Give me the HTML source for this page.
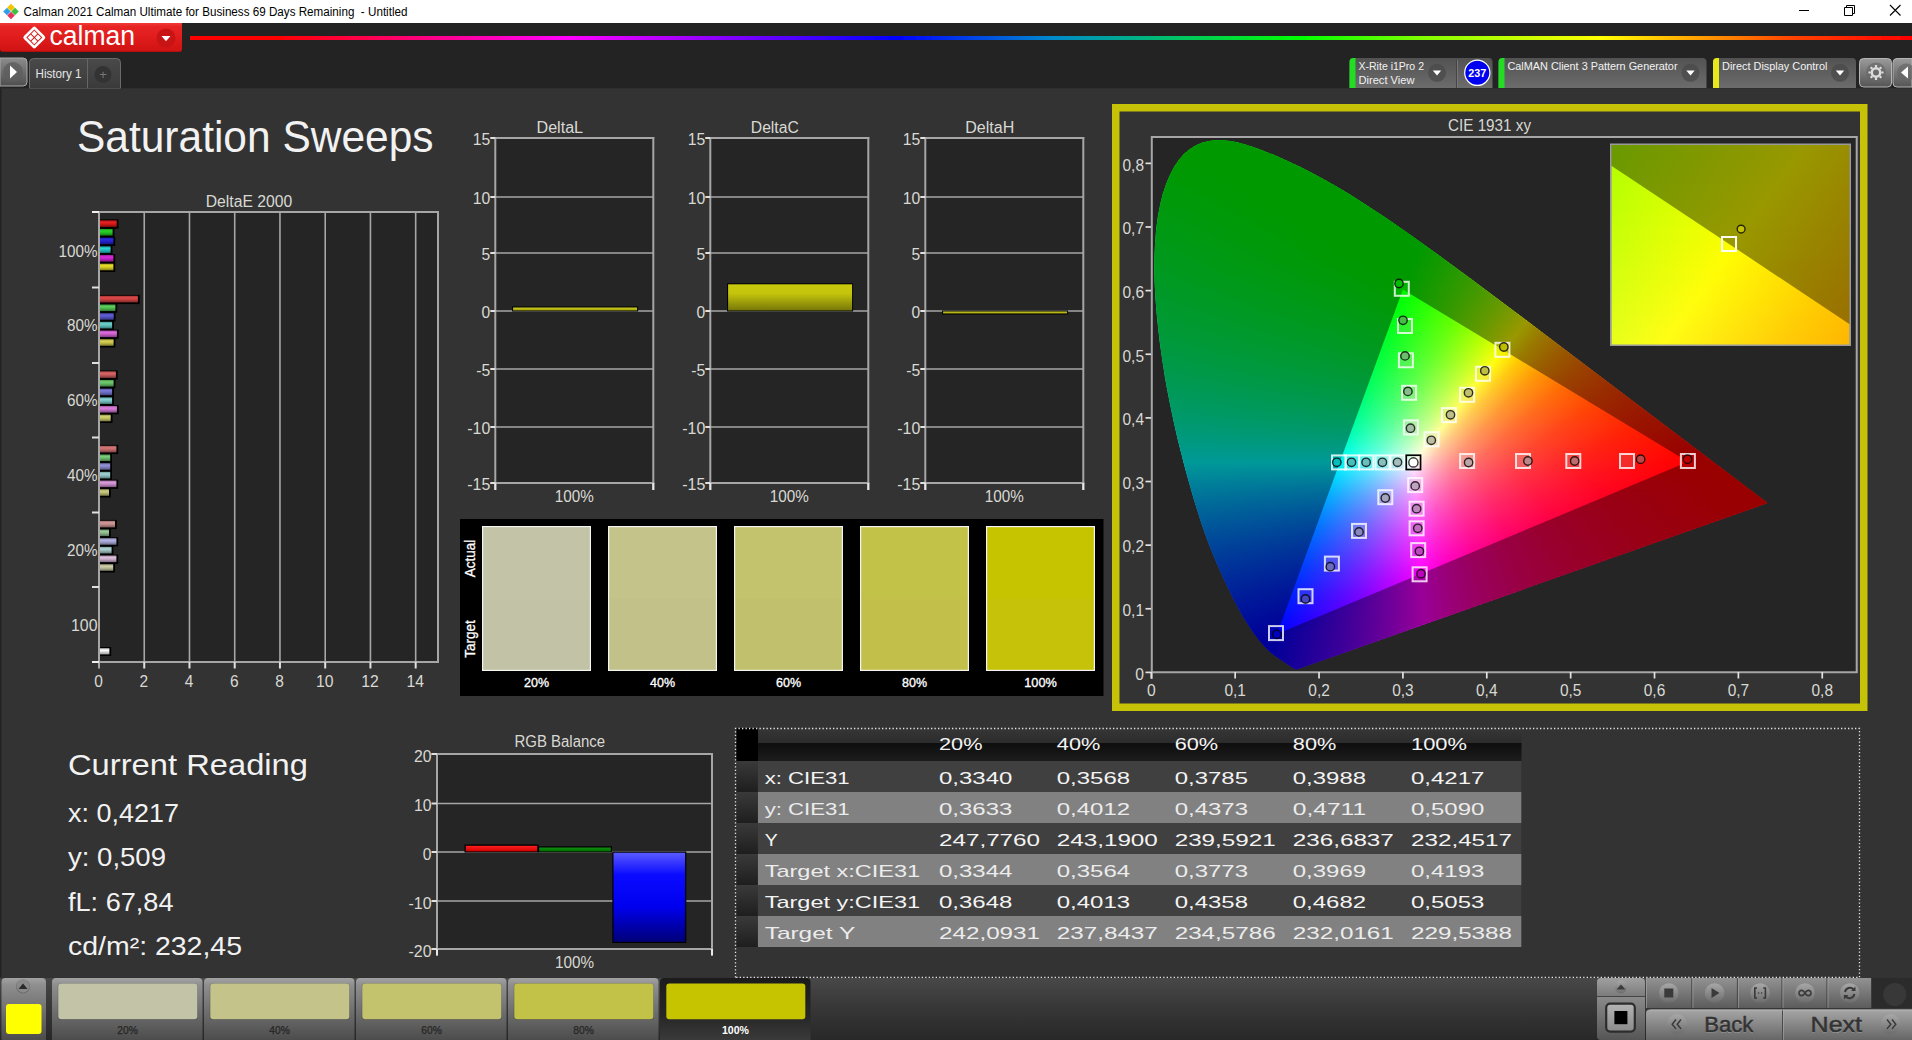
<!DOCTYPE html>
<html><head><meta charset="utf-8"><title>Calman 2021 - Saturation Sweeps</title>
<style>html,body{margin:0;padding:0;background:#333;overflow:hidden}svg{display:block;font-family:"Liberation Sans",sans-serif}</style>
</head><body>
<svg width="1912" height="1040" viewBox="0 0 1912 1040">
<defs>
<linearGradient id="rb" x1="0" y1="0" x2="1" y2="0"><stop offset="0" stop-color="#f00"/><stop offset="0.05" stop-color="#f00"/><stop offset="0.22" stop-color="#f0f"/><stop offset="0.41" stop-color="#00f"/><stop offset="0.5" stop-color="#08c"/><stop offset="0.645" stop-color="#0f0"/><stop offset="0.72" stop-color="#8f0"/><stop offset="0.82" stop-color="#ff0"/><stop offset="0.93" stop-color="#f40"/><stop offset="1" stop-color="#f00"/></linearGradient>
<filter id="bl" x="-1%" y="-100%" width="102%" height="300%"><feGaussianBlur stdDeviation="0 0.7"/></filter>
<linearGradient id="cal" x1="0" y1="0" x2="0" y2="1"><stop offset="0" stop-color="#f03a3a"/><stop offset="0.12" stop-color="#e82525"/><stop offset="0.5" stop-color="#e01c1c"/><stop offset="1" stop-color="#cf1212"/></linearGradient>
<linearGradient id="pb" x1="0" y1="0" x2="0" y2="1"><stop offset="0" stop-color="#8c8c8c"/><stop offset="1" stop-color="#4e4e4e"/></linearGradient>
<linearGradient id="tab" x1="0" y1="0" x2="0" y2="1"><stop offset="0" stop-color="#4a4a4a"/><stop offset="1" stop-color="#3a3a3a"/></linearGradient>
<linearGradient id="pn" x1="0" y1="0" x2="0" y2="1"><stop offset="0" stop-color="#525252"/><stop offset="1" stop-color="#6c6c6c"/></linearGradient>
<linearGradient id="gb" x1="0" y1="0" x2="0" y2="1"><stop offset="0" stop-color="#9a9a9a"/><stop offset="1" stop-color="#555"/></linearGradient>
<linearGradient id="b0" x1="0" y1="0" x2="0" y2="1"><stop offset="0" stop-color="#a71313"/><stop offset="0.3" stop-color="#e92222"/><stop offset="0.6" stop-color="#cc1717"/><stop offset="1" stop-color="#850f0f"/></linearGradient>
<linearGradient id="b1" x1="0" y1="0" x2="0" y2="1"><stop offset="0" stop-color="#1b981b"/><stop offset="0.3" stop-color="#2cd42c"/><stop offset="0.6" stop-color="#21b921"/><stop offset="1" stop-color="#157815"/></linearGradient>
<linearGradient id="b2" x1="0" y1="0" x2="0" y2="1"><stop offset="0" stop-color="#1b1b9f"/><stop offset="0.3" stop-color="#2c2cdf"/><stop offset="0.6" stop-color="#2121c2"/><stop offset="1" stop-color="#15157f"/></linearGradient>
<linearGradient id="b3" x1="0" y1="0" x2="0" y2="1"><stop offset="0" stop-color="#1b9898"/><stop offset="0.3" stop-color="#2cd4d4"/><stop offset="0.6" stop-color="#21b9b9"/><stop offset="1" stop-color="#157878"/></linearGradient>
<linearGradient id="b4" x1="0" y1="0" x2="0" y2="1"><stop offset="0" stop-color="#9c1b9c"/><stop offset="0.3" stop-color="#da2cda"/><stop offset="0.6" stop-color="#be21be"/><stop offset="1" stop-color="#7c157c"/></linearGradient>
<linearGradient id="b5" x1="0" y1="0" x2="0" y2="1"><stop offset="0" stop-color="#a79f1b"/><stop offset="0.3" stop-color="#e9df2c"/><stop offset="0.6" stop-color="#ccc221"/><stop offset="1" stop-color="#857f15"/></linearGradient>
<linearGradient id="b6" x1="0" y1="0" x2="0" y2="1"><stop offset="0" stop-color="#9f3232"/><stop offset="0.3" stop-color="#df4c4c"/><stop offset="0.6" stop-color="#c23d3d"/><stop offset="1" stop-color="#7f2828"/></linearGradient>
<linearGradient id="b7" x1="0" y1="0" x2="0" y2="1"><stop offset="0" stop-color="#3e943e"/><stop offset="0.3" stop-color="#5ccf5c"/><stop offset="0.6" stop-color="#4cb44c"/><stop offset="1" stop-color="#317531"/></linearGradient>
<linearGradient id="b8" x1="0" y1="0" x2="0" y2="1"><stop offset="0" stop-color="#42429c"/><stop offset="0.3" stop-color="#6161da"/><stop offset="0.6" stop-color="#5050be"/><stop offset="1" stop-color="#34347c"/></linearGradient>
<linearGradient id="b9" x1="0" y1="0" x2="0" y2="1"><stop offset="0" stop-color="#4a9894"/><stop offset="0.3" stop-color="#6bd4cf"/><stop offset="0.6" stop-color="#5ab9b4"/><stop offset="1" stop-color="#3a7875"/></linearGradient>
<linearGradient id="b10" x1="0" y1="0" x2="0" y2="1"><stop offset="0" stop-color="#9f4a9f"/><stop offset="0.3" stop-color="#df6bdf"/><stop offset="0.6" stop-color="#c25ac2"/><stop offset="1" stop-color="#7f3a7f"/></linearGradient>
<linearGradient id="b11" x1="0" y1="0" x2="0" y2="1"><stop offset="0" stop-color="#9c983a"/><stop offset="0.3" stop-color="#dad456"/><stop offset="0.6" stop-color="#beb947"/><stop offset="1" stop-color="#7c782e"/></linearGradient>
<linearGradient id="b12" x1="0" y1="0" x2="0" y2="1"><stop offset="0" stop-color="#9c4646"/><stop offset="0.3" stop-color="#da6666"/><stop offset="0.6" stop-color="#be5555"/><stop offset="1" stop-color="#7c3737"/></linearGradient>
<linearGradient id="b13" x1="0" y1="0" x2="0" y2="1"><stop offset="0" stop-color="#4e944e"/><stop offset="0.3" stop-color="#71cf71"/><stop offset="0.6" stop-color="#5fb45f"/><stop offset="1" stop-color="#3e753e"/></linearGradient>
<linearGradient id="b14" x1="0" y1="0" x2="0" y2="1"><stop offset="0" stop-color="#55559c"/><stop offset="0.3" stop-color="#7b7bda"/><stop offset="0.6" stop-color="#6868be"/><stop offset="1" stop-color="#44447c"/></linearGradient>
<linearGradient id="b15" x1="0" y1="0" x2="0" y2="1"><stop offset="0" stop-color="#5d9898"/><stop offset="0.3" stop-color="#86d4d4"/><stop offset="0.6" stop-color="#72b9b9"/><stop offset="1" stop-color="#4a7878"/></linearGradient>
<linearGradient id="b16" x1="0" y1="0" x2="0" y2="1"><stop offset="0" stop-color="#9f599f"/><stop offset="0.3" stop-color="#df80df"/><stop offset="0.6" stop-color="#c26dc2"/><stop offset="1" stop-color="#7f477f"/></linearGradient>
<linearGradient id="b17" x1="0" y1="0" x2="0" y2="1"><stop offset="0" stop-color="#98984e"/><stop offset="0.3" stop-color="#d4d471"/><stop offset="0.6" stop-color="#b9b95f"/><stop offset="1" stop-color="#78783e"/></linearGradient>
<linearGradient id="b18" x1="0" y1="0" x2="0" y2="1"><stop offset="0" stop-color="#9a5454"/><stop offset="0.3" stop-color="#d77979"/><stop offset="0.6" stop-color="#bc6666"/><stop offset="1" stop-color="#7a4242"/></linearGradient>
<linearGradient id="b19" x1="0" y1="0" x2="0" y2="1"><stop offset="0" stop-color="#559255"/><stop offset="0.3" stop-color="#7bcd7b"/><stop offset="0.6" stop-color="#68b268"/><stop offset="1" stop-color="#447444"/></linearGradient>
<linearGradient id="b20" x1="0" y1="0" x2="0" y2="1"><stop offset="0" stop-color="#69699d"/><stop offset="0.3" stop-color="#9595dc"/><stop offset="0.6" stop-color="#8080bf"/><stop offset="1" stop-color="#53537d"/></linearGradient>
<linearGradient id="b21" x1="0" y1="0" x2="0" y2="1"><stop offset="0" stop-color="#719898"/><stop offset="0.3" stop-color="#a0d4d4"/><stop offset="0.6" stop-color="#89b9b9"/><stop offset="1" stop-color="#597878"/></linearGradient>
<linearGradient id="b22" x1="0" y1="0" x2="0" y2="1"><stop offset="0" stop-color="#9c6d9c"/><stop offset="0.3" stop-color="#da9bda"/><stop offset="0.6" stop-color="#be85be"/><stop offset="1" stop-color="#7c567c"/></linearGradient>
<linearGradient id="b23" x1="0" y1="0" x2="0" y2="1"><stop offset="0" stop-color="#94945c"/><stop offset="0.3" stop-color="#cfcf83"/><stop offset="0.6" stop-color="#b4b470"/><stop offset="1" stop-color="#757549"/></linearGradient>
<linearGradient id="b24" x1="0" y1="0" x2="0" y2="1"><stop offset="0" stop-color="#986d6d"/><stop offset="0.3" stop-color="#d49b9b"/><stop offset="0.6" stop-color="#b98585"/><stop offset="1" stop-color="#785656"/></linearGradient>
<linearGradient id="b25" x1="0" y1="0" x2="0" y2="1"><stop offset="0" stop-color="#6d906d"/><stop offset="0.3" stop-color="#9bca9b"/><stop offset="0.6" stop-color="#85af85"/><stop offset="1" stop-color="#567256"/></linearGradient>
<linearGradient id="b26" x1="0" y1="0" x2="0" y2="1"><stop offset="0" stop-color="#8080a5"/><stop offset="0.3" stop-color="#b5b5e6"/><stop offset="0.6" stop-color="#9c9cc9"/><stop offset="1" stop-color="#666683"/></linearGradient>
<linearGradient id="b27" x1="0" y1="0" x2="0" y2="1"><stop offset="0" stop-color="#7c9898"/><stop offset="0.3" stop-color="#b0d4d4"/><stop offset="0.6" stop-color="#98b9b9"/><stop offset="1" stop-color="#637878"/></linearGradient>
<linearGradient id="b28" x1="0" y1="0" x2="0" y2="1"><stop offset="0" stop-color="#9f889f"/><stop offset="0.3" stop-color="#dfbfdf"/><stop offset="0.6" stop-color="#c2a6c2"/><stop offset="1" stop-color="#7f6c7f"/></linearGradient>
<linearGradient id="b29" x1="0" y1="0" x2="0" y2="1"><stop offset="0" stop-color="#959578"/><stop offset="0.3" stop-color="#d1d1aa"/><stop offset="0.6" stop-color="#b6b693"/><stop offset="1" stop-color="#777760"/></linearGradient>
<linearGradient id="bw" x1="0" y1="0" x2="0" y2="1"><stop offset="0" stop-color="#bbb"/><stop offset="0.35" stop-color="#fff"/><stop offset="1" stop-color="#999"/></linearGradient>
<linearGradient id="ybar" x1="0" y1="0" x2="0" y2="1"><stop offset="0" stop-color="#c9c90c"/><stop offset="0.35" stop-color="#c4c40c"/><stop offset="1" stop-color="#77770a"/></linearGradient>
<linearGradient id="ybar2" x1="0" y1="0" x2="0" y2="1"><stop offset="0" stop-color="#d0d020"/><stop offset="1" stop-color="#a0a010"/></linearGradient>
<linearGradient id="rbar" x1="0" y1="0" x2="0" y2="1"><stop offset="0" stop-color="#ff2020"/><stop offset="1" stop-color="#d00000"/></linearGradient>
<linearGradient id="gbar" x1="0" y1="0" x2="0" y2="1"><stop offset="0" stop-color="#109010"/><stop offset="1" stop-color="#006a00"/></linearGradient>
<linearGradient id="bbar" x1="0" y1="0" x2="0" y2="1"><stop offset="0" stop-color="#5a5aff"/><stop offset="0.25" stop-color="#0a0aff"/><stop offset="0.6" stop-color="#0000f0"/><stop offset="1" stop-color="#000078"/></linearGradient>
<linearGradient id="th" x1="0" y1="0" x2="0" y2="1"><stop offset="0" stop-color="#363636"/><stop offset="0.46" stop-color="#2c2c2c"/><stop offset="0.47" stop-color="#0e0e0e"/><stop offset="1" stop-color="#1c1c1c"/></linearGradient>
<linearGradient id="gut" x1="0" y1="0" x2="0" y2="1"><stop offset="0" stop-color="#3a3a3a"/><stop offset="1" stop-color="#1e1e1e"/></linearGradient>
<clipPath id="loc"><path d="M1297.3 669.2L1295.4 669.3L1293.5 668.3L1280.0 659.3L1274.5 655.4L1270.7 652.4L1266.5 648.5L1263.3 645.1L1259.6 640.8L1255.4 635.5L1250.9 629.1L1243.2 617.0L1234.4 600.9L1224.3 580.3L1216.8 563.6L1208.9 544.3L1205.0 533.6L1201.0 522.2L1193.3 497.5L1185.5 470.1L1177.9 440.3L1174.4 424.8L1171.0 409.0L1167.8 393.0L1164.9 376.9L1162.4 360.8L1160.1 344.7L1158.2 328.7L1156.6 313.0L1155.4 297.6L1154.6 282.8L1154.3 268.3L1154.5 254.4L1155.2 241.0L1156.3 228.1L1158.0 215.8L1160.2 204.3L1162.9 193.6L1166.2 183.7L1170.0 174.8L1174.2 166.8L1178.8 159.9L1183.9 154.1L1189.3 149.4L1195.1 145.7L1201.1 143.0L1207.3 141.2L1213.6 140.2L1220.1 140.0L1226.7 140.5L1233.4 141.6L1240.2 143.1L1247.0 145.0L1253.9 147.2L1260.8 149.7L1274.4 155.1L1287.6 161.0L1300.5 167.1L1313.1 173.5L1325.5 180.2L1337.8 187.3L1350.0 194.6L1362.1 202.2L1386.2 218.1L1410.3 234.7L1440.2 256.2L1470.2 278.2L1535.5 327.2L1767.5 503.1z"/></clipPath>
<linearGradient id="g0" gradientUnits="userSpaceOnUse" x1="1202" x2="1238"><stop offset="0" stop-color="#0f0"/><stop offset="1" stop-color="#0f0"/></linearGradient>
<linearGradient id="g1" gradientUnits="userSpaceOnUse" x1="1196" x2="1246"><stop offset="0" stop-color="#0f0"/><stop offset="1" stop-color="#0f0"/></linearGradient>
<linearGradient id="g2" gradientUnits="userSpaceOnUse" x1="1192" x2="1253"><stop offset="0" stop-color="#0f0"/><stop offset="1" stop-color="#0f0"/></linearGradient>
<linearGradient id="g3" gradientUnits="userSpaceOnUse" x1="1189" x2="1259"><stop offset="0" stop-color="#0f0"/><stop offset="1" stop-color="#0f0"/></linearGradient>
<linearGradient id="g4" gradientUnits="userSpaceOnUse" x1="1186" x2="1264"><stop offset="0" stop-color="#0f0"/><stop offset="1" stop-color="#0f0"/></linearGradient>
<linearGradient id="g5" gradientUnits="userSpaceOnUse" x1="1184" x2="1269"><stop offset="0" stop-color="#0f0"/><stop offset="1" stop-color="#0f0"/></linearGradient>
<linearGradient id="g6" gradientUnits="userSpaceOnUse" x1="1181" x2="1274"><stop offset="0" stop-color="#0f0"/><stop offset="1" stop-color="#0f0"/></linearGradient>
<linearGradient id="g7" gradientUnits="userSpaceOnUse" x1="1180" x2="1279"><stop offset="0" stop-color="#0f0"/><stop offset="1" stop-color="#0f0"/></linearGradient>
<linearGradient id="g8" gradientUnits="userSpaceOnUse" x1="1178" x2="1284"><stop offset="0" stop-color="#00ff01"/><stop offset="1" stop-color="#0f0"/></linearGradient>
<linearGradient id="g9" gradientUnits="userSpaceOnUse" x1="1176" x2="1288"><stop offset="0" stop-color="#00ff02"/><stop offset="1" stop-color="#0f0"/></linearGradient>
<linearGradient id="g10" gradientUnits="userSpaceOnUse" x1="1175" x2="1292"><stop offset="0" stop-color="#00ff03"/><stop offset="0.641" stop-color="#0f0"/><stop offset="1" stop-color="#0f0"/></linearGradient>
<linearGradient id="g11" gradientUnits="userSpaceOnUse" x1="1174" x2="1297"><stop offset="0" stop-color="#00ff04"/><stop offset="0.4146" stop-color="#0f0"/><stop offset="1" stop-color="#0f0"/></linearGradient>
<linearGradient id="g12" gradientUnits="userSpaceOnUse" x1="1172" x2="1301"><stop offset="0" stop-color="#00ff05"/><stop offset="0.3721" stop-color="#0f0"/><stop offset="1" stop-color="#0f0"/></linearGradient>
<linearGradient id="g13" gradientUnits="userSpaceOnUse" x1="1171" x2="1305"><stop offset="0" stop-color="#00ff06"/><stop offset="0.3731" stop-color="#0f0"/><stop offset="1" stop-color="#0f0"/></linearGradient>
<linearGradient id="g14" gradientUnits="userSpaceOnUse" x1="1170" x2="1309"><stop offset="0" stop-color="#00ff07"/><stop offset="0.3741" stop-color="#0f0"/><stop offset="1" stop-color="#0f0"/></linearGradient>
<linearGradient id="g15" gradientUnits="userSpaceOnUse" x1="1169" x2="1313"><stop offset="0" stop-color="#00ff08"/><stop offset="0.3819" stop-color="#0f0"/><stop offset="1" stop-color="#0f0"/></linearGradient>
<linearGradient id="g16" gradientUnits="userSpaceOnUse" x1="1168" x2="1317"><stop offset="0" stop-color="#00ff09"/><stop offset="0.396" stop-color="#0f0"/><stop offset="1" stop-color="#0f0"/></linearGradient>
<linearGradient id="g17" gradientUnits="userSpaceOnUse" x1="1167" x2="1320"><stop offset="0" stop-color="#00ff0a"/><stop offset="0.4052" stop-color="#0f0"/><stop offset="1" stop-color="#0f0"/></linearGradient>
<linearGradient id="g18" gradientUnits="userSpaceOnUse" x1="1166" x2="1324"><stop offset="0" stop-color="#00ff0b"/><stop offset="0.4177" stop-color="#0f0"/><stop offset="1" stop-color="#0f0"/></linearGradient>
<linearGradient id="g19" gradientUnits="userSpaceOnUse" x1="1165" x2="1328"><stop offset="0" stop-color="#00ff0c"/><stop offset="0.4294" stop-color="#0f0"/><stop offset="1" stop-color="#0f0"/></linearGradient>
<linearGradient id="g20" gradientUnits="userSpaceOnUse" x1="1164" x2="1331"><stop offset="0" stop-color="#00ff0d"/><stop offset="0.4431" stop-color="#0f0"/><stop offset="1" stop-color="#0f0"/></linearGradient>
<linearGradient id="g21" gradientUnits="userSpaceOnUse" x1="1164" x2="1335"><stop offset="0" stop-color="#00ff0d"/><stop offset="0.4503" stop-color="#0f0"/><stop offset="1" stop-color="#0f0"/></linearGradient>
<linearGradient id="g22" gradientUnits="userSpaceOnUse" x1="1163" x2="1338"><stop offset="0" stop-color="#00ff0e"/><stop offset="0.4629" stop-color="#0f0"/><stop offset="1" stop-color="#0f0"/></linearGradient>
<linearGradient id="g23" gradientUnits="userSpaceOnUse" x1="1162" x2="1341"><stop offset="0" stop-color="#00ff0f"/><stop offset="0.4749" stop-color="#0f0"/><stop offset="1" stop-color="#0f0"/></linearGradient>
<linearGradient id="g24" gradientUnits="userSpaceOnUse" x1="1162" x2="1345"><stop offset="0" stop-color="#00ff10"/><stop offset="0.4809" stop-color="#0f0"/><stop offset="1" stop-color="#0f0"/></linearGradient>
<linearGradient id="g25" gradientUnits="userSpaceOnUse" x1="1161" x2="1348"><stop offset="0" stop-color="#0f1"/><stop offset="0.492" stop-color="#0f0"/><stop offset="1" stop-color="#0f0"/></linearGradient>
<linearGradient id="g26" gradientUnits="userSpaceOnUse" x1="1160" x2="1351"><stop offset="0" stop-color="#00ff12"/><stop offset="0.5026" stop-color="#0f0"/><stop offset="1" stop-color="#0f0"/></linearGradient>
<linearGradient id="g27" gradientUnits="userSpaceOnUse" x1="1160" x2="1355"><stop offset="0" stop-color="#00ff13"/><stop offset="0.5128" stop-color="#0f0"/><stop offset="1" stop-color="#0f0"/></linearGradient>
<linearGradient id="g28" gradientUnits="userSpaceOnUse" x1="1159" x2="1358"><stop offset="0" stop-color="#00ff14"/><stop offset="0.5226" stop-color="#0f0"/><stop offset="1" stop-color="#0f0"/></linearGradient>
<linearGradient id="g29" gradientUnits="userSpaceOnUse" x1="1159" x2="1361"><stop offset="0" stop-color="#00ff15"/><stop offset="0.5297" stop-color="#0f0"/><stop offset="1" stop-color="#0f0"/></linearGradient>
<linearGradient id="g30" gradientUnits="userSpaceOnUse" x1="1158" x2="1364"><stop offset="0" stop-color="#00ff16"/><stop offset="0.5388" stop-color="#0f0"/><stop offset="1" stop-color="#0f0"/></linearGradient>
<linearGradient id="g31" gradientUnits="userSpaceOnUse" x1="1158" x2="1367"><stop offset="0" stop-color="#00ff16"/><stop offset="0.5455" stop-color="#0f0"/><stop offset="1" stop-color="#0f0"/></linearGradient>
<linearGradient id="g32" gradientUnits="userSpaceOnUse" x1="1157" x2="1370"><stop offset="0" stop-color="#00ff17"/><stop offset="0.554" stop-color="#0f0"/><stop offset="1" stop-color="#0f0"/></linearGradient>
<linearGradient id="g33" gradientUnits="userSpaceOnUse" x1="1157" x2="1374"><stop offset="0" stop-color="#00ff18"/><stop offset="0.5622" stop-color="#0f0"/><stop offset="1" stop-color="#0f0"/></linearGradient>
<linearGradient id="g34" gradientUnits="userSpaceOnUse" x1="1157" x2="1377"><stop offset="0" stop-color="#00ff19"/><stop offset="0.5682" stop-color="#0f0"/><stop offset="1" stop-color="#0f0"/></linearGradient>
<linearGradient id="g35" gradientUnits="userSpaceOnUse" x1="1156" x2="1380"><stop offset="0" stop-color="#00ff1a"/><stop offset="0.5759" stop-color="#0f0"/><stop offset="1" stop-color="#0f0"/></linearGradient>
<linearGradient id="g36" gradientUnits="userSpaceOnUse" x1="1156" x2="1383"><stop offset="0" stop-color="#00ff1b"/><stop offset="0.5815" stop-color="#0f0"/><stop offset="1" stop-color="#0f0"/></linearGradient>
<linearGradient id="g37" gradientUnits="userSpaceOnUse" x1="1155" x2="1386"><stop offset="0" stop-color="#00ff1c"/><stop offset="0.5931" stop-color="#0f0"/><stop offset="1" stop-color="#0f0"/></linearGradient>
<linearGradient id="g38" gradientUnits="userSpaceOnUse" x1="1155" x2="1389"><stop offset="0" stop-color="#00ff1d"/><stop offset="0.5983" stop-color="#0f0"/><stop offset="1" stop-color="#0f0"/></linearGradient>
<linearGradient id="g39" gradientUnits="userSpaceOnUse" x1="1155" x2="1392"><stop offset="0" stop-color="#00ff1e"/><stop offset="0.6034" stop-color="#0f0"/><stop offset="1" stop-color="#0f0"/></linearGradient>
<linearGradient id="g40" gradientUnits="userSpaceOnUse" x1="1155" x2="1394"><stop offset="0" stop-color="#00ff1f"/><stop offset="0.6109" stop-color="#0f0"/><stop offset="1" stop-color="#0f0"/></linearGradient>
<linearGradient id="g41" gradientUnits="userSpaceOnUse" x1="1154" x2="1397"><stop offset="0" stop-color="#00ff20"/><stop offset="0.6173" stop-color="#0f0"/><stop offset="1" stop-color="#0f0"/></linearGradient>
<linearGradient id="g42" gradientUnits="userSpaceOnUse" x1="1154" x2="1400"><stop offset="0" stop-color="#00ff21"/><stop offset="0.626" stop-color="#0f0"/><stop offset="1" stop-color="#0f0"/></linearGradient>
<linearGradient id="g43" gradientUnits="userSpaceOnUse" x1="1154" x2="1403"><stop offset="0" stop-color="#0f2"/><stop offset="0.6305" stop-color="#0f0"/><stop offset="1" stop-color="#0f0"/></linearGradient>
<linearGradient id="g44" gradientUnits="userSpaceOnUse" x1="1154" x2="1406"><stop offset="0" stop-color="#00ff23"/><stop offset="0.6349" stop-color="#0f0"/><stop offset="1" stop-color="#0f0"/></linearGradient>
<linearGradient id="g45" gradientUnits="userSpaceOnUse" x1="1153" x2="1409"><stop offset="0" stop-color="#00ff24"/><stop offset="0.6406" stop-color="#0f0"/><stop offset="1" stop-color="#0f0"/></linearGradient>
<linearGradient id="g46" gradientUnits="userSpaceOnUse" x1="1153" x2="1412"><stop offset="0" stop-color="#00ff25"/><stop offset="0.6486" stop-color="#0f0"/><stop offset="1" stop-color="#0f0"/></linearGradient>
<linearGradient id="g47" gradientUnits="userSpaceOnUse" x1="1153" x2="1415"><stop offset="0" stop-color="#00ff26"/><stop offset="0.6527" stop-color="#0f0"/><stop offset="1" stop-color="#0f0"/></linearGradient>
<linearGradient id="g48" gradientUnits="userSpaceOnUse" x1="1153" x2="1417"><stop offset="0" stop-color="#00ff26"/><stop offset="0.6591" stop-color="#0f0"/><stop offset="1" stop-color="#0f0"/></linearGradient>
<linearGradient id="g49" gradientUnits="userSpaceOnUse" x1="1153" x2="1420"><stop offset="0" stop-color="#00ff27"/><stop offset="0.6629" stop-color="#0f0"/><stop offset="1" stop-color="#0f0"/></linearGradient>
<linearGradient id="g50" gradientUnits="userSpaceOnUse" x1="1153" x2="1423"><stop offset="0" stop-color="#00ff28"/><stop offset="0.6704" stop-color="#0f0"/><stop offset="0.9963" stop-color="#02ff00"/><stop offset="1" stop-color="#03ff00"/></linearGradient>
<linearGradient id="g51" gradientUnits="userSpaceOnUse" x1="1153" x2="1426"><stop offset="0" stop-color="#00ff29"/><stop offset="0.674" stop-color="#0f0"/><stop offset="0.9853" stop-color="#03ff00"/><stop offset="1" stop-color="#07ff00"/></linearGradient>
<linearGradient id="g52" gradientUnits="userSpaceOnUse" x1="1152" x2="1429"><stop offset="0" stop-color="#00ff2b"/><stop offset="0.6787" stop-color="#0f0"/><stop offset="0.9711" stop-color="#02ff00"/><stop offset="1" stop-color="#0cff00"/></linearGradient>
<linearGradient id="g53" gradientUnits="userSpaceOnUse" x1="1152" x2="1431"><stop offset="0" stop-color="#00ff2c"/><stop offset="0.6846" stop-color="#0f0"/><stop offset="0.9606" stop-color="#02ff00"/><stop offset="1" stop-color="#0fff00"/></linearGradient>
<linearGradient id="g54" gradientUnits="userSpaceOnUse" x1="1152" x2="1434"><stop offset="0" stop-color="#00ff2d"/><stop offset="0.6879" stop-color="#0f0"/><stop offset="0.9468" stop-color="#02ff00"/><stop offset="1" stop-color="#14ff00"/></linearGradient>
<linearGradient id="g55" gradientUnits="userSpaceOnUse" x1="1152" x2="1437"><stop offset="0" stop-color="#00ff2e"/><stop offset="0.6947" stop-color="#0f0"/><stop offset="0.9368" stop-color="#03ff00"/><stop offset="1" stop-color="#19ff00"/></linearGradient>
<linearGradient id="g56" gradientUnits="userSpaceOnUse" x1="1152" x2="1440"><stop offset="0" stop-color="#00ff2f"/><stop offset="0.6979" stop-color="#0f0"/><stop offset="0.9236" stop-color="#02ff00"/><stop offset="1" stop-color="#1eff00"/></linearGradient>
<linearGradient id="g57" gradientUnits="userSpaceOnUse" x1="1152" x2="1442"><stop offset="0" stop-color="#00ff30"/><stop offset="0.7034" stop-color="#0f0"/><stop offset="0.9138" stop-color="#02ff00"/><stop offset="1" stop-color="#2f0"/></linearGradient>
<linearGradient id="g58" gradientUnits="userSpaceOnUse" x1="1152" x2="1445"><stop offset="0" stop-color="#00ff31"/><stop offset="0.6621" stop-color="#00ff01"/><stop offset="0.901" stop-color="#02ff00"/><stop offset="1" stop-color="#27ff00"/></linearGradient>
<linearGradient id="g59" gradientUnits="userSpaceOnUse" x1="1152" x2="1448"><stop offset="0" stop-color="#00ff32"/><stop offset="0.652" stop-color="#00ff02"/><stop offset="0.8919" stop-color="#02ff00"/><stop offset="1" stop-color="#2cff00"/></linearGradient>
<linearGradient id="g60" gradientUnits="userSpaceOnUse" x1="1152" x2="1451"><stop offset="0" stop-color="#0f3"/><stop offset="0.6455" stop-color="#00ff03"/><stop offset="0.7893" stop-color="#0f0"/><stop offset="0.8796" stop-color="#02ff00"/><stop offset="1" stop-color="#32ff00"/></linearGradient>
<linearGradient id="g61" gradientUnits="userSpaceOnUse" x1="1152" x2="1453"><stop offset="0" stop-color="#00ff34"/><stop offset="0.6379" stop-color="#00ff05"/><stop offset="0.7475" stop-color="#0f0"/><stop offset="0.8704" stop-color="#02ff00"/><stop offset="1" stop-color="#36ff00"/></linearGradient>
<linearGradient id="g62" gradientUnits="userSpaceOnUse" x1="1152" x2="1456"><stop offset="0" stop-color="#00ff35"/><stop offset="0.6316" stop-color="#00ff06"/><stop offset="0.7401" stop-color="#0f0"/><stop offset="0.8586" stop-color="#01ff00"/><stop offset="1" stop-color="#3bff00"/></linearGradient>
<linearGradient id="g63" gradientUnits="userSpaceOnUse" x1="1152" x2="1459"><stop offset="0" stop-color="#00ff36"/><stop offset="0.6221" stop-color="#00ff07"/><stop offset="0.7362" stop-color="#0f0"/><stop offset="0.8502" stop-color="#02ff00"/><stop offset="1" stop-color="#41ff00"/></linearGradient>
<linearGradient id="g64" gradientUnits="userSpaceOnUse" x1="1152" x2="1462"><stop offset="0" stop-color="#00ff37"/><stop offset="0.6161" stop-color="#00ff08"/><stop offset="0.7355" stop-color="#0f0"/><stop offset="0.8387" stop-color="#02ff00"/><stop offset="1" stop-color="#47ff00"/></linearGradient>
<linearGradient id="g65" gradientUnits="userSpaceOnUse" x1="1152" x2="1464"><stop offset="0" stop-color="#00ff38"/><stop offset="0.609" stop-color="#00ff0a"/><stop offset="0.7404" stop-color="#0f0"/><stop offset="0.8301" stop-color="#02ff00"/><stop offset="1" stop-color="#4cff00"/></linearGradient>
<linearGradient id="g66" gradientUnits="userSpaceOnUse" x1="1152" x2="1467"><stop offset="0" stop-color="#00ff39"/><stop offset="0.6032" stop-color="#00ff0b"/><stop offset="0.7429" stop-color="#0f0"/><stop offset="0.8222" stop-color="#03ff00"/><stop offset="1" stop-color="#52ff00"/></linearGradient>
<linearGradient id="g67" gradientUnits="userSpaceOnUse" x1="1152" x2="1470"><stop offset="0" stop-color="#00ff3a"/><stop offset="0.5943" stop-color="#00ff0c"/><stop offset="0.7421" stop-color="#0f0"/><stop offset="0.8113" stop-color="#02ff00"/><stop offset="1" stop-color="#58ff00"/></linearGradient>
<linearGradient id="g68" gradientUnits="userSpaceOnUse" x1="1152" x2="1472"><stop offset="0" stop-color="#00ff3c"/><stop offset="0.5906" stop-color="#00ff0d"/><stop offset="0.75" stop-color="#0f0"/><stop offset="0.8031" stop-color="#02ff00"/><stop offset="1" stop-color="#5dff00"/></linearGradient>
<linearGradient id="g69" gradientUnits="userSpaceOnUse" x1="1152" x2="1475"><stop offset="0" stop-color="#00ff3d"/><stop offset="0.582" stop-color="#00ff0f"/><stop offset="0.7523" stop-color="#0f0"/><stop offset="0.7957" stop-color="#03ff00"/><stop offset="1" stop-color="#63ff00"/></linearGradient>
<linearGradient id="g70" gradientUnits="userSpaceOnUse" x1="1152" x2="1478"><stop offset="0" stop-color="#00ff3e"/><stop offset="0.5767" stop-color="#00ff10"/><stop offset="0.7546" stop-color="#0f0"/><stop offset="0.7853" stop-color="#03ff00"/><stop offset="0.9908" stop-color="#65ff00"/><stop offset="1" stop-color="#6aff00"/></linearGradient>
<linearGradient id="g71" gradientUnits="userSpaceOnUse" x1="1152" x2="1480"><stop offset="0" stop-color="#00ff3f"/><stop offset="0.5732" stop-color="#0f1"/><stop offset="0.7591" stop-color="#0f0"/><stop offset="0.7805" stop-color="#04ff00"/><stop offset="0.9848" stop-color="#67ff00"/><stop offset="1" stop-color="#6fff00"/></linearGradient>
<linearGradient id="g72" gradientUnits="userSpaceOnUse" x1="1152" x2="1483"><stop offset="0" stop-color="#00ff40"/><stop offset="0.565" stop-color="#00ff13"/><stop offset="0.7613" stop-color="#0f0"/><stop offset="0.9486" stop-color="#5aff00"/><stop offset="1" stop-color="#76ff00"/></linearGradient>
<linearGradient id="g73" gradientUnits="userSpaceOnUse" x1="1152" x2="1486"><stop offset="0" stop-color="#00ff41"/><stop offset="0.5599" stop-color="#00ff14"/><stop offset="0.7575" stop-color="#02ff00"/><stop offset="0.9551" stop-color="#64ff00"/><stop offset="1" stop-color="#7dff00"/></linearGradient>
<linearGradient id="g74" gradientUnits="userSpaceOnUse" x1="1152" x2="1489"><stop offset="0" stop-color="#00ff43"/><stop offset="0.5519" stop-color="#00ff15"/><stop offset="0.7478" stop-color="#01ff00"/><stop offset="0.9436" stop-color="#64ff00"/><stop offset="1" stop-color="#85ff00"/></linearGradient>
<linearGradient id="g75" gradientUnits="userSpaceOnUse" x1="1153" x2="1491"><stop offset="0" stop-color="#0f4"/><stop offset="0.5503" stop-color="#00ff16"/><stop offset="0.7426" stop-color="#02ff01"/><stop offset="0.9349" stop-color="#64ff00"/><stop offset="1" stop-color="#8aff00"/></linearGradient>
<linearGradient id="g76" gradientUnits="userSpaceOnUse" x1="1153" x2="1494"><stop offset="0" stop-color="#00ff45"/><stop offset="0.5425" stop-color="#00ff18"/><stop offset="0.7331" stop-color="#02ff02"/><stop offset="0.9238" stop-color="#65ff00"/><stop offset="1" stop-color="#92ff00"/></linearGradient>
<linearGradient id="g77" gradientUnits="userSpaceOnUse" x1="1153" x2="1497"><stop offset="0" stop-color="#00ff46"/><stop offset="0.5378" stop-color="#00ff19"/><stop offset="0.7238" stop-color="#02ff04"/><stop offset="0.814" stop-color="#2eff00"/><stop offset="0.9884" stop-color="#93ff00"/><stop offset="1" stop-color="#9aff00"/></linearGradient>
<linearGradient id="g78" gradientUnits="userSpaceOnUse" x1="1153" x2="1499"><stop offset="0" stop-color="#00ff47"/><stop offset="0.5318" stop-color="#00ff1b"/><stop offset="0.7197" stop-color="#03ff05"/><stop offset="0.7977" stop-color="#2aff00"/><stop offset="0.974" stop-color="#8fff00"/><stop offset="1" stop-color="#a0ff00"/></linearGradient>
<linearGradient id="g79" gradientUnits="userSpaceOnUse" x1="1153" x2="1502"><stop offset="0" stop-color="#00ff49"/><stop offset="0.5272" stop-color="#00ff1c"/><stop offset="0.7106" stop-color="#02ff07"/><stop offset="0.7908" stop-color="#2bff00"/><stop offset="0.9628" stop-color="#90ff00"/><stop offset="1" stop-color="#a9ff00"/></linearGradient>
<linearGradient id="g80" gradientUnits="userSpaceOnUse" x1="1153" x2="1505"><stop offset="0" stop-color="#00ff4a"/><stop offset="0.5227" stop-color="#00ff1d"/><stop offset="0.7017" stop-color="#02ff08"/><stop offset="0.7898" stop-color="#30ff00"/><stop offset="0.9574" stop-color="#94ff00"/><stop offset="1" stop-color="#b1ff00"/></linearGradient>
<linearGradient id="g81" gradientUnits="userSpaceOnUse" x1="1153" x2="1507"><stop offset="0" stop-color="#00ff4b"/><stop offset="0.5169" stop-color="#00ff1f"/><stop offset="0.6949" stop-color="#01ff0a"/><stop offset="0.7938" stop-color="#36ff00"/><stop offset="0.9576" stop-color="#9aff00"/><stop offset="1" stop-color="#b8ff00"/></linearGradient>
<linearGradient id="g82" gradientUnits="userSpaceOnUse" x1="1153" x2="1510"><stop offset="0" stop-color="#00ff4d"/><stop offset="0.5126" stop-color="#00ff20"/><stop offset="0.6891" stop-color="#03ff0b"/><stop offset="0.7955" stop-color="#3cff00"/><stop offset="0.958" stop-color="#a3ff00"/><stop offset="1" stop-color="#c1ff00"/></linearGradient>
<linearGradient id="g83" gradientUnits="userSpaceOnUse" x1="1154" x2="1513"><stop offset="0" stop-color="#00ff4e"/><stop offset="0.507" stop-color="#0f2"/><stop offset="0.6797" stop-color="#02ff0d"/><stop offset="0.7967" stop-color="#42ff00"/><stop offset="0.9554" stop-color="#a9ff00"/><stop offset="1" stop-color="#caff00"/></linearGradient>
<linearGradient id="g84" gradientUnits="userSpaceOnUse" x1="1154" x2="1515"><stop offset="0" stop-color="#00ff4f"/><stop offset="0.5042" stop-color="#00ff23"/><stop offset="0.6731" stop-color="#02ff0f"/><stop offset="0.8006" stop-color="#49ff00"/><stop offset="0.9557" stop-color="#b0ff00"/><stop offset="1" stop-color="#d1ff00"/></linearGradient>
<linearGradient id="g85" gradientUnits="userSpaceOnUse" x1="1154" x2="1518"><stop offset="0" stop-color="#00ff50"/><stop offset="0.4973" stop-color="#00ff25"/><stop offset="0.6648" stop-color="#01ff11"/><stop offset="0.8022" stop-color="#50ff00"/><stop offset="0.9533" stop-color="#b7ff00"/><stop offset="1" stop-color="#dbff00"/></linearGradient>
<linearGradient id="g86" gradientUnits="userSpaceOnUse" x1="1154" x2="1520"><stop offset="0" stop-color="#00ff52"/><stop offset="0.4945" stop-color="#00ff26"/><stop offset="0.6612" stop-color="#02ff12"/><stop offset="0.806" stop-color="#57ff00"/><stop offset="0.9536" stop-color="#beff00"/><stop offset="1" stop-color="#e3ff00"/></linearGradient>
<linearGradient id="g87" gradientUnits="userSpaceOnUse" x1="1154" x2="1523"><stop offset="0" stop-color="#00ff53"/><stop offset="0.4905" stop-color="#00ff28"/><stop offset="0.6531" stop-color="#02ff14"/><stop offset="0.8076" stop-color="#5eff00"/><stop offset="0.9512" stop-color="#c5ff00"/><stop offset="1" stop-color="#edff00"/></linearGradient>
<linearGradient id="g88" gradientUnits="userSpaceOnUse" x1="1154" x2="1526"><stop offset="0" stop-color="#0f5"/><stop offset="0.4839" stop-color="#00ff29"/><stop offset="0.6452" stop-color="#02ff16"/><stop offset="0.8091" stop-color="#65ff00"/><stop offset="0.9489" stop-color="#cdff00"/><stop offset="1" stop-color="#f8ff00"/></linearGradient>
<linearGradient id="g89" gradientUnits="userSpaceOnUse" x1="1155" x2="1528"><stop offset="0" stop-color="#00ff56"/><stop offset="0.4826" stop-color="#00ff2b"/><stop offset="0.6381" stop-color="#01ff17"/><stop offset="0.7989" stop-color="#64ff00"/><stop offset="0.9383" stop-color="#cbff00"/><stop offset="1" stop-color="#fffe00"/></linearGradient>
<linearGradient id="g90" gradientUnits="userSpaceOnUse" x1="1155" x2="1531"><stop offset="0" stop-color="#00ff57"/><stop offset="0.4761" stop-color="#00ff2c"/><stop offset="0.633" stop-color="#02ff19"/><stop offset="0.7926" stop-color="#66ff01"/><stop offset="0.9282" stop-color="#cf0"/><stop offset="0.9894" stop-color="#fffd00"/><stop offset="1" stop-color="#fff300"/></linearGradient>
<linearGradient id="g91" gradientUnits="userSpaceOnUse" x1="1155" x2="1534"><stop offset="0" stop-color="#00ff59"/><stop offset="0.4723" stop-color="#00ff2e"/><stop offset="0.6253" stop-color="#02ff1b"/><stop offset="0.781" stop-color="#64ff03"/><stop offset="0.8654" stop-color="#a3ff00"/><stop offset="0.9763" stop-color="#fffd00"/><stop offset="1" stop-color="#ffe900"/></linearGradient>
<linearGradient id="g92" gradientUnits="userSpaceOnUse" x1="1155" x2="1536"><stop offset="0" stop-color="#00ff5a"/><stop offset="0.4698" stop-color="#00ff2f"/><stop offset="0.6194" stop-color="#02ff1d"/><stop offset="0.7743" stop-color="#64ff05"/><stop offset="0.832" stop-color="#8fff00"/><stop offset="0.958" stop-color="#f8ff00"/><stop offset="0.9685" stop-color="#fffc00"/><stop offset="1" stop-color="#ffe200"/></linearGradient>
<linearGradient id="g93" gradientUnits="userSpaceOnUse" x1="1155" x2="1539"><stop offset="0" stop-color="#00ff5c"/><stop offset="0.4635" stop-color="#00ff31"/><stop offset="0.612" stop-color="#01ff1f"/><stop offset="0.7656" stop-color="#65ff07"/><stop offset="0.8281" stop-color="#93ff00"/><stop offset="0.9505" stop-color="#fcff00"/><stop offset="0.987" stop-color="#ffe200"/><stop offset="1" stop-color="#ffd800"/></linearGradient>
<linearGradient id="g94" gradientUnits="userSpaceOnUse" x1="1156" x2="1542"><stop offset="0" stop-color="#00ff5d"/><stop offset="0.4611" stop-color="#0f3"/><stop offset="0.6062" stop-color="#02ff20"/><stop offset="0.7565" stop-color="#65ff09"/><stop offset="0.829" stop-color="#9cff00"/><stop offset="0.943" stop-color="#fffe00"/><stop offset="1" stop-color="#ffd000"/></linearGradient>
<linearGradient id="g95" gradientUnits="userSpaceOnUse" x1="1156" x2="1544"><stop offset="0" stop-color="#00ff5f"/><stop offset="0.4562" stop-color="#00ff35"/><stop offset="0.6005" stop-color="#02ff22"/><stop offset="0.75" stop-color="#65ff0b"/><stop offset="0.8325" stop-color="#a5ff00"/><stop offset="0.9356" stop-color="#fffd00"/><stop offset="1" stop-color="#ffc900"/></linearGradient>
<linearGradient id="g96" gradientUnits="userSpaceOnUse" x1="1156" x2="1547"><stop offset="0" stop-color="#00ff60"/><stop offset="0.4527" stop-color="#00ff36"/><stop offset="0.5934" stop-color="#02ff24"/><stop offset="0.7391" stop-color="#63ff0e"/><stop offset="0.8312" stop-color="#acff00"/><stop offset="0.9233" stop-color="#fffe00"/><stop offset="0.9898" stop-color="#ffc800"/><stop offset="1" stop-color="#ffc100"/></linearGradient>
<linearGradient id="g97" gradientUnits="userSpaceOnUse" x1="1156" x2="1550"><stop offset="0" stop-color="#00ff62"/><stop offset="0.4492" stop-color="#00ff38"/><stop offset="0.5863" stop-color="#01ff26"/><stop offset="0.731" stop-color="#64ff10"/><stop offset="0.8325" stop-color="#b6ff00"/><stop offset="0.9112" stop-color="#ff0"/><stop offset="0.9772" stop-color="#ffc800"/><stop offset="1" stop-color="#ffb900"/></linearGradient>
<linearGradient id="g98" gradientUnits="userSpaceOnUse" x1="1157" x2="1552"><stop offset="0" stop-color="#00ff63"/><stop offset="0.4456" stop-color="#00ff3a"/><stop offset="0.5823" stop-color="#02ff28"/><stop offset="0.7266" stop-color="#66ff12"/><stop offset="0.838" stop-color="#c2ff00"/><stop offset="0.9038" stop-color="#fffd00"/><stop offset="0.9696" stop-color="#ffc700"/><stop offset="1" stop-color="#ffb400"/></linearGradient>
<linearGradient id="g99" gradientUnits="userSpaceOnUse" x1="1157" x2="1555"><stop offset="0" stop-color="#00ff65"/><stop offset="0.4422" stop-color="#00ff3b"/><stop offset="0.5754" stop-color="#02ff2a"/><stop offset="0.7161" stop-color="#64ff14"/><stop offset="0.8392" stop-color="#cf0"/><stop offset="0.892" stop-color="#fffe00"/><stop offset="0.9548" stop-color="#ffc900"/><stop offset="1" stop-color="#ffac00"/></linearGradient>
<linearGradient id="g100" gradientUnits="userSpaceOnUse" x1="1157" x2="1558"><stop offset="0" stop-color="#0f6"/><stop offset="0.4389" stop-color="#00ff3d"/><stop offset="0.5686" stop-color="#01ff2c"/><stop offset="0.7082" stop-color="#64ff16"/><stop offset="0.8279" stop-color="#cbff00"/><stop offset="0.8828" stop-color="#fffd00"/><stop offset="0.9451" stop-color="#ffc800"/><stop offset="1" stop-color="#ffa600"/></linearGradient>
<linearGradient id="g101" gradientUnits="userSpaceOnUse" x1="1157" x2="1560"><stop offset="0" stop-color="#00ff68"/><stop offset="0.4367" stop-color="#00ff3f"/><stop offset="0.5633" stop-color="#01ff2e"/><stop offset="0.7022" stop-color="#65ff19"/><stop offset="0.8213" stop-color="#ccff02"/><stop offset="0.8734" stop-color="#fffe00"/><stop offset="0.9355" stop-color="#ffc800"/><stop offset="1" stop-color="#ffa100"/></linearGradient>
<linearGradient id="g102" gradientUnits="userSpaceOnUse" x1="1158" x2="1563"><stop offset="0" stop-color="#00ff69"/><stop offset="0.4321" stop-color="#00ff41"/><stop offset="0.558" stop-color="#02ff30"/><stop offset="0.6938" stop-color="#65ff1b"/><stop offset="0.8123" stop-color="#cdff04"/><stop offset="0.8617" stop-color="#ff0"/><stop offset="0.9235" stop-color="#ffc900"/><stop offset="1" stop-color="#ff9a00"/></linearGradient>
<linearGradient id="g103" gradientUnits="userSpaceOnUse" x1="1158" x2="1565"><stop offset="0" stop-color="#00ff6b"/><stop offset="0.43" stop-color="#00ff42"/><stop offset="0.5528" stop-color="#02ff32"/><stop offset="0.688" stop-color="#65ff1d"/><stop offset="0.8034" stop-color="#ccff07"/><stop offset="0.8526" stop-color="#feff00"/><stop offset="0.9165" stop-color="#ffc700"/><stop offset="0.9975" stop-color="#ff9700"/><stop offset="1" stop-color="#ff9500"/></linearGradient>
<linearGradient id="g104" gradientUnits="userSpaceOnUse" x1="1158" x2="1568"><stop offset="0" stop-color="#00ff6d"/><stop offset="0.4268" stop-color="#0f4"/><stop offset="0.5463" stop-color="#01ff35"/><stop offset="0.678" stop-color="#63ff20"/><stop offset="0.7927" stop-color="#cbff0a"/><stop offset="0.8439" stop-color="#fffe00"/><stop offset="0.9024" stop-color="#ffc900"/><stop offset="0.9805" stop-color="#f90"/><stop offset="1" stop-color="#ff9000"/></linearGradient>
<linearGradient id="g105" gradientUnits="userSpaceOnUse" x1="1158" x2="1571"><stop offset="0" stop-color="#00ff6e"/><stop offset="0.4213" stop-color="#00ff46"/><stop offset="0.5424" stop-color="#03ff36"/><stop offset="0.6731" stop-color="#6f2"/><stop offset="0.7869" stop-color="#ceff0c"/><stop offset="0.8354" stop-color="#fffd01"/><stop offset="0.8935" stop-color="#ffc800"/><stop offset="0.9709" stop-color="#ff9800"/><stop offset="1" stop-color="#ff8a00"/></linearGradient>
<linearGradient id="g106" gradientUnits="userSpaceOnUse" x1="1159" x2="1573"><stop offset="0" stop-color="#00ff70"/><stop offset="0.4203" stop-color="#00ff48"/><stop offset="0.5362" stop-color="#02ff39"/><stop offset="0.6667" stop-color="#66ff24"/><stop offset="0.7778" stop-color="#cdff0f"/><stop offset="0.8261" stop-color="#fffe04"/><stop offset="0.872" stop-color="#ffd200"/><stop offset="0.9444" stop-color="#ffa100"/><stop offset="1" stop-color="#ff8600"/></linearGradient>
<linearGradient id="g107" gradientUnits="userSpaceOnUse" x1="1159" x2="1576"><stop offset="0" stop-color="#00ff72"/><stop offset="0.4173" stop-color="#00ff4a"/><stop offset="0.53" stop-color="#02ff3b"/><stop offset="0.6571" stop-color="#64ff27"/><stop offset="0.7674" stop-color="#cbff12"/><stop offset="0.8153" stop-color="#ffff07"/><stop offset="0.8609" stop-color="#ffd300"/><stop offset="0.9329" stop-color="#ffa100"/><stop offset="1" stop-color="#ff8000"/></linearGradient>
<linearGradient id="g108" gradientUnits="userSpaceOnUse" x1="1159" x2="1579"><stop offset="0" stop-color="#00ff73"/><stop offset="0.4143" stop-color="#00ff4c"/><stop offset="0.5238" stop-color="#01ff3d"/><stop offset="0.65" stop-color="#64ff29"/><stop offset="0.7595" stop-color="#cdff14"/><stop offset="0.8071" stop-color="#fffd0a"/><stop offset="0.8595" stop-color="#ffcb00"/><stop offset="0.9333" stop-color="#ff9a00"/><stop offset="1" stop-color="#ff7b00"/></linearGradient>
<linearGradient id="g109" gradientUnits="userSpaceOnUse" x1="1159" x2="1581"><stop offset="0" stop-color="#00ff75"/><stop offset="0.4123" stop-color="#00ff4e"/><stop offset="0.5213" stop-color="#03ff3f"/><stop offset="0.6445" stop-color="#64ff2c"/><stop offset="0.7512" stop-color="#cbff17"/><stop offset="0.7986" stop-color="#fffe0d"/><stop offset="0.8531" stop-color="#ffca00"/><stop offset="0.9265" stop-color="#f90"/><stop offset="1" stop-color="#f70"/></linearGradient>
<linearGradient id="g110" gradientUnits="userSpaceOnUse" x1="1160" x2="1584"><stop offset="0" stop-color="#0f7"/><stop offset="0.408" stop-color="#00ff50"/><stop offset="0.5142" stop-color="#02ff42"/><stop offset="0.6368" stop-color="#65ff2e"/><stop offset="0.7429" stop-color="#ccff1a"/><stop offset="0.7901" stop-color="#fffd0f"/><stop offset="0.8443" stop-color="#ffc802"/><stop offset="0.9175" stop-color="#ff9800"/><stop offset="1" stop-color="#ff7300"/></linearGradient>
<linearGradient id="g111" gradientUnits="userSpaceOnUse" x1="1160" x2="1587"><stop offset="0" stop-color="#00ff79"/><stop offset="0.4052" stop-color="#00ff52"/><stop offset="0.5082" stop-color="#02ff44"/><stop offset="0.63" stop-color="#65ff31"/><stop offset="0.7354" stop-color="#cdff1c"/><stop offset="0.7799" stop-color="#fffe12"/><stop offset="0.8337" stop-color="#ffc904"/><stop offset="0.8852" stop-color="#ffa400"/><stop offset="0.9766" stop-color="#f70"/><stop offset="1" stop-color="#ff6e00"/></linearGradient>
<linearGradient id="g112" gradientUnits="userSpaceOnUse" x1="1160" x2="1589"><stop offset="0" stop-color="#00ff7b"/><stop offset="0.4033" stop-color="#00ff54"/><stop offset="0.5035" stop-color="#01ff47"/><stop offset="0.6224" stop-color="#63ff34"/><stop offset="0.7249" stop-color="#caff20"/><stop offset="0.7716" stop-color="#ffff16"/><stop offset="0.8252" stop-color="#ffc907"/><stop offset="0.8741" stop-color="#ffa600"/><stop offset="0.9627" stop-color="#ff7900"/><stop offset="1" stop-color="#ff6a00"/></linearGradient>
<linearGradient id="g113" gradientUnits="userSpaceOnUse" x1="1161" x2="1592"><stop offset="0" stop-color="#00ff7c"/><stop offset="0.4014" stop-color="#00ff56"/><stop offset="0.4988" stop-color="#02ff49"/><stop offset="0.6172" stop-color="#65ff36"/><stop offset="0.7193" stop-color="#cdff22"/><stop offset="0.7633" stop-color="#fffd18"/><stop offset="0.8167" stop-color="#ffc809"/><stop offset="0.8747" stop-color="#ff9f00"/><stop offset="0.9675" stop-color="#ff7200"/><stop offset="1" stop-color="#f60"/></linearGradient>
<linearGradient id="g114" gradientUnits="userSpaceOnUse" x1="1161" x2="1594"><stop offset="0" stop-color="#00ff7e"/><stop offset="0.3995" stop-color="#00ff58"/><stop offset="0.4942" stop-color="#02ff4b"/><stop offset="0.6097" stop-color="#64ff39"/><stop offset="0.7113" stop-color="#ccff26"/><stop offset="0.7552" stop-color="#fffe1c"/><stop offset="0.8083" stop-color="#ffc80c"/><stop offset="0.8776" stop-color="#ff9800"/><stop offset="0.9746" stop-color="#ff6c00"/><stop offset="1" stop-color="#ff6300"/></linearGradient>
<linearGradient id="g115" gradientUnits="userSpaceOnUse" x1="1161" x2="1597"><stop offset="0" stop-color="#00ff80"/><stop offset="0.3968" stop-color="#00ff5a"/><stop offset="0.4885" stop-color="#02ff4e"/><stop offset="0.6032" stop-color="#64ff3c"/><stop offset="0.7018" stop-color="#caff29"/><stop offset="0.7477" stop-color="#fffd1f"/><stop offset="0.8005" stop-color="#ffc70e"/><stop offset="0.8693" stop-color="#ff9700"/><stop offset="0.9656" stop-color="#ff6a00"/><stop offset="1" stop-color="#ff5f00"/></linearGradient>
<linearGradient id="g116" gradientUnits="userSpaceOnUse" x1="1162" x2="1600"><stop offset="0" stop-color="#00ff82"/><stop offset="0.3927" stop-color="#00ff5d"/><stop offset="0.4817" stop-color="#01ff51"/><stop offset="0.5959" stop-color="#64ff3f"/><stop offset="0.6941" stop-color="#ccff2c"/><stop offset="0.7374" stop-color="#fffe22"/><stop offset="0.7877" stop-color="#ffc911"/><stop offset="0.8562" stop-color="#ff9802"/><stop offset="0.9498" stop-color="#ff6c00"/><stop offset="1" stop-color="#ff5b00"/></linearGradient>
<linearGradient id="g117" gradientUnits="userSpaceOnUse" x1="1162" x2="1602"><stop offset="0" stop-color="#00ff84"/><stop offset="0.3909" stop-color="#00ff5f"/><stop offset="0.4795" stop-color="#02ff53"/><stop offset="0.5909" stop-color="#64ff41"/><stop offset="0.6886" stop-color="#cdff2f"/><stop offset="0.7295" stop-color="#ffff26"/><stop offset="0.7795" stop-color="#ffca14"/><stop offset="0.8455" stop-color="#ff9904"/><stop offset="0.9023" stop-color="#ff7c00"/><stop offset="1" stop-color="#ff5800"/></linearGradient>
<linearGradient id="g118" gradientUnits="userSpaceOnUse" x1="1162" x2="1605"><stop offset="0" stop-color="#00ff86"/><stop offset="0.3883" stop-color="#00ff61"/><stop offset="0.474" stop-color="#02ff56"/><stop offset="0.5847" stop-color="#65ff44"/><stop offset="0.6795" stop-color="#cbff32"/><stop offset="0.7223" stop-color="#fffd28"/><stop offset="0.772" stop-color="#ffc816"/><stop offset="0.8375" stop-color="#ff9806"/><stop offset="0.8939" stop-color="#ff7a00"/><stop offset="1" stop-color="#ff5400"/></linearGradient>
<linearGradient id="g119" gradientUnits="userSpaceOnUse" x1="1163" x2="1608"><stop offset="0" stop-color="#0f8"/><stop offset="0.3865" stop-color="#00ff63"/><stop offset="0.4674" stop-color="#01ff58"/><stop offset="0.5775" stop-color="#65ff47"/><stop offset="0.6719" stop-color="#ccff35"/><stop offset="0.7124" stop-color="#ffff2c"/><stop offset="0.7618" stop-color="#ffc919"/><stop offset="0.827" stop-color="#ff9809"/><stop offset="0.8899" stop-color="#f70"/><stop offset="1" stop-color="#ff5000"/></linearGradient>
<linearGradient id="g120" gradientUnits="userSpaceOnUse" x1="1163" x2="1610"><stop offset="0" stop-color="#00ff8a"/><stop offset="0.3848" stop-color="#0f6"/><stop offset="0.4631" stop-color="#01ff5b"/><stop offset="0.5705" stop-color="#63ff4b"/><stop offset="0.6644" stop-color="#cbff39"/><stop offset="0.7069" stop-color="#fffd2f"/><stop offset="0.7562" stop-color="#ffc71c"/><stop offset="0.821" stop-color="#ff970a"/><stop offset="0.8926" stop-color="#ff7200"/><stop offset="1" stop-color="#ff4e00"/></linearGradient>
<linearGradient id="g121" gradientUnits="userSpaceOnUse" x1="1163" x2="1613"><stop offset="0" stop-color="#00ff8c"/><stop offset="0.3822" stop-color="#00ff68"/><stop offset="0.46" stop-color="#02ff5e"/><stop offset="0.5667" stop-color="#65ff4d"/><stop offset="0.6578" stop-color="#ccff3c"/><stop offset="0.6978" stop-color="#fffe33"/><stop offset="0.7444" stop-color="#ffca20"/><stop offset="0.8067" stop-color="#ff990e"/><stop offset="0.8911" stop-color="#ff6e00"/><stop offset="1" stop-color="#ff4a00"/></linearGradient>
<linearGradient id="g122" gradientUnits="userSpaceOnUse" x1="1164" x2="1616"><stop offset="0" stop-color="#00ff8e"/><stop offset="0.3805" stop-color="#00ff6a"/><stop offset="0.4535" stop-color="#02ff61"/><stop offset="0.5575" stop-color="#63ff51"/><stop offset="0.6482" stop-color="#cbff3f"/><stop offset="0.6881" stop-color="#ffff37"/><stop offset="0.7367" stop-color="#ffc822"/><stop offset="0.7987" stop-color="#ff9810"/><stop offset="0.885" stop-color="#ff6c00"/><stop offset="1" stop-color="#ff4700"/></linearGradient>
<linearGradient id="g123" gradientUnits="userSpaceOnUse" x1="1164" x2="1618"><stop offset="0" stop-color="#00ff90"/><stop offset="0.3789" stop-color="#00ff6d"/><stop offset="0.4493" stop-color="#01ff64"/><stop offset="0.5529" stop-color="#64ff54"/><stop offset="0.6432" stop-color="#ccff43"/><stop offset="0.6828" stop-color="#fffd3a"/><stop offset="0.7291" stop-color="#ffc825"/><stop offset="0.7907" stop-color="#ff9812"/><stop offset="0.8767" stop-color="#ff6c01"/><stop offset="1" stop-color="#f40"/></linearGradient>
<linearGradient id="g124" gradientUnits="userSpaceOnUse" x1="1164" x2="1621"><stop offset="0" stop-color="#00ff92"/><stop offset="0.3786" stop-color="#00ff6f"/><stop offset="0.4442" stop-color="#01ff67"/><stop offset="0.547" stop-color="#64ff57"/><stop offset="0.6346" stop-color="#caff46"/><stop offset="0.674" stop-color="#ffff3e"/><stop offset="0.7199" stop-color="#ffc928"/><stop offset="0.7812" stop-color="#ff9815"/><stop offset="0.8643" stop-color="#ff6c03"/><stop offset="0.9672" stop-color="#ff4a00"/><stop offset="1" stop-color="#ff4100"/></linearGradient>
<linearGradient id="g125" gradientUnits="userSpaceOnUse" x1="1165" x2="1623"><stop offset="0" stop-color="#00ff94"/><stop offset="0.3755" stop-color="#00ff72"/><stop offset="0.441" stop-color="#02ff69"/><stop offset="0.5415" stop-color="#64ff5a"/><stop offset="0.6288" stop-color="#ccff4a"/><stop offset="0.6681" stop-color="#fffd41"/><stop offset="0.714" stop-color="#ffc72b"/><stop offset="0.7751" stop-color="#ff9717"/><stop offset="0.8603" stop-color="#ff6a04"/><stop offset="0.9236" stop-color="#ff5300"/><stop offset="1" stop-color="#ff3f00"/></linearGradient>
<linearGradient id="g126" gradientUnits="userSpaceOnUse" x1="1165" x2="1626"><stop offset="0" stop-color="#00ff97"/><stop offset="0.3753" stop-color="#00ff74"/><stop offset="0.436" stop-color="#02ff6c"/><stop offset="0.5358" stop-color="#65ff5d"/><stop offset="0.6226" stop-color="#cdff4d"/><stop offset="0.6594" stop-color="#fffe45"/><stop offset="0.705" stop-color="#ffc82e"/><stop offset="0.7657" stop-color="#ff9719"/><stop offset="0.8482" stop-color="#ff6b07"/><stop offset="0.9111" stop-color="#ff5400"/><stop offset="1" stop-color="#ff3c00"/></linearGradient>
<linearGradient id="g127" gradientUnits="userSpaceOnUse" x1="1166" x2="1629"><stop offset="0" stop-color="#0f9"/><stop offset="0.3737" stop-color="#0f7"/><stop offset="0.4298" stop-color="#01ff6f"/><stop offset="0.5292" stop-color="#65ff60"/><stop offset="0.6134" stop-color="#cbff51"/><stop offset="0.6501" stop-color="#ffff49"/><stop offset="0.6955" stop-color="#ffc832"/><stop offset="0.7538" stop-color="#ff981c"/><stop offset="0.8337" stop-color="#ff6c09"/><stop offset="0.9093" stop-color="#ff5100"/><stop offset="1" stop-color="#ff3900"/></linearGradient>
<linearGradient id="g128" gradientUnits="userSpaceOnUse" x1="1166" x2="1631"><stop offset="0" stop-color="#00ff9b"/><stop offset="0.372" stop-color="#00ff79"/><stop offset="0.428" stop-color="#03ff72"/><stop offset="0.5247" stop-color="#65ff64"/><stop offset="0.6086" stop-color="#cdff55"/><stop offset="0.6452" stop-color="#fffe4d"/><stop offset="0.6882" stop-color="#ffc935"/><stop offset="0.7462" stop-color="#ff981f"/><stop offset="0.8258" stop-color="#ff6c0b"/><stop offset="0.9097" stop-color="#ff4e00"/><stop offset="1" stop-color="#ff3700"/></linearGradient>
<linearGradient id="g129" gradientUnits="userSpaceOnUse" x1="1166" x2="1634"><stop offset="0" stop-color="#00ff9d"/><stop offset="0.3718" stop-color="#00ff7c"/><stop offset="0.4231" stop-color="#02ff75"/><stop offset="0.5192" stop-color="#65ff67"/><stop offset="0.6026" stop-color="#ceff58"/><stop offset="0.6368" stop-color="#ffff51"/><stop offset="0.6795" stop-color="#ffc939"/><stop offset="0.7372" stop-color="#ff9822"/><stop offset="0.8162" stop-color="#ff6c0d"/><stop offset="0.9103" stop-color="#ff4a00"/><stop offset="1" stop-color="#ff3400"/></linearGradient>
<linearGradient id="g130" gradientUnits="userSpaceOnUse" x1="1167" x2="1637"><stop offset="0" stop-color="#00ffa0"/><stop offset="0.3702" stop-color="#00ff7f"/><stop offset="0.417" stop-color="#02ff79"/><stop offset="0.5106" stop-color="#63ff6b"/><stop offset="0.5915" stop-color="#c9ff5d"/><stop offset="0.6298" stop-color="#fffd54"/><stop offset="0.6723" stop-color="#ffc83b"/><stop offset="0.7298" stop-color="#ff9724"/><stop offset="0.8085" stop-color="#ff6b0f"/><stop offset="0.9106" stop-color="#ff4600"/><stop offset="1" stop-color="#ff3100"/></linearGradient>
<linearGradient id="g131" gradientUnits="userSpaceOnUse" x1="1167" x2="1639"><stop offset="0" stop-color="#00ffa2"/><stop offset="0.3686" stop-color="#00ff82"/><stop offset="0.4131" stop-color="#01ff7c"/><stop offset="0.5064" stop-color="#64ff6f"/><stop offset="0.5869" stop-color="#cbff61"/><stop offset="0.6229" stop-color="#fffe59"/><stop offset="0.6653" stop-color="#ffc83f"/><stop offset="0.7203" stop-color="#ff9827"/><stop offset="0.7966" stop-color="#ff6c12"/><stop offset="0.9068" stop-color="#ff4500"/><stop offset="1" stop-color="#ff2f00"/></linearGradient>
<linearGradient id="g132" gradientUnits="userSpaceOnUse" x1="1167" x2="1642"><stop offset="0" stop-color="#00ffa4"/><stop offset="0.3684" stop-color="#00ff84"/><stop offset="0.4105" stop-color="#03ff7f"/><stop offset="0.5032" stop-color="#66ff72"/><stop offset="0.5832" stop-color="#cfff64"/><stop offset="0.6168" stop-color="#fffc5c"/><stop offset="0.6589" stop-color="#ffc641"/><stop offset="0.7137" stop-color="#ff9729"/><stop offset="0.7895" stop-color="#ff6b14"/><stop offset="0.8989" stop-color="#f40"/><stop offset="1" stop-color="#ff2c00"/></linearGradient>
<linearGradient id="g133" gradientUnits="userSpaceOnUse" x1="1168" x2="1645"><stop offset="0" stop-color="#00ffa7"/><stop offset="0.3669" stop-color="#00ff87"/><stop offset="0.4046" stop-color="#02ff83"/><stop offset="0.4948" stop-color="#64ff76"/><stop offset="0.5723" stop-color="#caff69"/><stop offset="0.608" stop-color="#fffe61"/><stop offset="0.6478" stop-color="#ffc946"/><stop offset="0.7023" stop-color="#ff982d"/><stop offset="0.7778" stop-color="#ff6c16"/><stop offset="0.8847" stop-color="#ff4502"/><stop offset="1" stop-color="#ff2a00"/></linearGradient>
<linearGradient id="g134" gradientUnits="userSpaceOnUse" x1="1168" x2="1647"><stop offset="0" stop-color="#00ffa9"/><stop offset="0.3674" stop-color="#00ff8a"/><stop offset="0.4008" stop-color="#02ff86"/><stop offset="0.4906" stop-color="#64ff7a"/><stop offset="0.5678" stop-color="#ccff6d"/><stop offset="0.6013" stop-color="#ff6"/><stop offset="0.6409" stop-color="#ffca4a"/><stop offset="0.6931" stop-color="#ff9a31"/><stop offset="0.7662" stop-color="#ff6d1a"/><stop offset="0.8706" stop-color="#ff4605"/><stop offset="0.9395" stop-color="#ff3400"/><stop offset="1" stop-color="#ff2800"/></linearGradient>
<linearGradient id="g135" gradientUnits="userSpaceOnUse" x1="1169" x2="1650"><stop offset="0" stop-color="#00ffac"/><stop offset="0.368" stop-color="#00ff8d"/><stop offset="0.395" stop-color="#01ff8a"/><stop offset="0.4823" stop-color="#62ff7e"/><stop offset="0.5593" stop-color="#caff71"/><stop offset="0.5946" stop-color="#fffd6a"/><stop offset="0.6341" stop-color="#ffc84d"/><stop offset="0.6861" stop-color="#ff9833"/><stop offset="0.7588" stop-color="#ff6c1b"/><stop offset="0.8628" stop-color="#ff4506"/><stop offset="0.9335" stop-color="#f30"/><stop offset="1" stop-color="#ff2600"/></linearGradient>
<linearGradient id="g136" gradientUnits="userSpaceOnUse" x1="1169" x2="1652"><stop offset="0" stop-color="#00ffae"/><stop offset="0.3685" stop-color="#00ff90"/><stop offset="0.3934" stop-color="#03ff8d"/><stop offset="0.4803" stop-color="#65ff81"/><stop offset="0.5549" stop-color="#cbff75"/><stop offset="0.588" stop-color="#fffe6f"/><stop offset="0.6273" stop-color="#ffc951"/><stop offset="0.6791" stop-color="#ff9836"/><stop offset="0.7516" stop-color="#ff6c1e"/><stop offset="0.8551" stop-color="#ff4408"/><stop offset="0.9317" stop-color="#ff3100"/><stop offset="1" stop-color="#ff2400"/></linearGradient>
<linearGradient id="g137" gradientUnits="userSpaceOnUse" x1="1170" x2="1655"><stop offset="0" stop-color="#00ffb1"/><stop offset="0.367" stop-color="#00ff93"/><stop offset="0.3876" stop-color="#02ff91"/><stop offset="0.4742" stop-color="#65ff85"/><stop offset="0.5485" stop-color="#cdff79"/><stop offset="0.5814" stop-color="#fffc72"/><stop offset="0.6206" stop-color="#ffc754"/><stop offset="0.6722" stop-color="#ff9738"/><stop offset="0.7443" stop-color="#ff6a1f"/><stop offset="0.8474" stop-color="#ff4309"/><stop offset="0.932" stop-color="#ff2e00"/><stop offset="1" stop-color="#ff2100"/></linearGradient>
<linearGradient id="g138" gradientUnits="userSpaceOnUse" x1="1170" x2="1658"><stop offset="0" stop-color="#00ffb4"/><stop offset="0.3668" stop-color="#00ff96"/><stop offset="0.3832" stop-color="#01ff94"/><stop offset="0.4672" stop-color="#63ff8a"/><stop offset="0.541" stop-color="#cbff7e"/><stop offset="0.5738" stop-color="#fffe78"/><stop offset="0.6107" stop-color="#ffca59"/><stop offset="0.6619" stop-color="#ff983c"/><stop offset="0.7316" stop-color="#ff6c23"/><stop offset="0.832" stop-color="#ff450c"/><stop offset="0.9303" stop-color="#ff2c00"/><stop offset="1" stop-color="#ff1f00"/></linearGradient>
<linearGradient id="g139" gradientUnits="userSpaceOnUse" x1="1170" x2="1660"><stop offset="0" stop-color="#00ffb6"/><stop offset="0.3694" stop-color="#0f9"/><stop offset="0.3816" stop-color="#03ff98"/><stop offset="0.4653" stop-color="#66ff8d"/><stop offset="0.5367" stop-color="#ccff82"/><stop offset="0.5673" stop-color="#ffff7d"/><stop offset="0.6061" stop-color="#ffc85c"/><stop offset="0.6571" stop-color="#ff973f"/><stop offset="0.7265" stop-color="#ff6b25"/><stop offset="0.8265" stop-color="#ff440d"/><stop offset="0.9327" stop-color="#ff2900"/><stop offset="1" stop-color="#ff1d00"/></linearGradient>
<linearGradient id="g140" gradientUnits="userSpaceOnUse" x1="1171" x2="1663"><stop offset="0" stop-color="#00ffb9"/><stop offset="0.3699" stop-color="#00ff9c"/><stop offset="0.3801" stop-color="#07ff9b"/><stop offset="0.4614" stop-color="#69ff91"/><stop offset="0.5325" stop-color="#d1ff87"/><stop offset="0.561" stop-color="#fffd81"/><stop offset="0.5976" stop-color="#ffc961"/><stop offset="0.6463" stop-color="#ff9843"/><stop offset="0.7134" stop-color="#ff6d28"/><stop offset="0.811" stop-color="#ff4510"/><stop offset="0.9309" stop-color="#ff2700"/><stop offset="1" stop-color="#ff1b00"/></linearGradient>
<linearGradient id="g141" gradientUnits="userSpaceOnUse" x1="1171" x2="1666"><stop offset="0" stop-color="#00ffbc"/><stop offset="0.3697" stop-color="#00ffa0"/><stop offset="0.4485" stop-color="#5fff97"/><stop offset="0.5192" stop-color="#c6ff8c"/><stop offset="0.5535" stop-color="#ffff87"/><stop offset="0.5899" stop-color="#ffc965"/><stop offset="0.6384" stop-color="#ff9846"/><stop offset="0.7051" stop-color="#ff6c2b"/><stop offset="0.8" stop-color="#ff4512"/><stop offset="0.9313" stop-color="#ff2500"/><stop offset="1" stop-color="#ff1900"/></linearGradient>
<linearGradient id="g142" gradientUnits="userSpaceOnUse" x1="1172" x2="1668"><stop offset="0" stop-color="#00ffbf"/><stop offset="0.3669" stop-color="#01ffa4"/><stop offset="0.4476" stop-color="#64ff9a"/><stop offset="0.5161" stop-color="#caff91"/><stop offset="0.5484" stop-color="#fffc8a"/><stop offset="0.5847" stop-color="#ffc768"/><stop offset="0.6331" stop-color="#ff9749"/><stop offset="0.6996" stop-color="#ff6b2d"/><stop offset="0.7944" stop-color="#ff4414"/><stop offset="0.9315" stop-color="#ff2300"/><stop offset="1" stop-color="#ff1800"/></linearGradient>
<linearGradient id="g143" gradientUnits="userSpaceOnUse" x1="1172" x2="1671"><stop offset="0" stop-color="#00ffc1"/><stop offset="0.3627" stop-color="#01ffa8"/><stop offset="0.4409" stop-color="#62ff9f"/><stop offset="0.509" stop-color="#c8ff96"/><stop offset="0.5411" stop-color="#fffe90"/><stop offset="0.5772" stop-color="#ffc86d"/><stop offset="0.6253" stop-color="#ff974c"/><stop offset="0.6914" stop-color="#ff6b2f"/><stop offset="0.7856" stop-color="#ff4416"/><stop offset="0.9279" stop-color="#ff2100"/><stop offset="1" stop-color="#ff1600"/></linearGradient>
<linearGradient id="g144" gradientUnits="userSpaceOnUse" x1="1173" x2="1674"><stop offset="0" stop-color="#00ffc4"/><stop offset="0.3593" stop-color="#02ffac"/><stop offset="0.4371" stop-color="#65ffa3"/><stop offset="0.505" stop-color="#cdff9a"/><stop offset="0.5329" stop-color="#ffff96"/><stop offset="0.5689" stop-color="#ffc871"/><stop offset="0.6148" stop-color="#ff9851"/><stop offset="0.6786" stop-color="#ff6c33"/><stop offset="0.7705" stop-color="#ff4519"/><stop offset="0.9082" stop-color="#ff2301"/><stop offset="1" stop-color="#ff1400"/></linearGradient>
<linearGradient id="g145" gradientUnits="userSpaceOnUse" x1="1173" x2="1676"><stop offset="0" stop-color="#00ffc7"/><stop offset="0.3559" stop-color="#02ffb0"/><stop offset="0.4334" stop-color="#65ffa8"/><stop offset="0.499" stop-color="#cbffa0"/><stop offset="0.5288" stop-color="#fffd9a"/><stop offset="0.5626" stop-color="#ffc976"/><stop offset="0.6083" stop-color="#ff9855"/><stop offset="0.672" stop-color="#ff6c36"/><stop offset="0.7634" stop-color="#ff441b"/><stop offset="0.9006" stop-color="#ff2203"/><stop offset="1" stop-color="#ff1200"/></linearGradient>
<linearGradient id="g146" gradientUnits="userSpaceOnUse" x1="1174" x2="1679"><stop offset="0" stop-color="#00ffca"/><stop offset="0.3505" stop-color="#01ffb4"/><stop offset="0.4257" stop-color="#63ffad"/><stop offset="0.4911" stop-color="#caffa5"/><stop offset="0.5208" stop-color="#ffffa1"/><stop offset="0.5545" stop-color="#ffca7b"/><stop offset="0.6" stop-color="#ff9858"/><stop offset="0.6614" stop-color="#ff6d39"/><stop offset="0.7505" stop-color="#ff451e"/><stop offset="0.8832" stop-color="#ff2305"/><stop offset="0.9624" stop-color="#ff1600"/><stop offset="1" stop-color="#ff1000"/></linearGradient>
<linearGradient id="g147" gradientUnits="userSpaceOnUse" x1="1174" x2="1681"><stop offset="0" stop-color="#00ffcd"/><stop offset="0.3471" stop-color="#01ffb9"/><stop offset="0.4221" stop-color="#63ffb2"/><stop offset="0.4872" stop-color="#cbffaa"/><stop offset="0.5168" stop-color="#fffda5"/><stop offset="0.5503" stop-color="#ffc87e"/><stop offset="0.5957" stop-color="#ff975b"/><stop offset="0.6568" stop-color="#ff6b3b"/><stop offset="0.7456" stop-color="#ff441f"/><stop offset="0.8797" stop-color="#ff2206"/><stop offset="0.9606" stop-color="#ff1400"/><stop offset="1" stop-color="#ff0f00"/></linearGradient>
<linearGradient id="g148" gradientUnits="userSpaceOnUse" x1="1174" x2="1684"><stop offset="0" stop-color="#00ffd1"/><stop offset="0.3451" stop-color="#02ffbd"/><stop offset="0.4176" stop-color="#63ffb6"/><stop offset="0.4804" stop-color="#c9ffb0"/><stop offset="0.5098" stop-color="#fffeab"/><stop offset="0.5431" stop-color="#ffc883"/><stop offset="0.5863" stop-color="#ff9860"/><stop offset="0.6471" stop-color="#ff6c3f"/><stop offset="0.7333" stop-color="#ff4522"/><stop offset="0.8627" stop-color="#ff2309"/><stop offset="0.9529" stop-color="#ff1300"/><stop offset="1" stop-color="#ff0d00"/></linearGradient>
<linearGradient id="g149" gradientUnits="userSpaceOnUse" x1="1175" x2="1687"><stop offset="0" stop-color="#00ffd4"/><stop offset="0.3398" stop-color="#02ffc2"/><stop offset="0.4121" stop-color="#64ffbb"/><stop offset="0.4746" stop-color="#cbffb5"/><stop offset="0.502" stop-color="#feffb2"/><stop offset="0.5371" stop-color="#ffc687"/><stop offset="0.5801" stop-color="#ff9763"/><stop offset="0.6406" stop-color="#ff6b41"/><stop offset="0.7266" stop-color="#ff4424"/><stop offset="0.8555" stop-color="#ff220a"/><stop offset="0.9531" stop-color="#f10"/><stop offset="1" stop-color="#ff0b00"/></linearGradient>
<linearGradient id="g150" gradientUnits="userSpaceOnUse" x1="1175" x2="1689"><stop offset="0" stop-color="#00ffd7"/><stop offset="0.3366" stop-color="#01ffc6"/><stop offset="0.4086" stop-color="#64ffc1"/><stop offset="0.4708" stop-color="#cfb"/><stop offset="0.4981" stop-color="#fffdb6"/><stop offset="0.5292" stop-color="#ffc98e"/><stop offset="0.572" stop-color="#ff9868"/><stop offset="0.6304" stop-color="#ff6d46"/><stop offset="0.714" stop-color="#ff4527"/><stop offset="0.8405" stop-color="#ff230c"/><stop offset="0.9533" stop-color="#ff1000"/><stop offset="1" stop-color="#ff0a00"/></linearGradient>
<linearGradient id="g151" gradientUnits="userSpaceOnUse" x1="1176" x2="1692"><stop offset="0" stop-color="#00ffda"/><stop offset="0.3314" stop-color="#00ffcb"/><stop offset="0.4012" stop-color="#61ffc6"/><stop offset="0.4612" stop-color="#c7ffc1"/><stop offset="0.4903" stop-color="#ffffbe"/><stop offset="0.5213" stop-color="#ffca94"/><stop offset="0.562" stop-color="#ff9a6e"/><stop offset="0.6182" stop-color="#ff6f4b"/><stop offset="0.6996" stop-color="#ff472b"/><stop offset="0.8217" stop-color="#ff240f"/><stop offset="0.9535" stop-color="#ff0e00"/><stop offset="1" stop-color="#ff0800"/></linearGradient>
<linearGradient id="g152" gradientUnits="userSpaceOnUse" x1="1176" x2="1695"><stop offset="0" stop-color="#00ffde"/><stop offset="0.3295" stop-color="#02ffd0"/><stop offset="0.3988" stop-color="#65ffcb"/><stop offset="0.4586" stop-color="#ccffc6"/><stop offset="0.4855" stop-color="#fffdc2"/><stop offset="0.5164" stop-color="#ffc897"/><stop offset="0.5588" stop-color="#ff976f"/><stop offset="0.6166" stop-color="#ff6b4b"/><stop offset="0.6994" stop-color="#ff442b"/><stop offset="0.8247" stop-color="#ff210f"/><stop offset="0.9538" stop-color="#ff0c00"/><stop offset="1" stop-color="#ff0700"/></linearGradient>
<linearGradient id="g153" gradientUnits="userSpaceOnUse" x1="1177" x2="1697"><stop offset="0" stop-color="#00ffe1"/><stop offset="0.325" stop-color="#02ffd5"/><stop offset="0.3942" stop-color="#65ffd1"/><stop offset="0.4538" stop-color="#ceffcc"/><stop offset="0.4788" stop-color="#fffec9"/><stop offset="0.5096" stop-color="#ffc99d"/><stop offset="0.55" stop-color="#ff9975"/><stop offset="0.6058" stop-color="#ff6d50"/><stop offset="0.6865" stop-color="#ff452f"/><stop offset="0.8077" stop-color="#ff2312"/><stop offset="0.9538" stop-color="#ff0b00"/><stop offset="1" stop-color="#ff0500"/></linearGradient>
<linearGradient id="g154" gradientUnits="userSpaceOnUse" x1="1177" x2="1700"><stop offset="0" stop-color="#00ffe5"/><stop offset="0.3212" stop-color="#01ffda"/><stop offset="0.3881" stop-color="#62ffd6"/><stop offset="0.4455" stop-color="#c8ffd2"/><stop offset="0.4723" stop-color="#feffd0"/><stop offset="0.5048" stop-color="#ffc7a0"/><stop offset="0.5449" stop-color="#ff9777"/><stop offset="0.6004" stop-color="#ff6b52"/><stop offset="0.6807" stop-color="#ff4431"/><stop offset="0.8011" stop-color="#ff2213"/><stop offset="0.9541" stop-color="#ff0900"/><stop offset="1" stop-color="#ff0400"/></linearGradient>
<linearGradient id="g155" gradientUnits="userSpaceOnUse" x1="1178" x2="1703"><stop offset="0" stop-color="#00ffe8"/><stop offset="0.3162" stop-color="#00ffdf"/><stop offset="0.3829" stop-color="#63ffdc"/><stop offset="0.44" stop-color="#c9ffd9"/><stop offset="0.4667" stop-color="#fffdd6"/><stop offset="0.4971" stop-color="#ffc7a6"/><stop offset="0.5371" stop-color="#ff977c"/><stop offset="0.5924" stop-color="#ff6b55"/><stop offset="0.6705" stop-color="#f43"/><stop offset="0.7886" stop-color="#ff2216"/><stop offset="0.9505" stop-color="#ff0800"/><stop offset="1" stop-color="#ff0200"/></linearGradient>
<linearGradient id="g156" gradientUnits="userSpaceOnUse" x1="1178" x2="1705"><stop offset="0" stop-color="#00ffec"/><stop offset="0.315" stop-color="#02ffe4"/><stop offset="0.3795" stop-color="#63ffe2"/><stop offset="0.4364" stop-color="#cbffdf"/><stop offset="0.4611" stop-color="#ffffde"/><stop offset="0.4915" stop-color="#ffc8ac"/><stop offset="0.5313" stop-color="#ff9780"/><stop offset="0.5863" stop-color="#ff6a59"/><stop offset="0.6641" stop-color="#ff4436"/><stop offset="0.7818" stop-color="#ff2117"/><stop offset="0.9507" stop-color="#ff0600"/><stop offset="1" stop-color="#ff0100"/></linearGradient>
<linearGradient id="g157" gradientUnits="userSpaceOnUse" x1="1179" x2="1708"><stop offset="0" stop-color="#00fff0"/><stop offset="0.31" stop-color="#01ffea"/><stop offset="0.3743" stop-color="#64ffe8"/><stop offset="0.4291" stop-color="#c9ffe6"/><stop offset="0.4556" stop-color="#fffde2"/><stop offset="0.4839" stop-color="#ffc9b3"/><stop offset="0.5217" stop-color="#ff9987"/><stop offset="0.5747" stop-color="#ff6d5e"/><stop offset="0.6503" stop-color="#ff453a"/><stop offset="0.7637" stop-color="#ff231b"/><stop offset="0.9452" stop-color="#ff0500"/><stop offset="1" stop-color="#f00"/></linearGradient>
<linearGradient id="g158" gradientUnits="userSpaceOnUse" x1="1179" x2="1711"><stop offset="0" stop-color="#00fff3"/><stop offset="0.3064" stop-color="#01ffef"/><stop offset="0.3703" stop-color="#64ffee"/><stop offset="0.4248" stop-color="#cbffec"/><stop offset="0.4492" stop-color="#fffeeb"/><stop offset="0.4774" stop-color="#ffc9b9"/><stop offset="0.515" stop-color="#ff998b"/><stop offset="0.5677" stop-color="#ff6c62"/><stop offset="0.6429" stop-color="#ff453d"/><stop offset="0.7556" stop-color="#ff221c"/><stop offset="0.9361" stop-color="#ff0501"/><stop offset="1" stop-color="#f00"/></linearGradient>
<linearGradient id="g159" gradientUnits="userSpaceOnUse" x1="1180" x2="1713"><stop offset="0" stop-color="#00fff7"/><stop offset="0.3021" stop-color="#00fff5"/><stop offset="0.364" stop-color="#61fff4"/><stop offset="0.4184" stop-color="#c8fff3"/><stop offset="0.4428" stop-color="#fefff3"/><stop offset="0.4747" stop-color="#ffc4ba"/><stop offset="0.5122" stop-color="#ff958d"/><stop offset="0.5647" stop-color="#ff6963"/><stop offset="0.6398" stop-color="#ff433e"/><stop offset="0.7542" stop-color="#ff201d"/><stop offset="0.9381" stop-color="#ff0301"/><stop offset="1" stop-color="#f00"/></linearGradient>
<linearGradient id="g160" gradientUnits="userSpaceOnUse" x1="1180" x2="1716"><stop offset="0" stop-color="#00fffb"/><stop offset="0.3004" stop-color="#02fffa"/><stop offset="0.3619" stop-color="#65fffa"/><stop offset="0.4142" stop-color="#cafffa"/><stop offset="0.4384" stop-color="#fffef9"/><stop offset="0.4664" stop-color="#ffc8c4"/><stop offset="0.5037" stop-color="#ff9793"/><stop offset="0.5541" stop-color="#ff6b69"/><stop offset="0.6269" stop-color="#ff4442"/><stop offset="0.7369" stop-color="#ff2221"/><stop offset="0.9123" stop-color="#ff0404"/><stop offset="1" stop-color="#f00"/></linearGradient>
<linearGradient id="g161" gradientUnits="userSpaceOnUse" x1="1181" x2="1719"><stop offset="0" stop-color="#0ff"/><stop offset="0.2955" stop-color="#01feff"/><stop offset="0.3569" stop-color="#64fdff"/><stop offset="0.4089" stop-color="#cafdff"/><stop offset="0.4331" stop-color="#fffbfd"/><stop offset="0.461" stop-color="#ffc5c7"/><stop offset="0.4981" stop-color="#ff9596"/><stop offset="0.5483" stop-color="#ff6a6b"/><stop offset="0.6208" stop-color="#ff4344"/><stop offset="0.7305" stop-color="#ff2122"/><stop offset="0.9071" stop-color="#ff0304"/><stop offset="0.9981" stop-color="#f00"/><stop offset="1" stop-color="#f00"/></linearGradient>
<linearGradient id="g162" gradientUnits="userSpaceOnUse" x1="1181" x2="1721"><stop offset="0" stop-color="#00fbff"/><stop offset="0.2926" stop-color="#00f8ff"/><stop offset="0.3537" stop-color="#62f7ff"/><stop offset="0.4074" stop-color="#caf6ff"/><stop offset="0.4315" stop-color="#fff4fe"/><stop offset="0.4593" stop-color="#ffc0c8"/><stop offset="0.4963" stop-color="#ff9198"/><stop offset="0.5463" stop-color="#ff676c"/><stop offset="0.6185" stop-color="#ff4145"/><stop offset="0.7278" stop-color="#ff1f23"/><stop offset="0.9019" stop-color="#ff0305"/><stop offset="0.9907" stop-color="#f00"/><stop offset="1" stop-color="#f00"/></linearGradient>
<linearGradient id="g163" gradientUnits="userSpaceOnUse" x1="1182" x2="1724"><stop offset="0" stop-color="#00f7ff"/><stop offset="0.2897" stop-color="#02f2ff"/><stop offset="0.3506" stop-color="#63f1ff"/><stop offset="0.4041" stop-color="#caefff"/><stop offset="0.428" stop-color="#ffeefe"/><stop offset="0.4557" stop-color="#ffbbc9"/><stop offset="0.4926" stop-color="#ff8d99"/><stop offset="0.5424" stop-color="#ff646d"/><stop offset="0.6144" stop-color="#ff3f46"/><stop offset="0.7232" stop-color="#ff1e24"/><stop offset="0.8967" stop-color="#ff0206"/><stop offset="0.9889" stop-color="#f00"/><stop offset="1" stop-color="#f00"/></linearGradient>
<linearGradient id="g164" gradientUnits="userSpaceOnUse" x1="1182" x2="1726"><stop offset="0" stop-color="#00f3ff"/><stop offset="0.2868" stop-color="#02edff"/><stop offset="0.3493" stop-color="#65eaff"/><stop offset="0.4026" stop-color="#cbe8ff"/><stop offset="0.4265" stop-color="#ffe7ff"/><stop offset="0.454" stop-color="#ffb6ca"/><stop offset="0.4908" stop-color="#ff899a"/><stop offset="0.5423" stop-color="#ff606d"/><stop offset="0.6158" stop-color="#ff3b46"/><stop offset="0.7261" stop-color="#ff1b23"/><stop offset="0.9007" stop-color="#ff0006"/><stop offset="0.9908" stop-color="#f00"/><stop offset="1" stop-color="#f00"/></linearGradient>
<linearGradient id="g165" gradientUnits="userSpaceOnUse" x1="1183" x2="1729"><stop offset="0" stop-color="#00efff"/><stop offset="0.2821" stop-color="#01e7ff"/><stop offset="0.3443" stop-color="#62e4ff"/><stop offset="0.3993" stop-color="#cbe2ff"/><stop offset="0.4231" stop-color="#ffe0ff"/><stop offset="0.4524" stop-color="#ffaec8"/><stop offset="0.4908" stop-color="#ff8297"/><stop offset="0.544" stop-color="#ff596a"/><stop offset="0.619" stop-color="#ff3644"/><stop offset="0.7326" stop-color="#ff1721"/><stop offset="0.8956" stop-color="#ff0006"/><stop offset="0.989" stop-color="#f00"/><stop offset="1" stop-color="#f00"/></linearGradient>
<linearGradient id="g166" gradientUnits="userSpaceOnUse" x1="1184" x2="1732"><stop offset="0" stop-color="#00ebff"/><stop offset="0.2774" stop-color="#00e2ff"/><stop offset="0.3412" stop-color="#64dfff"/><stop offset="0.396" stop-color="#cbdbff"/><stop offset="0.4197" stop-color="#fed9ff"/><stop offset="0.4507" stop-color="#ffa7c6"/><stop offset="0.4891" stop-color="#ff7c96"/><stop offset="0.542" stop-color="#ff566a"/><stop offset="0.6186" stop-color="#ff3343"/><stop offset="0.7336" stop-color="#ff1521"/><stop offset="0.885" stop-color="#ff0008"/><stop offset="0.9872" stop-color="#f00"/><stop offset="1" stop-color="#f00"/></linearGradient>
<linearGradient id="g167" gradientUnits="userSpaceOnUse" x1="1184" x2="1734"><stop offset="0" stop-color="#00e7ff"/><stop offset="0.2764" stop-color="#02ddff"/><stop offset="0.34" stop-color="#65d9ff"/><stop offset="0.3945" stop-color="#cbd5ff"/><stop offset="0.42" stop-color="#ffd1fc"/><stop offset="0.4491" stop-color="#ffa2c7"/><stop offset="0.4873" stop-color="#ff7997"/><stop offset="0.54" stop-color="#ff536b"/><stop offset="0.6164" stop-color="#ff3144"/><stop offset="0.7309" stop-color="#ff1322"/><stop offset="0.8745" stop-color="#ff0009"/><stop offset="0.9855" stop-color="#f00"/><stop offset="1" stop-color="#f00"/></linearGradient>
<linearGradient id="g168" gradientUnits="userSpaceOnUse" x1="1185" x2="1737"><stop offset="0" stop-color="#00e3ff"/><stop offset="0.2717" stop-color="#01d7ff"/><stop offset="0.3351" stop-color="#63d3ff"/><stop offset="0.3913" stop-color="#cbcfff"/><stop offset="0.4167" stop-color="#ffcbfd"/><stop offset="0.4457" stop-color="#ff9ec8"/><stop offset="0.4837" stop-color="#ff7598"/><stop offset="0.5362" stop-color="#ff506c"/><stop offset="0.6123" stop-color="#ff2f45"/><stop offset="0.7264" stop-color="#ff1223"/><stop offset="0.8623" stop-color="#ff000b"/><stop offset="0.9837" stop-color="#f00"/><stop offset="1" stop-color="#f00"/></linearGradient>
<linearGradient id="g169" gradientUnits="userSpaceOnUse" x1="1185" x2="1740"><stop offset="0" stop-color="#00e0ff"/><stop offset="0.2685" stop-color="#01d3ff"/><stop offset="0.3333" stop-color="#64ceff"/><stop offset="0.3892" stop-color="#cbc9ff"/><stop offset="0.4144" stop-color="#ffc5fd"/><stop offset="0.4432" stop-color="#ff99c9"/><stop offset="0.4811" stop-color="#ff7299"/><stop offset="0.5333" stop-color="#ff4e6d"/><stop offset="0.609" stop-color="#ff2d46"/><stop offset="0.7225" stop-color="#ff1123"/><stop offset="0.8505" stop-color="#ff000d"/><stop offset="0.9838" stop-color="#f00"/><stop offset="1" stop-color="#f00"/></linearGradient>
<linearGradient id="g170" gradientUnits="userSpaceOnUse" x1="1186" x2="1742"><stop offset="0" stop-color="#00dcff"/><stop offset="0.2662" stop-color="#03ceff"/><stop offset="0.3309" stop-color="#65c8ff"/><stop offset="0.3867" stop-color="#cbc3ff"/><stop offset="0.4119" stop-color="#ffbffe"/><stop offset="0.4406" stop-color="#ff95c9"/><stop offset="0.4802" stop-color="#ff6d98"/><stop offset="0.5342" stop-color="#ff496c"/><stop offset="0.6115" stop-color="#ff2945"/><stop offset="0.7284" stop-color="#ff0e22"/><stop offset="0.8399" stop-color="#ff000e"/><stop offset="0.9856" stop-color="#f00"/><stop offset="1" stop-color="#f00"/></linearGradient>
<linearGradient id="g171" gradientUnits="userSpaceOnUse" x1="1186" x2="1745"><stop offset="0" stop-color="#00d8ff"/><stop offset="0.263" stop-color="#02c9ff"/><stop offset="0.3292" stop-color="#66c3ff"/><stop offset="0.3864" stop-color="#cfbdff"/><stop offset="0.4097" stop-color="#ffb9fe"/><stop offset="0.4383" stop-color="#ff90ca"/><stop offset="0.4776" stop-color="#ff6999"/><stop offset="0.5313" stop-color="#ff476d"/><stop offset="0.6082" stop-color="#ff2846"/><stop offset="0.7245" stop-color="#ff0c23"/><stop offset="0.8283" stop-color="#ff0010"/><stop offset="0.9839" stop-color="#f00"/><stop offset="1" stop-color="#f00"/></linearGradient>
<linearGradient id="g172" gradientUnits="userSpaceOnUse" x1="1187" x2="1748"><stop offset="0" stop-color="#00d5ff"/><stop offset="0.2585" stop-color="#01c4ff"/><stop offset="0.3244" stop-color="#64beff"/><stop offset="0.3815" stop-color="#cbb7ff"/><stop offset="0.4064" stop-color="#ffb4ff"/><stop offset="0.4349" stop-color="#ff8ccb"/><stop offset="0.4742" stop-color="#ff669a"/><stop offset="0.5276" stop-color="#ff446e"/><stop offset="0.6043" stop-color="#ff2646"/><stop offset="0.7184" stop-color="#ff0b24"/><stop offset="0.8146" stop-color="#ff0012"/><stop offset="0.9822" stop-color="#f00"/><stop offset="1" stop-color="#f00"/></linearGradient>
<linearGradient id="g173" gradientUnits="userSpaceOnUse" x1="1187" x2="1750"><stop offset="0" stop-color="#00d1ff"/><stop offset="0.2558" stop-color="#00c0ff"/><stop offset="0.3215" stop-color="#62b9ff"/><stop offset="0.3783" stop-color="#c8b2ff"/><stop offset="0.405" stop-color="#ffaeff"/><stop offset="0.4352" stop-color="#ff85c9"/><stop offset="0.4742" stop-color="#ff6199"/><stop offset="0.5293" stop-color="#ff406c"/><stop offset="0.6075" stop-color="#ff2245"/><stop offset="0.7247" stop-color="#ff0923"/><stop offset="0.8064" stop-color="#ff0014"/><stop offset="0.9822" stop-color="#f00"/><stop offset="1" stop-color="#f00"/></linearGradient>
<linearGradient id="g174" gradientUnits="userSpaceOnUse" x1="1188" x2="1753"><stop offset="0" stop-color="#00cdff"/><stop offset="0.2531" stop-color="#02bbff"/><stop offset="0.3204" stop-color="#66b4ff"/><stop offset="0.3788" stop-color="#cfacff"/><stop offset="0.4018" stop-color="#fea8ff"/><stop offset="0.4336" stop-color="#ff7fc7"/><stop offset="0.4743" stop-color="#ff5b96"/><stop offset="0.5292" stop-color="#ff3c6b"/><stop offset="0.6088" stop-color="#ff1f44"/><stop offset="0.7292" stop-color="#ff0622"/><stop offset="0.8" stop-color="#ff0015"/><stop offset="0.9823" stop-color="#f00"/><stop offset="1" stop-color="#f00"/></linearGradient>
<linearGradient id="g175" gradientUnits="userSpaceOnUse" x1="1189" x2="1755"><stop offset="0" stop-color="#00caff"/><stop offset="0.2491" stop-color="#02b7ff"/><stop offset="0.3163" stop-color="#64afff"/><stop offset="0.3746" stop-color="#cba7ff"/><stop offset="0.4011" stop-color="#ffa1fd"/><stop offset="0.4311" stop-color="#ff7bc8"/><stop offset="0.4717" stop-color="#ff5897"/><stop offset="0.5283" stop-color="#ff396b"/><stop offset="0.6078" stop-color="#ff1d44"/><stop offset="0.7279" stop-color="#ff0422"/><stop offset="0.8004" stop-color="#ff0015"/><stop offset="0.9841" stop-color="#f00"/><stop offset="1" stop-color="#f00"/></linearGradient>
<linearGradient id="g176" gradientUnits="userSpaceOnUse" x1="1189" x2="1758"><stop offset="0" stop-color="#00c6ff"/><stop offset="0.246" stop-color="#01b2ff"/><stop offset="0.3146" stop-color="#65aaff"/><stop offset="0.3726" stop-color="#cba1ff"/><stop offset="0.3989" stop-color="#ff9cfd"/><stop offset="0.4288" stop-color="#ff77c9"/><stop offset="0.4692" stop-color="#ff5598"/><stop offset="0.5255" stop-color="#ff366c"/><stop offset="0.6063" stop-color="#ff1b44"/><stop offset="0.7276" stop-color="#ff0322"/><stop offset="0.9227" stop-color="#ff0005"/><stop offset="1" stop-color="#f00"/></linearGradient>
<linearGradient id="g177" gradientUnits="userSpaceOnUse" x1="1190" x2="1761"><stop offset="0" stop-color="#00c3ff"/><stop offset="0.2417" stop-color="#00aeff"/><stop offset="0.31" stop-color="#63a5ff"/><stop offset="0.3695" stop-color="#cb9cff"/><stop offset="0.3958" stop-color="#ff97fe"/><stop offset="0.4256" stop-color="#ff73c9"/><stop offset="0.4658" stop-color="#ff5299"/><stop offset="0.5219" stop-color="#ff346d"/><stop offset="0.6025" stop-color="#ff1945"/><stop offset="0.7233" stop-color="#ff0123"/><stop offset="0.9159" stop-color="#ff0005"/><stop offset="1" stop-color="#f00"/></linearGradient>
<linearGradient id="g178" gradientUnits="userSpaceOnUse" x1="1190" x2="1763"><stop offset="0" stop-color="#00c0ff"/><stop offset="0.2408" stop-color="#02aaff"/><stop offset="0.3089" stop-color="#64a1ff"/><stop offset="0.3682" stop-color="#cc97ff"/><stop offset="0.3944" stop-color="#ff92fe"/><stop offset="0.4258" stop-color="#ff6ec8"/><stop offset="0.4677" stop-color="#ff4d97"/><stop offset="0.5253" stop-color="#ff306a"/><stop offset="0.6073" stop-color="#ff1644"/><stop offset="0.7312" stop-color="#ff0021"/><stop offset="0.9302" stop-color="#ff0004"/><stop offset="1" stop-color="#f00"/></linearGradient>
<linearGradient id="g179" gradientUnits="userSpaceOnUse" x1="1191" x2="1766"><stop offset="0" stop-color="#00bcff"/><stop offset="0.2365" stop-color="#01a6ff"/><stop offset="0.3061" stop-color="#659cff"/><stop offset="0.3652" stop-color="#cc92ff"/><stop offset="0.3913" stop-color="#ff8dfe"/><stop offset="0.4226" stop-color="#ff6ac8"/><stop offset="0.4643" stop-color="#ff4a97"/><stop offset="0.5217" stop-color="#ff2d6b"/><stop offset="0.6035" stop-color="#ff1444"/><stop offset="0.7217" stop-color="#ff0023"/><stop offset="0.9165" stop-color="#ff0006"/><stop offset="1" stop-color="#f00"/></linearGradient>
<linearGradient id="g180" gradientUnits="userSpaceOnUse" x1="1192" x2="1769"><stop offset="0" stop-color="#00b9ff"/><stop offset="0.2322" stop-color="#01a2ff"/><stop offset="0.3016" stop-color="#6398ff"/><stop offset="0.3622" stop-color="#cc8dff"/><stop offset="0.3882" stop-color="#f8f"/><stop offset="0.4194" stop-color="#ff66c9"/><stop offset="0.461" stop-color="#ff4798"/><stop offset="0.5182" stop-color="#ff2b6c"/><stop offset="0.5997" stop-color="#ff1245"/><stop offset="0.7106" stop-color="#ff0025"/><stop offset="0.8995" stop-color="#ff0007"/><stop offset="1" stop-color="#f00"/></linearGradient>
<linearGradient id="g181" gradientUnits="userSpaceOnUse" x1="1192" x2="1770"><stop offset="0" stop-color="#00b5ff"/><stop offset="0.2318" stop-color="#029eff"/><stop offset="0.301" stop-color="#6494ff"/><stop offset="0.3616" stop-color="#cc89ff"/><stop offset="0.3875" stop-color="#ff83ff"/><stop offset="0.4204" stop-color="#ff61c7"/><stop offset="0.4619" stop-color="#ff4398"/><stop offset="0.519" stop-color="#ff286c"/><stop offset="0.6021" stop-color="#ff1045"/><stop offset="0.7024" stop-color="#ff0028"/><stop offset="0.8858" stop-color="#ff0009"/><stop offset="1" stop-color="#f00"/></linearGradient>
<linearGradient id="g182" gradientUnits="userSpaceOnUse" x1="1193" x2="1767"><stop offset="0" stop-color="#00b2ff"/><stop offset="0.23" stop-color="#029aff"/><stop offset="0.3014" stop-color="#658fff"/><stop offset="0.3624" stop-color="#cc84ff"/><stop offset="0.3885" stop-color="#fe7fff"/><stop offset="0.4233" stop-color="#ff5cc6"/><stop offset="0.4669" stop-color="#ff3e95"/><stop offset="0.5261" stop-color="#ff246a"/><stop offset="0.6115" stop-color="#ff0d43"/><stop offset="0.6986" stop-color="#ff002a"/><stop offset="0.8798" stop-color="#ff000b"/><stop offset="1" stop-color="#f00"/></linearGradient>
<linearGradient id="g183" gradientUnits="userSpaceOnUse" x1="1193" x2="1762"><stop offset="0" stop-color="#00afff"/><stop offset="0.2302" stop-color="#0196ff"/><stop offset="0.3023" stop-color="#638bff"/><stop offset="0.3656" stop-color="#cc7fff"/><stop offset="0.3937" stop-color="#ff78fd"/><stop offset="0.4253" stop-color="#ff5ac9"/><stop offset="0.4692" stop-color="#ff3d98"/><stop offset="0.529" stop-color="#ff236c"/><stop offset="0.6151" stop-color="#ff0c44"/><stop offset="0.6977" stop-color="#ff002c"/><stop offset="0.8752" stop-color="#ff000d"/><stop offset="1" stop-color="#f00"/></linearGradient>
<linearGradient id="g184" gradientUnits="userSpaceOnUse" x1="1194" x2="1756"><stop offset="0" stop-color="#00acff"/><stop offset="0.2295" stop-color="#0193ff"/><stop offset="0.3043" stop-color="#6487ff"/><stop offset="0.3683" stop-color="#cc7bff"/><stop offset="0.3968" stop-color="#ff74fd"/><stop offset="0.4306" stop-color="#ff55c7"/><stop offset="0.4751" stop-color="#ff3997"/><stop offset="0.5374" stop-color="#ff206b"/><stop offset="0.6263" stop-color="#ff0943"/><stop offset="0.6975" stop-color="#ff002f"/><stop offset="0.8719" stop-color="#ff0010"/><stop offset="1" stop-color="#ff0002"/></linearGradient>
<linearGradient id="g185" gradientUnits="userSpaceOnUse" x1="1195" x2="1750"><stop offset="0" stop-color="#00a8ff"/><stop offset="0.2306" stop-color="#028fff"/><stop offset="0.3063" stop-color="#6583ff"/><stop offset="0.3712" stop-color="#cc76ff"/><stop offset="0.4" stop-color="#ff70fe"/><stop offset="0.4342" stop-color="#ff51c8"/><stop offset="0.4793" stop-color="#ff3698"/><stop offset="0.5423" stop-color="#ff1e6b"/><stop offset="0.6324" stop-color="#ff0844"/><stop offset="0.6991" stop-color="#ff0031"/><stop offset="0.8721" stop-color="#f01"/><stop offset="1" stop-color="#ff0003"/></linearGradient>
<linearGradient id="g186" gradientUnits="userSpaceOnUse" x1="1195" x2="1745"><stop offset="0" stop-color="#00a5ff"/><stop offset="0.2309" stop-color="#018bff"/><stop offset="0.3073" stop-color="#637fff"/><stop offset="0.3745" stop-color="#cc72ff"/><stop offset="0.4036" stop-color="#ff6bfe"/><stop offset="0.4382" stop-color="#ff4ec9"/><stop offset="0.4836" stop-color="#ff3498"/><stop offset="0.5473" stop-color="#ff1c6c"/><stop offset="0.6382" stop-color="#ff0645"/><stop offset="0.6982" stop-color="#f03"/><stop offset="0.8691" stop-color="#ff0013"/><stop offset="1" stop-color="#ff0004"/></linearGradient>
<linearGradient id="g187" gradientUnits="userSpaceOnUse" x1="1196" x2="1739"><stop offset="0" stop-color="#00a2ff"/><stop offset="0.2302" stop-color="#0188ff"/><stop offset="0.3094" stop-color="#647bff"/><stop offset="0.3775" stop-color="#cc6eff"/><stop offset="0.407" stop-color="#ff67fe"/><stop offset="0.442" stop-color="#ff4bc9"/><stop offset="0.488" stop-color="#ff3199"/><stop offset="0.5525" stop-color="#ff1a6d"/><stop offset="0.6446" stop-color="#ff0546"/><stop offset="0.7053" stop-color="#ff0034"/><stop offset="0.8785" stop-color="#ff0014"/><stop offset="1" stop-color="#ff0006"/></linearGradient>
<linearGradient id="g188" gradientUnits="userSpaceOnUse" x1="1197" x2="1733"><stop offset="0" stop-color="#009fff"/><stop offset="0.2313" stop-color="#0284ff"/><stop offset="0.3116" stop-color="#6577ff"/><stop offset="0.3806" stop-color="#cc6aff"/><stop offset="0.4104" stop-color="#ff63ff"/><stop offset="0.4459" stop-color="#ff47ca"/><stop offset="0.4944" stop-color="#ff2e99"/><stop offset="0.5597" stop-color="#ff176d"/><stop offset="0.653" stop-color="#ff0346"/><stop offset="0.7948" stop-color="#ff0023"/><stop offset="1" stop-color="#ff0008"/></linearGradient>
<linearGradient id="g189" gradientUnits="userSpaceOnUse" x1="1197" x2="1728"><stop offset="0" stop-color="#009cff"/><stop offset="0.2316" stop-color="#0281ff"/><stop offset="0.3126" stop-color="#6474ff"/><stop offset="0.3842" stop-color="#c6f"/><stop offset="0.4143" stop-color="#ff5fff"/><stop offset="0.452" stop-color="#ff43c8"/><stop offset="0.5009" stop-color="#ff2a98"/><stop offset="0.5687" stop-color="#ff146c"/><stop offset="0.6648" stop-color="#ff0045"/><stop offset="0.8098" stop-color="#ff0023"/><stop offset="1" stop-color="#ff0009"/></linearGradient>
<linearGradient id="g190" gradientUnits="userSpaceOnUse" x1="1198" x2="1722"><stop offset="0" stop-color="#09f"/><stop offset="0.2309" stop-color="#017eff"/><stop offset="0.3149" stop-color="#6470ff"/><stop offset="0.3874" stop-color="#cc61ff"/><stop offset="0.4198" stop-color="#ff59fc"/><stop offset="0.458" stop-color="#ff3fc7"/><stop offset="0.5076" stop-color="#ff2797"/><stop offset="0.5763" stop-color="#ff126c"/><stop offset="0.6756" stop-color="#f04"/><stop offset="0.8244" stop-color="#f02"/><stop offset="1" stop-color="#ff000b"/></linearGradient>
<linearGradient id="g191" gradientUnits="userSpaceOnUse" x1="1198" x2="1716"><stop offset="0" stop-color="#0096ff"/><stop offset="0.2317" stop-color="#017aff"/><stop offset="0.3166" stop-color="#636cff"/><stop offset="0.39" stop-color="#c95eff"/><stop offset="0.4247" stop-color="#ff55fd"/><stop offset="0.4633" stop-color="#ff3cc7"/><stop offset="0.5154" stop-color="#ff2496"/><stop offset="0.5869" stop-color="#ff0f6a"/><stop offset="0.6795" stop-color="#ff0046"/><stop offset="0.8282" stop-color="#ff0024"/><stop offset="1" stop-color="#ff000d"/></linearGradient>
<linearGradient id="g192" gradientUnits="userSpaceOnUse" x1="1199" x2="1711"><stop offset="0" stop-color="#0093ff"/><stop offset="0.2324" stop-color="#0277ff"/><stop offset="0.3203" stop-color="#6668ff"/><stop offset="0.3945" stop-color="#cc5aff"/><stop offset="0.4277" stop-color="#ff51fd"/><stop offset="0.4668" stop-color="#ff39c8"/><stop offset="0.5195" stop-color="#ff2297"/><stop offset="0.5918" stop-color="#ff0d6b"/><stop offset="0.6758" stop-color="#ff004a"/><stop offset="0.8203" stop-color="#ff0027"/><stop offset="1" stop-color="#ff000e"/></linearGradient>
<linearGradient id="g193" gradientUnits="userSpaceOnUse" x1="1200" x2="1705"><stop offset="0" stop-color="#0090ff"/><stop offset="0.2317" stop-color="#0274ff"/><stop offset="0.3208" stop-color="#6465ff"/><stop offset="0.398" stop-color="#cc56ff"/><stop offset="0.4317" stop-color="#ff4efe"/><stop offset="0.4713" stop-color="#ff35c9"/><stop offset="0.5248" stop-color="#ff1f98"/><stop offset="0.598" stop-color="#ff0b6c"/><stop offset="0.6752" stop-color="#ff004d"/><stop offset="0.8178" stop-color="#ff002a"/><stop offset="1" stop-color="#ff0010"/></linearGradient>
<linearGradient id="g194" gradientUnits="userSpaceOnUse" x1="1201" x2="1699"><stop offset="0" stop-color="#008dff"/><stop offset="0.2309" stop-color="#0171ff"/><stop offset="0.3213" stop-color="#6362ff"/><stop offset="0.3996" stop-color="#ca52ff"/><stop offset="0.4357" stop-color="#ff4afe"/><stop offset="0.4759" stop-color="#ff32c9"/><stop offset="0.5301" stop-color="#ff1d99"/><stop offset="0.6044" stop-color="#ff0a6d"/><stop offset="0.6747" stop-color="#ff0051"/><stop offset="0.8153" stop-color="#ff002d"/><stop offset="1" stop-color="#ff0012"/></linearGradient>
<linearGradient id="g195" gradientUnits="userSpaceOnUse" x1="1201" x2="1694"><stop offset="0" stop-color="#008aff"/><stop offset="0.2333" stop-color="#026dff"/><stop offset="0.3266" stop-color="#665eff"/><stop offset="0.4057" stop-color="#cc4eff"/><stop offset="0.4402" stop-color="#ff46fe"/><stop offset="0.4807" stop-color="#ff30ca"/><stop offset="0.5355" stop-color="#ff1b99"/><stop offset="0.6105" stop-color="#ff086e"/><stop offset="0.6734" stop-color="#ff0054"/><stop offset="0.8114" stop-color="#ff0030"/><stop offset="1" stop-color="#ff0014"/></linearGradient>
<linearGradient id="g196" gradientUnits="userSpaceOnUse" x1="1202" x2="1688"><stop offset="0" stop-color="#0087ff"/><stop offset="0.2325" stop-color="#026bff"/><stop offset="0.3272" stop-color="#655bff"/><stop offset="0.4095" stop-color="#cd4aff"/><stop offset="0.4444" stop-color="#ff42ff"/><stop offset="0.4877" stop-color="#ff2cc9"/><stop offset="0.5453" stop-color="#ff1797"/><stop offset="0.6235" stop-color="#ff056c"/><stop offset="0.6811" stop-color="#f05"/><stop offset="0.821" stop-color="#ff0031"/><stop offset="1" stop-color="#ff0016"/></linearGradient>
<linearGradient id="g197" gradientUnits="userSpaceOnUse" x1="1203" x2="1682"><stop offset="0" stop-color="#0084ff"/><stop offset="0.2317" stop-color="#0168ff"/><stop offset="0.3299" stop-color="#6558ff"/><stop offset="0.4134" stop-color="#cd47ff"/><stop offset="0.4489" stop-color="#ff3fff"/><stop offset="0.4927" stop-color="#ff29c9"/><stop offset="0.5511" stop-color="#ff1598"/><stop offset="0.6305" stop-color="#ff036c"/><stop offset="0.737" stop-color="#ff0047"/><stop offset="0.904" stop-color="#ff0025"/><stop offset="1" stop-color="#ff0018"/></linearGradient>
<linearGradient id="g198" gradientUnits="userSpaceOnUse" x1="1203" x2="1677"><stop offset="0" stop-color="#0081ff"/><stop offset="0.2321" stop-color="#0165ff"/><stop offset="0.3312" stop-color="#6455ff"/><stop offset="0.4177" stop-color="#cd43ff"/><stop offset="0.4557" stop-color="#ff3afd"/><stop offset="0.5" stop-color="#ff25c8"/><stop offset="0.5591" stop-color="#ff1297"/><stop offset="0.6414" stop-color="#ff016b"/><stop offset="0.7595" stop-color="#f04"/><stop offset="0.9367" stop-color="#f02"/><stop offset="1" stop-color="#ff0019"/></linearGradient>
<linearGradient id="g199" gradientUnits="userSpaceOnUse" x1="1204" x2="1671"><stop offset="0" stop-color="#007eff"/><stop offset="0.2334" stop-color="#0262ff"/><stop offset="0.334" stop-color="#6551ff"/><stop offset="0.4218" stop-color="#cd40ff"/><stop offset="0.4604" stop-color="#ff37fd"/><stop offset="0.5054" stop-color="#ff22c8"/><stop offset="0.5653" stop-color="#ff1098"/><stop offset="0.6488" stop-color="#ff006c"/><stop offset="0.7687" stop-color="#ff0045"/><stop offset="0.9486" stop-color="#f02"/><stop offset="1" stop-color="#ff001c"/></linearGradient>
<linearGradient id="g200" gradientUnits="userSpaceOnUse" x1="1205" x2="1665"><stop offset="0" stop-color="#007bff"/><stop offset="0.2326" stop-color="#025fff"/><stop offset="0.337" stop-color="#654eff"/><stop offset="0.4261" stop-color="#cd3cff"/><stop offset="0.4652" stop-color="#ff33fd"/><stop offset="0.5109" stop-color="#ff20c9"/><stop offset="0.5717" stop-color="#ff0e99"/><stop offset="0.6543" stop-color="#ff006e"/><stop offset="0.7739" stop-color="#ff0047"/><stop offset="0.9543" stop-color="#ff0024"/><stop offset="1" stop-color="#ff001e"/></linearGradient>
<linearGradient id="g201" gradientUnits="userSpaceOnUse" x1="1206" x2="1660"><stop offset="0" stop-color="#0078ff"/><stop offset="0.2313" stop-color="#015cff"/><stop offset="0.337" stop-color="#644bff"/><stop offset="0.4295" stop-color="#cd39ff"/><stop offset="0.4692" stop-color="#ff30fe"/><stop offset="0.5176" stop-color="#ff1cc7"/><stop offset="0.5815" stop-color="#ff0b97"/><stop offset="0.652" stop-color="#ff0072"/><stop offset="0.7709" stop-color="#ff004a"/><stop offset="0.9471" stop-color="#ff0027"/><stop offset="1" stop-color="#ff0020"/></linearGradient>
<linearGradient id="g202" gradientUnits="userSpaceOnUse" x1="1206" x2="1654"><stop offset="0" stop-color="#0076ff"/><stop offset="0.2344" stop-color="#0359ff"/><stop offset="0.3415" stop-color="#6548ff"/><stop offset="0.4353" stop-color="#cd36ff"/><stop offset="0.4754" stop-color="#ff2cfe"/><stop offset="0.5246" stop-color="#ff19c8"/><stop offset="0.5893" stop-color="#ff0898"/><stop offset="0.6518" stop-color="#f07"/><stop offset="0.7679" stop-color="#ff004e"/><stop offset="0.9397" stop-color="#ff002b"/><stop offset="1" stop-color="#f02"/></linearGradient>
<linearGradient id="g203" gradientUnits="userSpaceOnUse" x1="1207" x2="1648"><stop offset="0" stop-color="#0073ff"/><stop offset="0.2336" stop-color="#0257ff"/><stop offset="0.3447" stop-color="#6545ff"/><stop offset="0.4399" stop-color="#cd32ff"/><stop offset="0.4807" stop-color="#ff29fe"/><stop offset="0.5306" stop-color="#ff17c9"/><stop offset="0.5964" stop-color="#ff0698"/><stop offset="0.6508" stop-color="#ff007c"/><stop offset="0.7642" stop-color="#ff0053"/><stop offset="0.932" stop-color="#ff002f"/><stop offset="1" stop-color="#ff0024"/></linearGradient>
<linearGradient id="g204" gradientUnits="userSpaceOnUse" x1="1208" x2="1643"><stop offset="0" stop-color="#0070ff"/><stop offset="0.2322" stop-color="#0254ff"/><stop offset="0.3448" stop-color="#6442ff"/><stop offset="0.4437" stop-color="#cd2fff"/><stop offset="0.4851" stop-color="#ff26ff"/><stop offset="0.5356" stop-color="#ff14c9"/><stop offset="0.6023" stop-color="#ff0499"/><stop offset="0.6575" stop-color="#ff007c"/><stop offset="0.7724" stop-color="#ff0054"/><stop offset="0.9425" stop-color="#ff002f"/><stop offset="1" stop-color="#ff0027"/></linearGradient>
<linearGradient id="g205" gradientUnits="userSpaceOnUse" x1="1209" x2="1637"><stop offset="0" stop-color="#006dff"/><stop offset="0.2313" stop-color="#0152ff"/><stop offset="0.3481" stop-color="#653fff"/><stop offset="0.4486" stop-color="#cd2cff"/><stop offset="0.4907" stop-color="#ff23ff"/><stop offset="0.5421" stop-color="#ff12ca"/><stop offset="0.6098" stop-color="#ff029a"/><stop offset="0.7033" stop-color="#ff006e"/><stop offset="0.8388" stop-color="#ff0046"/><stop offset="1" stop-color="#ff0029"/></linearGradient>
<linearGradient id="g206" gradientUnits="userSpaceOnUse" x1="1209" x2="1632"><stop offset="0" stop-color="#006bff"/><stop offset="0.234" stop-color="#024fff"/><stop offset="0.3522" stop-color="#663cff"/><stop offset="0.4539" stop-color="#cd29ff"/><stop offset="0.4988" stop-color="#ff1ffd"/><stop offset="0.5508" stop-color="#ff0fc8"/><stop offset="0.6217" stop-color="#ff0098"/><stop offset="0.7187" stop-color="#ff006c"/><stop offset="0.8582" stop-color="#ff0045"/><stop offset="1" stop-color="#ff002b"/></linearGradient>
<linearGradient id="g207" gradientUnits="userSpaceOnUse" x1="1210" x2="1626"><stop offset="0" stop-color="#0068ff"/><stop offset="0.2332" stop-color="#024cff"/><stop offset="0.3534" stop-color="#643aff"/><stop offset="0.4591" stop-color="#cd26ff"/><stop offset="0.5048" stop-color="#ff1cfd"/><stop offset="0.5601" stop-color="#ff0bc7"/><stop offset="0.6298" stop-color="#ff0098"/><stop offset="0.7284" stop-color="#ff006d"/><stop offset="0.8702" stop-color="#ff0045"/><stop offset="1" stop-color="#ff002e"/></linearGradient>
<linearGradient id="g208" gradientUnits="userSpaceOnUse" x1="1211" x2="1620"><stop offset="0" stop-color="#0065ff"/><stop offset="0.2323" stop-color="#014aff"/><stop offset="0.357" stop-color="#6537ff"/><stop offset="0.4645" stop-color="#cd23ff"/><stop offset="0.511" stop-color="#ff19fd"/><stop offset="0.5672" stop-color="#ff09c8"/><stop offset="0.6259" stop-color="#ff00a0"/><stop offset="0.7237" stop-color="#ff0073"/><stop offset="0.8606" stop-color="#ff004b"/><stop offset="1" stop-color="#ff0031"/></linearGradient>
<linearGradient id="g209" gradientUnits="userSpaceOnUse" x1="1212" x2="1615"><stop offset="0" stop-color="#0063ff"/><stop offset="0.2308" stop-color="#0148ff"/><stop offset="0.3573" stop-color="#6334ff"/><stop offset="0.4665" stop-color="#ca20ff"/><stop offset="0.5161" stop-color="#ff16fe"/><stop offset="0.5732" stop-color="#ff07c8"/><stop offset="0.6253" stop-color="#ff00a5"/><stop offset="0.7196" stop-color="#ff0078"/><stop offset="0.8536" stop-color="#ff0050"/><stop offset="1" stop-color="#f03"/></linearGradient>
<linearGradient id="g210" gradientUnits="userSpaceOnUse" x1="1213" x2="1609"><stop offset="0" stop-color="#0060ff"/><stop offset="0.2323" stop-color="#0245ff"/><stop offset="0.3636" stop-color="#6631ff"/><stop offset="0.4747" stop-color="#cd1dff"/><stop offset="0.5227" stop-color="#ff13fe"/><stop offset="0.5808" stop-color="#ff04c9"/><stop offset="0.6364" stop-color="#ff00a4"/><stop offset="0.7348" stop-color="#f07"/><stop offset="0.8737" stop-color="#ff004e"/><stop offset="1" stop-color="#ff0036"/></linearGradient>
<linearGradient id="g211" gradientUnits="userSpaceOnUse" x1="1214" x2="1603"><stop offset="0" stop-color="#005dff"/><stop offset="0.2314" stop-color="#0243ff"/><stop offset="0.365" stop-color="#652fff"/><stop offset="0.4807" stop-color="#cd1aff"/><stop offset="0.5296" stop-color="#ff10fe"/><stop offset="0.5887" stop-color="#ff02c9"/><stop offset="0.6684" stop-color="#ff0098"/><stop offset="0.7789" stop-color="#ff006c"/><stop offset="0.9357" stop-color="#ff0045"/><stop offset="1" stop-color="#ff003a"/></linearGradient>
<linearGradient id="g212" gradientUnits="userSpaceOnUse" x1="1214" x2="1598"><stop offset="0" stop-color="#005bff"/><stop offset="0.2318" stop-color="#0140ff"/><stop offset="0.3672" stop-color="#642cff"/><stop offset="0.4844" stop-color="#cb17ff"/><stop offset="0.5365" stop-color="#ff0dff"/><stop offset="0.5964" stop-color="#ff00ca"/><stop offset="0.6771" stop-color="#f09"/><stop offset="0.7891" stop-color="#ff006d"/><stop offset="0.9479" stop-color="#ff0046"/><stop offset="1" stop-color="#ff003c"/></linearGradient>
<linearGradient id="g213" gradientUnits="userSpaceOnUse" x1="1215" x2="1592"><stop offset="0" stop-color="#0058ff"/><stop offset="0.2334" stop-color="#023eff"/><stop offset="0.374" stop-color="#6629ff"/><stop offset="0.4934" stop-color="#cd14ff"/><stop offset="0.5464" stop-color="#ff09fc"/><stop offset="0.6048" stop-color="#ff00cb"/><stop offset="0.687" stop-color="#ff009a"/><stop offset="0.8011" stop-color="#ff006d"/><stop offset="0.9629" stop-color="#ff0046"/><stop offset="1" stop-color="#ff0040"/></linearGradient>
<linearGradient id="g214" gradientUnits="userSpaceOnUse" x1="1216" x2="1586"><stop offset="0" stop-color="#0056ff"/><stop offset="0.2324" stop-color="#023cff"/><stop offset="0.3757" stop-color="#6527ff"/><stop offset="0.5" stop-color="#cd11ff"/><stop offset="0.5541" stop-color="#ff07fd"/><stop offset="0.6027" stop-color="#ff00d3"/><stop offset="0.6838" stop-color="#ff00a1"/><stop offset="0.7946" stop-color="#ff0074"/><stop offset="0.9514" stop-color="#ff004c"/><stop offset="1" stop-color="#ff0043"/></linearGradient>
<linearGradient id="g215" gradientUnits="userSpaceOnUse" x1="1217" x2="1581"><stop offset="0" stop-color="#0053ff"/><stop offset="0.2308" stop-color="#0139ff"/><stop offset="0.3764" stop-color="#6425ff"/><stop offset="0.5027" stop-color="#cb0fff"/><stop offset="0.5604" stop-color="#ff04fd"/><stop offset="0.6154" stop-color="#ff00cf"/><stop offset="0.7005" stop-color="#ff009e"/><stop offset="0.8159" stop-color="#ff0071"/><stop offset="0.9808" stop-color="#ff004a"/><stop offset="1" stop-color="#ff0046"/></linearGradient>
<linearGradient id="g216" gradientUnits="userSpaceOnUse" x1="1218" x2="1575"><stop offset="0" stop-color="#0051ff"/><stop offset="0.2297" stop-color="#0137ff"/><stop offset="0.381" stop-color="#6422ff"/><stop offset="0.5126" stop-color="#cd0cff"/><stop offset="0.5686" stop-color="#ff01fd"/><stop offset="0.6359" stop-color="#ff00c8"/><stop offset="0.7255" stop-color="#ff0098"/><stop offset="0.8487" stop-color="#ff006c"/><stop offset="1" stop-color="#ff004a"/></linearGradient>
<linearGradient id="g217" gradientUnits="userSpaceOnUse" x1="1219" x2="1569"><stop offset="0" stop-color="#004eff"/><stop offset="0.2314" stop-color="#0235ff"/><stop offset="0.3857" stop-color="#6520ff"/><stop offset="0.52" stop-color="#cd09ff"/><stop offset="0.5771" stop-color="#ff00fe"/><stop offset="0.6457" stop-color="#ff00c9"/><stop offset="0.7371" stop-color="#f09"/><stop offset="0.8629" stop-color="#ff006d"/><stop offset="1" stop-color="#ff004d"/></linearGradient>
<linearGradient id="g218" gradientUnits="userSpaceOnUse" x1="1220" x2="1564"><stop offset="0" stop-color="#004cff"/><stop offset="0.2297" stop-color="#0233ff"/><stop offset="0.3895" stop-color="#661dff"/><stop offset="0.5262" stop-color="#cd07ff"/><stop offset="0.5843" stop-color="#ff00fe"/><stop offset="0.6541" stop-color="#ff00c9"/><stop offset="0.75" stop-color="#ff0098"/><stop offset="0.8808" stop-color="#ff006c"/><stop offset="1" stop-color="#ff0051"/></linearGradient>
<linearGradient id="g219" gradientUnits="userSpaceOnUse" x1="1221" x2="1558"><stop offset="0" stop-color="#0049ff"/><stop offset="0.2285" stop-color="#0131ff"/><stop offset="0.3917" stop-color="#641bff"/><stop offset="0.5341" stop-color="#cd04ff"/><stop offset="0.5935" stop-color="#ff00fe"/><stop offset="0.6677" stop-color="#ff00c8"/><stop offset="0.7656" stop-color="#ff0097"/><stop offset="0.9021" stop-color="#ff006b"/><stop offset="1" stop-color="#f05"/></linearGradient>
<linearGradient id="g220" gradientUnits="userSpaceOnUse" x1="1222" x2="1552"><stop offset="0" stop-color="#0047ff"/><stop offset="0.2303" stop-color="#022eff"/><stop offset="0.397" stop-color="#6519ff"/><stop offset="0.5424" stop-color="#cd01ff"/><stop offset="0.603" stop-color="#f0f"/><stop offset="0.6788" stop-color="#ff00c9"/><stop offset="0.7788" stop-color="#ff0098"/><stop offset="0.9182" stop-color="#ff006c"/><stop offset="1" stop-color="#ff0059"/></linearGradient>
<linearGradient id="g221" gradientUnits="userSpaceOnUse" x1="1223" x2="1547"><stop offset="0" stop-color="#04f"/><stop offset="0.2284" stop-color="#022cff"/><stop offset="0.4012" stop-color="#6616ff"/><stop offset="0.5494" stop-color="#cd00ff"/><stop offset="0.6142" stop-color="#ff00fd"/><stop offset="0.6914" stop-color="#ff00c7"/><stop offset="0.7963" stop-color="#ff0096"/><stop offset="0.9414" stop-color="#ff006a"/><stop offset="1" stop-color="#ff005d"/></linearGradient>
<linearGradient id="g222" gradientUnits="userSpaceOnUse" x1="1224" x2="1541"><stop offset="0" stop-color="#0042ff"/><stop offset="0.2271" stop-color="#022aff"/><stop offset="0.4038" stop-color="#6414ff"/><stop offset="0.5552" stop-color="#cb00ff"/><stop offset="0.6246" stop-color="#ff00fd"/><stop offset="0.7035" stop-color="#ff00c8"/><stop offset="0.8107" stop-color="#ff0097"/><stop offset="0.959" stop-color="#ff006b"/><stop offset="1" stop-color="#ff0061"/></linearGradient>
<linearGradient id="g223" gradientUnits="userSpaceOnUse" x1="1225" x2="1535"><stop offset="0" stop-color="#003fff"/><stop offset="0.2258" stop-color="#0128ff"/><stop offset="0.4097" stop-color="#6512ff"/><stop offset="0.5484" stop-color="#c000ff"/><stop offset="0.6355" stop-color="#ff00fd"/><stop offset="0.7161" stop-color="#ff00c9"/><stop offset="0.8258" stop-color="#ff0098"/><stop offset="0.9774" stop-color="#ff006b"/><stop offset="1" stop-color="#f06"/></linearGradient>
<linearGradient id="g224" gradientUnits="userSpaceOnUse" x1="1226" x2="1530"><stop offset="0" stop-color="#003dff"/><stop offset="0.227" stop-color="#0226ff"/><stop offset="0.4145" stop-color="#660fff"/><stop offset="0.5428" stop-color="#b700ff"/><stop offset="0.6447" stop-color="#ff00fd"/><stop offset="0.7303" stop-color="#ff00c7"/><stop offset="0.8421" stop-color="#ff0097"/><stop offset="0.9967" stop-color="#ff006b"/><stop offset="1" stop-color="#ff006a"/></linearGradient>
<linearGradient id="g225" gradientUnits="userSpaceOnUse" x1="1226" x2="1524"><stop offset="0" stop-color="#003bff"/><stop offset="0.2282" stop-color="#0224ff"/><stop offset="0.4195" stop-color="#650dff"/><stop offset="0.5369" stop-color="#ac00ff"/><stop offset="0.6577" stop-color="#ff00fe"/><stop offset="0.745" stop-color="#ff00c8"/><stop offset="0.8591" stop-color="#ff0098"/><stop offset="1" stop-color="#ff0070"/></linearGradient>
<linearGradient id="g226" gradientUnits="userSpaceOnUse" x1="1227" x2="1518"><stop offset="0" stop-color="#0038ff"/><stop offset="0.2268" stop-color="#0123ff"/><stop offset="0.4261" stop-color="#650bff"/><stop offset="0.5326" stop-color="#a400ff"/><stop offset="0.6701" stop-color="#ff00fe"/><stop offset="0.7595" stop-color="#ff00c8"/><stop offset="0.8797" stop-color="#ff0097"/><stop offset="1" stop-color="#ff0075"/></linearGradient>
<linearGradient id="g227" gradientUnits="userSpaceOnUse" x1="1228" x2="1513"><stop offset="0" stop-color="#0036ff"/><stop offset="0.2281" stop-color="#0320ff"/><stop offset="0.4316" stop-color="#6609ff"/><stop offset="0.5263" stop-color="#9b00ff"/><stop offset="0.6807" stop-color="#ff00fe"/><stop offset="0.7719" stop-color="#ff00c9"/><stop offset="0.8947" stop-color="#ff0098"/><stop offset="1" stop-color="#ff007a"/></linearGradient>
<linearGradient id="g228" gradientUnits="userSpaceOnUse" x1="1229" x2="1507"><stop offset="0" stop-color="#03f"/><stop offset="0.2266" stop-color="#021fff"/><stop offset="0.4353" stop-color="#6507ff"/><stop offset="0.5216" stop-color="#9400ff"/><stop offset="0.6942" stop-color="#f0f"/><stop offset="0.7878" stop-color="#ff00c9"/><stop offset="0.9137" stop-color="#ff0098"/><stop offset="1" stop-color="#ff0080"/></linearGradient>
<linearGradient id="g229" gradientUnits="userSpaceOnUse" x1="1230" x2="1501"><stop offset="0" stop-color="#0031ff"/><stop offset="0.2251" stop-color="#021dff"/><stop offset="0.4428" stop-color="#6505ff"/><stop offset="0.524" stop-color="#9000ff"/><stop offset="0.7011" stop-color="#fa00ff"/><stop offset="0.7159" stop-color="#ff00fa"/><stop offset="0.8155" stop-color="#ff00c5"/><stop offset="0.9483" stop-color="#ff0094"/><stop offset="1" stop-color="#ff0086"/></linearGradient>
<linearGradient id="g230" gradientUnits="userSpaceOnUse" x1="1231" x2="1496"><stop offset="0" stop-color="#002fff"/><stop offset="0.2226" stop-color="#011bff"/><stop offset="0.4453" stop-color="#6403ff"/><stop offset="0.5698" stop-color="#a500ff"/><stop offset="0.7245" stop-color="#ff00fd"/><stop offset="0.8264" stop-color="#ff00c7"/><stop offset="0.9623" stop-color="#ff0096"/><stop offset="1" stop-color="#ff008c"/></linearGradient>
<linearGradient id="g231" gradientUnits="userSpaceOnUse" x1="1233" x2="1490"><stop offset="0" stop-color="#002cff"/><stop offset="0.2218" stop-color="#0219ff"/><stop offset="0.4553" stop-color="#6601ff"/><stop offset="0.6537" stop-color="#ce00ff"/><stop offset="0.7393" stop-color="#ff00fd"/><stop offset="0.8444" stop-color="#ff00c7"/><stop offset="0.9844" stop-color="#ff0097"/><stop offset="1" stop-color="#ff0092"/></linearGradient>
<linearGradient id="g232" gradientUnits="userSpaceOnUse" x1="1234" x2="1484"><stop offset="0" stop-color="#002aff"/><stop offset="0.22" stop-color="#0217ff"/><stop offset="0.46" stop-color="#6500ff"/><stop offset="0.668" stop-color="#ce00ff"/><stop offset="0.756" stop-color="#ff00fe"/><stop offset="0.864" stop-color="#ff00c8"/><stop offset="1" stop-color="#ff009a"/></linearGradient>
<linearGradient id="g233" gradientUnits="userSpaceOnUse" x1="1235" x2="1479"><stop offset="0" stop-color="#0028ff"/><stop offset="0.2172" stop-color="#0116ff"/><stop offset="0.4631" stop-color="#6400ff"/><stop offset="0.6762" stop-color="#c0f"/><stop offset="0.7705" stop-color="#ff00fe"/><stop offset="0.8811" stop-color="#ff00c8"/><stop offset="1" stop-color="#ff00a0"/></linearGradient>
<linearGradient id="g234" gradientUnits="userSpaceOnUse" x1="1236" x2="1473"><stop offset="0" stop-color="#0025ff"/><stop offset="0.2194" stop-color="#0314ff"/><stop offset="0.4557" stop-color="#5e00ff"/><stop offset="0.6793" stop-color="#c500ff"/><stop offset="0.789" stop-color="#ff00fe"/><stop offset="0.903" stop-color="#ff00c9"/><stop offset="1" stop-color="#ff00a8"/></linearGradient>
<linearGradient id="g235" gradientUnits="userSpaceOnUse" x1="1237" x2="1467"><stop offset="0" stop-color="#0023ff"/><stop offset="0.2174" stop-color="#0212ff"/><stop offset="0.4435" stop-color="#50f"/><stop offset="0.6783" stop-color="#bd00ff"/><stop offset="0.8087" stop-color="#ff00fe"/><stop offset="0.9261" stop-color="#ff00c9"/><stop offset="1" stop-color="#ff00b0"/></linearGradient>
<linearGradient id="g236" gradientUnits="userSpaceOnUse" x1="1238" x2="1462"><stop offset="0" stop-color="#0021ff"/><stop offset="0.2143" stop-color="#0210ff"/><stop offset="0.433" stop-color="#4f00ff"/><stop offset="0.6786" stop-color="#b700ff"/><stop offset="0.8304" stop-color="#ff00fc"/><stop offset="0.9554" stop-color="#ff00c7"/><stop offset="1" stop-color="#ff00b8"/></linearGradient>
<linearGradient id="g237" gradientUnits="userSpaceOnUse" x1="1239" x2="1456"><stop offset="0" stop-color="#001fff"/><stop offset="0.212" stop-color="#010fff"/><stop offset="0.4194" stop-color="#4700ff"/><stop offset="0.6774" stop-color="#af00ff"/><stop offset="0.8525" stop-color="#ff00fd"/><stop offset="0.9816" stop-color="#ff00c7"/><stop offset="1" stop-color="#ff00c1"/></linearGradient>
<linearGradient id="g238" gradientUnits="userSpaceOnUse" x1="1240" x2="1450"><stop offset="0" stop-color="#001cff"/><stop offset="0.2143" stop-color="#020dff"/><stop offset="0.4048" stop-color="#4000ff"/><stop offset="0.6762" stop-color="#a700ff"/><stop offset="0.8762" stop-color="#ff00fd"/><stop offset="1" stop-color="#ff00cb"/></linearGradient>
<linearGradient id="g239" gradientUnits="userSpaceOnUse" x1="1241" x2="1445"><stop offset="0" stop-color="#001aff"/><stop offset="0.2108" stop-color="#020bff"/><stop offset="0.3922" stop-color="#3a00ff"/><stop offset="0.6765" stop-color="#a100ff"/><stop offset="0.8971" stop-color="#ff00fd"/><stop offset="1" stop-color="#ff00d4"/></linearGradient>
<linearGradient id="g240" gradientUnits="userSpaceOnUse" x1="1243" x2="1439"><stop offset="0" stop-color="#0018ff"/><stop offset="0.2041" stop-color="#020aff"/><stop offset="0.3776" stop-color="#3500ff"/><stop offset="0.6735" stop-color="#9a00ff"/><stop offset="0.9235" stop-color="#ff00fe"/><stop offset="1" stop-color="#ff00df"/></linearGradient>
<linearGradient id="g241" gradientUnits="userSpaceOnUse" x1="1244" x2="1433"><stop offset="0" stop-color="#0016ff"/><stop offset="0.2063" stop-color="#0308ff"/><stop offset="0.3651" stop-color="#2f00ff"/><stop offset="0.6772" stop-color="#9400ff"/><stop offset="0.9524" stop-color="#ff00fe"/><stop offset="1" stop-color="#ff00eb"/></linearGradient>
<linearGradient id="g242" gradientUnits="userSpaceOnUse" x1="1245" x2="1428"><stop offset="0" stop-color="#0013ff"/><stop offset="0.2022" stop-color="#0206ff"/><stop offset="0.3497" stop-color="#2a00ff"/><stop offset="0.6776" stop-color="#8f00ff"/><stop offset="0.9617" stop-color="#f900ff"/><stop offset="0.9891" stop-color="#ff00fa"/><stop offset="1" stop-color="#ff00f5"/></linearGradient>
<linearGradient id="g243" gradientUnits="userSpaceOnUse" x1="1246" x2="1422"><stop offset="0" stop-color="#01f"/><stop offset="0.1989" stop-color="#0205ff"/><stop offset="0.3466" stop-color="#2800ff"/><stop offset="0.6932" stop-color="#8e00ff"/><stop offset="0.9886" stop-color="#f700ff"/><stop offset="1" stop-color="#fb00ff"/></linearGradient>
<linearGradient id="g244" gradientUnits="userSpaceOnUse" x1="1248" x2="1416"><stop offset="0" stop-color="#000fff"/><stop offset="0.1905" stop-color="#0103ff"/><stop offset="0.3988" stop-color="#3500ff"/><stop offset="0.756" stop-color="#9b00ff"/><stop offset="1" stop-color="#e0f"/></linearGradient>
<linearGradient id="g245" gradientUnits="userSpaceOnUse" x1="1249" x2="1411"><stop offset="0" stop-color="#000dff"/><stop offset="0.1914" stop-color="#0202ff"/><stop offset="0.5926" stop-color="#60f"/><stop offset="0.9383" stop-color="#ce00ff"/><stop offset="1" stop-color="#e300ff"/></linearGradient>
<linearGradient id="g246" gradientUnits="userSpaceOnUse" x1="1250" x2="1405"><stop offset="0" stop-color="#000bff"/><stop offset="0.1871" stop-color="#0200ff"/><stop offset="0.6065" stop-color="#6500ff"/><stop offset="0.9677" stop-color="#c0f"/><stop offset="1" stop-color="#d600ff"/></linearGradient>
<linearGradient id="g247" gradientUnits="userSpaceOnUse" x1="1252" x2="1400"><stop offset="0" stop-color="#0008ff"/><stop offset="0.1757" stop-color="#0200ff"/><stop offset="0.6216" stop-color="#6500ff"/><stop offset="1" stop-color="#c0f"/></linearGradient>
<linearGradient id="g248" gradientUnits="userSpaceOnUse" x1="1253" x2="1394"><stop offset="0" stop-color="#0006ff"/><stop offset="0.1773" stop-color="#0300ff"/><stop offset="0.6454" stop-color="#60f"/><stop offset="1" stop-color="#c000ff"/></linearGradient>
<linearGradient id="g249" gradientUnits="userSpaceOnUse" x1="1255" x2="1388"><stop offset="0" stop-color="#0004ff"/><stop offset="0.1654" stop-color="#0200ff"/><stop offset="0.6617" stop-color="#6500ff"/><stop offset="1" stop-color="#b500ff"/></linearGradient>
<linearGradient id="g250" gradientUnits="userSpaceOnUse" x1="1256" x2="1383"><stop offset="0" stop-color="#0002ff"/><stop offset="0.1575" stop-color="#0200ff"/><stop offset="0.685" stop-color="#6500ff"/><stop offset="1" stop-color="#ac00ff"/></linearGradient>
<linearGradient id="g251" gradientUnits="userSpaceOnUse" x1="1258" x2="1377"><stop offset="0" stop-color="#00f"/><stop offset="0.1513" stop-color="#0300ff"/><stop offset="0.7143" stop-color="#60f"/><stop offset="1" stop-color="#a100ff"/></linearGradient>
<linearGradient id="g252" gradientUnits="userSpaceOnUse" x1="1260" x2="1371"><stop offset="0" stop-color="#00f"/><stop offset="0.1351" stop-color="#0200ff"/><stop offset="0.7477" stop-color="#6700ff"/><stop offset="1" stop-color="#9600ff"/></linearGradient>
<linearGradient id="g253" gradientUnits="userSpaceOnUse" x1="1262" x2="1366"><stop offset="0" stop-color="#00f"/><stop offset="0.1154" stop-color="#0200ff"/><stop offset="0.7692" stop-color="#60f"/><stop offset="1" stop-color="#8e00ff"/></linearGradient>
<linearGradient id="g254" gradientUnits="userSpaceOnUse" x1="1263" x2="1360"><stop offset="0" stop-color="#00f"/><stop offset="0.1134" stop-color="#0300ff"/><stop offset="0.8144" stop-color="#60f"/><stop offset="1" stop-color="#8400ff"/></linearGradient>
<linearGradient id="g255" gradientUnits="userSpaceOnUse" x1="1266" x2="1354"><stop offset="0" stop-color="#00f"/><stop offset="0.0909" stop-color="#0400ff"/><stop offset="0.875" stop-color="#6800ff"/><stop offset="1" stop-color="#7a00ff"/></linearGradient>
<linearGradient id="g256" gradientUnits="userSpaceOnUse" x1="1268" x2="1349"><stop offset="0" stop-color="#00f"/><stop offset="0.2346" stop-color="#1600ff"/><stop offset="1" stop-color="#7200ff"/></linearGradient>
<linearGradient id="g257" gradientUnits="userSpaceOnUse" x1="1270" x2="1343"><stop offset="0" stop-color="#0100ff"/><stop offset="0.9589" stop-color="#6500ff"/><stop offset="1" stop-color="#6900ff"/></linearGradient>
<linearGradient id="g258" gradientUnits="userSpaceOnUse" x1="1273" x2="1337"><stop offset="0" stop-color="#0500ff"/><stop offset="1" stop-color="#6000ff"/></linearGradient>
<linearGradient id="g259" gradientUnits="userSpaceOnUse" x1="1276" x2="1332"><stop offset="0" stop-color="#0a00ff"/><stop offset="1" stop-color="#5900ff"/></linearGradient>
<linearGradient id="g260" gradientUnits="userSpaceOnUse" x1="1279" x2="1326"><stop offset="0" stop-color="#0f00ff"/><stop offset="1" stop-color="#5100ff"/></linearGradient>
<linearGradient id="g261" gradientUnits="userSpaceOnUse" x1="1282" x2="1320"><stop offset="0" stop-color="#1400ff"/><stop offset="1" stop-color="#4900ff"/></linearGradient>
<linearGradient id="g262" gradientUnits="userSpaceOnUse" x1="1285" x2="1315"><stop offset="0" stop-color="#1900ff"/><stop offset="1" stop-color="#4200ff"/></linearGradient>
<linearGradient id="g263" gradientUnits="userSpaceOnUse" x1="1287" x2="1309"><stop offset="0" stop-color="#1c00ff"/><stop offset="1" stop-color="#3a00ff"/></linearGradient>
<linearGradient id="g264" gradientUnits="userSpaceOnUse" x1="1290" x2="1303"><stop offset="0" stop-color="#2100ff"/><stop offset="1" stop-color="#30f"/></linearGradient>
<linearGradient id="i0" gradientUnits="userSpaceOnUse" x1="1611.5" x2="1849.5"><stop offset="0" stop-color="#b0ff00"/><stop offset="0.8151" stop-color="#fffd00"/><stop offset="1" stop-color="#ffeb00"/></linearGradient>
<linearGradient id="i1" gradientUnits="userSpaceOnUse" x1="1611.5" x2="1849.5"><stop offset="0" stop-color="#b1ff00"/><stop offset="0.8067" stop-color="#fffd00"/><stop offset="1" stop-color="#ffea00"/></linearGradient>
<linearGradient id="i2" gradientUnits="userSpaceOnUse" x1="1611.5" x2="1849.5"><stop offset="0" stop-color="#b2ff00"/><stop offset="0.7983" stop-color="#fffd00"/><stop offset="1" stop-color="#ffe900"/></linearGradient>
<linearGradient id="i3" gradientUnits="userSpaceOnUse" x1="1611.5" x2="1849.5"><stop offset="0" stop-color="#b3ff00"/><stop offset="0.7899" stop-color="#fffd00"/><stop offset="1" stop-color="#ffe900"/></linearGradient>
<linearGradient id="i4" gradientUnits="userSpaceOnUse" x1="1611.5" x2="1849.5"><stop offset="0" stop-color="#b3ff00"/><stop offset="0.7815" stop-color="#fffd00"/><stop offset="1" stop-color="#ffe800"/></linearGradient>
<linearGradient id="i5" gradientUnits="userSpaceOnUse" x1="1611.5" x2="1849.5"><stop offset="0" stop-color="#b4ff00"/><stop offset="0.7689" stop-color="#fffd00"/><stop offset="1" stop-color="#ffe700"/></linearGradient>
<linearGradient id="i6" gradientUnits="userSpaceOnUse" x1="1611.5" x2="1849.5"><stop offset="0" stop-color="#b5ff00"/><stop offset="0.7605" stop-color="#fffd00"/><stop offset="1" stop-color="#ffe600"/></linearGradient>
<linearGradient id="i7" gradientUnits="userSpaceOnUse" x1="1611.5" x2="1849.5"><stop offset="0" stop-color="#b5ff00"/><stop offset="0.7521" stop-color="#fffd00"/><stop offset="1" stop-color="#ffe500"/></linearGradient>
<linearGradient id="i8" gradientUnits="userSpaceOnUse" x1="1611.5" x2="1849.5"><stop offset="0" stop-color="#b6ff01"/><stop offset="0.7437" stop-color="#fffd00"/><stop offset="1" stop-color="#ffe400"/></linearGradient>
<linearGradient id="i9" gradientUnits="userSpaceOnUse" x1="1611.5" x2="1849.5"><stop offset="0" stop-color="#b7ff01"/><stop offset="0.7353" stop-color="#fffd00"/><stop offset="1" stop-color="#ffe300"/></linearGradient>
<linearGradient id="i10" gradientUnits="userSpaceOnUse" x1="1611.5" x2="1849.5"><stop offset="0" stop-color="#b8ff01"/><stop offset="0.7269" stop-color="#fffd00"/><stop offset="1" stop-color="#ffe200"/></linearGradient>
<linearGradient id="i11" gradientUnits="userSpaceOnUse" x1="1611.5" x2="1849.5"><stop offset="0" stop-color="#b8ff02"/><stop offset="0.7143" stop-color="#fffd00"/><stop offset="1" stop-color="#ffe200"/></linearGradient>
<linearGradient id="i12" gradientUnits="userSpaceOnUse" x1="1611.5" x2="1849.5"><stop offset="0" stop-color="#b9ff02"/><stop offset="0.7059" stop-color="#fffd00"/><stop offset="1" stop-color="#ffe100"/></linearGradient>
<linearGradient id="i13" gradientUnits="userSpaceOnUse" x1="1611.5" x2="1849.5"><stop offset="0" stop-color="#baff03"/><stop offset="0.5" stop-color="#ecff00"/><stop offset="0.6975" stop-color="#fffd00"/><stop offset="1" stop-color="#ffe000"/></linearGradient>
<linearGradient id="i14" gradientUnits="userSpaceOnUse" x1="1611.5" x2="1849.5"><stop offset="0" stop-color="#bbff03"/><stop offset="0.4118" stop-color="#e4ff00"/><stop offset="0.6891" stop-color="#fffd00"/><stop offset="1" stop-color="#ffdf00"/></linearGradient>
<linearGradient id="i15" gradientUnits="userSpaceOnUse" x1="1611.5" x2="1849.5"><stop offset="0" stop-color="#bcff04"/><stop offset="0.3782" stop-color="#e1ff00"/><stop offset="0.6807" stop-color="#fffd00"/><stop offset="1" stop-color="#ffde00"/></linearGradient>
<linearGradient id="i16" gradientUnits="userSpaceOnUse" x1="1611.5" x2="1849.5"><stop offset="0" stop-color="#bcff04"/><stop offset="0.3739" stop-color="#e2ff00"/><stop offset="0.6723" stop-color="#fffd00"/><stop offset="1" stop-color="#fd0"/></linearGradient>
<linearGradient id="i17" gradientUnits="userSpaceOnUse" x1="1611.5" x2="1849.5"><stop offset="0" stop-color="#bdff04"/><stop offset="0.3739" stop-color="#e2ff00"/><stop offset="0.6639" stop-color="#fffd00"/><stop offset="1" stop-color="#fd0"/></linearGradient>
<linearGradient id="i18" gradientUnits="userSpaceOnUse" x1="1611.5" x2="1849.5"><stop offset="0" stop-color="#beff05"/><stop offset="0.3782" stop-color="#e4ff00"/><stop offset="0.6513" stop-color="#fffd00"/><stop offset="1" stop-color="#ffdc00"/></linearGradient>
<linearGradient id="i19" gradientUnits="userSpaceOnUse" x1="1611.5" x2="1849.5"><stop offset="0" stop-color="#bfff05"/><stop offset="0.3866" stop-color="#e6ff00"/><stop offset="0.6429" stop-color="#fffd00"/><stop offset="1" stop-color="#ffdb00"/></linearGradient>
<linearGradient id="i20" gradientUnits="userSpaceOnUse" x1="1611.5" x2="1849.5"><stop offset="0" stop-color="#bfff06"/><stop offset="0.3992" stop-color="#e8ff00"/><stop offset="0.6345" stop-color="#fffd00"/><stop offset="1" stop-color="#ffda00"/></linearGradient>
<linearGradient id="i21" gradientUnits="userSpaceOnUse" x1="1611.5" x2="1849.5"><stop offset="0" stop-color="#c0ff06"/><stop offset="0.4118" stop-color="#eaff00"/><stop offset="0.6261" stop-color="#fffd00"/><stop offset="1" stop-color="#ffd900"/></linearGradient>
<linearGradient id="i22" gradientUnits="userSpaceOnUse" x1="1611.5" x2="1849.5"><stop offset="0" stop-color="#c1ff06"/><stop offset="0.4286" stop-color="#edff00"/><stop offset="0.6176" stop-color="#fffd00"/><stop offset="1" stop-color="#ffd800"/></linearGradient>
<linearGradient id="i23" gradientUnits="userSpaceOnUse" x1="1611.5" x2="1849.5"><stop offset="0" stop-color="#c2ff07"/><stop offset="0.4412" stop-color="#efff00"/><stop offset="0.6092" stop-color="#fffd00"/><stop offset="1" stop-color="#ffd800"/></linearGradient>
<linearGradient id="i24" gradientUnits="userSpaceOnUse" x1="1611.5" x2="1849.5"><stop offset="0" stop-color="#c3ff07"/><stop offset="0.458" stop-color="#f2ff00"/><stop offset="0.6008" stop-color="#fffd00"/><stop offset="1" stop-color="#ffd700"/></linearGradient>
<linearGradient id="i25" gradientUnits="userSpaceOnUse" x1="1611.5" x2="1849.5"><stop offset="0" stop-color="#c3ff08"/><stop offset="0.4748" stop-color="#f4ff00"/><stop offset="0.5924" stop-color="#fffd00"/><stop offset="1" stop-color="#ffd600"/></linearGradient>
<linearGradient id="i26" gradientUnits="userSpaceOnUse" x1="1611.5" x2="1849.5"><stop offset="0" stop-color="#c4ff08"/><stop offset="0.4916" stop-color="#f7ff00"/><stop offset="0.584" stop-color="#fffd00"/><stop offset="1" stop-color="#ffd500"/></linearGradient>
<linearGradient id="i27" gradientUnits="userSpaceOnUse" x1="1611.5" x2="1849.5"><stop offset="0" stop-color="#c5ff09"/><stop offset="0.5084" stop-color="#faff00"/><stop offset="0.584" stop-color="#fffc00"/><stop offset="1" stop-color="#ffd400"/></linearGradient>
<linearGradient id="i28" gradientUnits="userSpaceOnUse" x1="1611.5" x2="1849.5"><stop offset="0" stop-color="#c6ff09"/><stop offset="0.5252" stop-color="#fdff00"/><stop offset="0.9706" stop-color="#ffd600"/><stop offset="1" stop-color="#ffd300"/></linearGradient>
<linearGradient id="i29" gradientUnits="userSpaceOnUse" x1="1611.5" x2="1849.5"><stop offset="0" stop-color="#c7ff0a"/><stop offset="0.542" stop-color="#fffe00"/><stop offset="1" stop-color="#ffd300"/></linearGradient>
<linearGradient id="i30" gradientUnits="userSpaceOnUse" x1="1611.5" x2="1849.5"><stop offset="0" stop-color="#c7ff0a"/><stop offset="0.542" stop-color="#fffd00"/><stop offset="1" stop-color="#ffd200"/></linearGradient>
<linearGradient id="i31" gradientUnits="userSpaceOnUse" x1="1611.5" x2="1849.5"><stop offset="0" stop-color="#c8ff0a"/><stop offset="0.5336" stop-color="#fffd00"/><stop offset="1" stop-color="#ffd100"/></linearGradient>
<linearGradient id="i32" gradientUnits="userSpaceOnUse" x1="1611.5" x2="1849.5"><stop offset="0" stop-color="#c9ff0b"/><stop offset="0.5252" stop-color="#fffd00"/><stop offset="1" stop-color="#ffd000"/></linearGradient>
<linearGradient id="i33" gradientUnits="userSpaceOnUse" x1="1611.5" x2="1849.5"><stop offset="0" stop-color="#caff0b"/><stop offset="0.5168" stop-color="#fffd00"/><stop offset="1" stop-color="#ffcf00"/></linearGradient>
<linearGradient id="i34" gradientUnits="userSpaceOnUse" x1="1611.5" x2="1849.5"><stop offset="0" stop-color="#cbff0c"/><stop offset="0.5084" stop-color="#fffd00"/><stop offset="1" stop-color="#ffcf00"/></linearGradient>
<linearGradient id="i35" gradientUnits="userSpaceOnUse" x1="1611.5" x2="1849.5"><stop offset="0" stop-color="#ccff0c"/><stop offset="0.4958" stop-color="#fffd01"/><stop offset="1" stop-color="#ffce00"/></linearGradient>
<linearGradient id="i36" gradientUnits="userSpaceOnUse" x1="1611.5" x2="1849.5"><stop offset="0" stop-color="#cdff0d"/><stop offset="0.4874" stop-color="#fffd02"/><stop offset="1" stop-color="#ffcd00"/></linearGradient>
<linearGradient id="i37" gradientUnits="userSpaceOnUse" x1="1611.5" x2="1849.5"><stop offset="0" stop-color="#cdff0d"/><stop offset="0.479" stop-color="#fffd02"/><stop offset="0.9958" stop-color="#ffcd00"/><stop offset="1" stop-color="#fc0"/></linearGradient>
<linearGradient id="i38" gradientUnits="userSpaceOnUse" x1="1611.5" x2="1849.5"><stop offset="0" stop-color="#ceff0e"/><stop offset="0.4706" stop-color="#fffd03"/><stop offset="0.8571" stop-color="#ffd700"/><stop offset="1" stop-color="#ffcb00"/></linearGradient>
<linearGradient id="i39" gradientUnits="userSpaceOnUse" x1="1611.5" x2="1849.5"><stop offset="0" stop-color="#cfff0e"/><stop offset="0.4622" stop-color="#fffd04"/><stop offset="0.8025" stop-color="#ffdb00"/><stop offset="1" stop-color="#ffcb00"/></linearGradient>
<linearGradient id="i40" gradientUnits="userSpaceOnUse" x1="1611.5" x2="1849.5"><stop offset="0" stop-color="#d0ff0f"/><stop offset="0.4538" stop-color="#fffd04"/><stop offset="0.7941" stop-color="#ffdb00"/><stop offset="1" stop-color="#ffca00"/></linearGradient>
<linearGradient id="i41" gradientUnits="userSpaceOnUse" x1="1611.5" x2="1849.5"><stop offset="0" stop-color="#d1ff0f"/><stop offset="0.4412" stop-color="#fffd05"/><stop offset="0.7941" stop-color="#ffda00"/><stop offset="1" stop-color="#ffc900"/></linearGradient>
<linearGradient id="i42" gradientUnits="userSpaceOnUse" x1="1611.5" x2="1849.5"><stop offset="0" stop-color="#d2ff0f"/><stop offset="0.4328" stop-color="#fffd06"/><stop offset="0.8025" stop-color="#ffd900"/><stop offset="1" stop-color="#ffc800"/></linearGradient>
<linearGradient id="i43" gradientUnits="userSpaceOnUse" x1="1611.5" x2="1849.5"><stop offset="0" stop-color="#d3ff10"/><stop offset="0.4244" stop-color="#fffd06"/><stop offset="0.8151" stop-color="#ffd700"/><stop offset="1" stop-color="#ffc700"/></linearGradient>
<linearGradient id="i44" gradientUnits="userSpaceOnUse" x1="1611.5" x2="1849.5"><stop offset="0" stop-color="#d3ff10"/><stop offset="0.416" stop-color="#fffd07"/><stop offset="0.8277" stop-color="#ffd500"/><stop offset="1" stop-color="#ffc700"/></linearGradient>
<linearGradient id="i45" gradientUnits="userSpaceOnUse" x1="1611.5" x2="1849.5"><stop offset="0" stop-color="#d4ff11"/><stop offset="0.4076" stop-color="#fffd08"/><stop offset="0.8445" stop-color="#ffd200"/><stop offset="1" stop-color="#ffc600"/></linearGradient>
<linearGradient id="i46" gradientUnits="userSpaceOnUse" x1="1611.5" x2="1849.5"><stop offset="0" stop-color="#d5ff11"/><stop offset="0.3992" stop-color="#fffd08"/><stop offset="0.8571" stop-color="#ffd100"/><stop offset="1" stop-color="#ffc500"/></linearGradient>
<linearGradient id="i47" gradientUnits="userSpaceOnUse" x1="1611.5" x2="1849.5"><stop offset="0" stop-color="#d6ff12"/><stop offset="0.3866" stop-color="#fffd09"/><stop offset="0.8739" stop-color="#ffce00"/><stop offset="1" stop-color="#ffc400"/></linearGradient>
<linearGradient id="i48" gradientUnits="userSpaceOnUse" x1="1611.5" x2="1849.5"><stop offset="0" stop-color="#d7ff12"/><stop offset="0.3782" stop-color="#fffd0a"/><stop offset="0.8866" stop-color="#fc0"/><stop offset="1" stop-color="#ffc400"/></linearGradient>
<linearGradient id="i49" gradientUnits="userSpaceOnUse" x1="1611.5" x2="1849.5"><stop offset="0" stop-color="#d8ff13"/><stop offset="0.3697" stop-color="#fffd0a"/><stop offset="0.8782" stop-color="#fc0"/><stop offset="1" stop-color="#ffc300"/></linearGradient>
<linearGradient id="i50" gradientUnits="userSpaceOnUse" x1="1611.5" x2="1849.5"><stop offset="0" stop-color="#d9ff13"/><stop offset="0.3613" stop-color="#fffd0b"/><stop offset="0.8655" stop-color="#ffcd00"/><stop offset="1" stop-color="#ffc200"/></linearGradient>
<linearGradient id="i51" gradientUnits="userSpaceOnUse" x1="1611.5" x2="1849.5"><stop offset="0" stop-color="#daff14"/><stop offset="0.3529" stop-color="#fffd0c"/><stop offset="0.8571" stop-color="#fc0"/><stop offset="1" stop-color="#ffc100"/></linearGradient>
<linearGradient id="i52" gradientUnits="userSpaceOnUse" x1="1611.5" x2="1849.5"><stop offset="0" stop-color="#dbff14"/><stop offset="0.3445" stop-color="#fffd0c"/><stop offset="0.8487" stop-color="#fc0"/><stop offset="1" stop-color="#ffc000"/></linearGradient>
<linearGradient id="i53" gradientUnits="userSpaceOnUse" x1="1611.5" x2="1849.5"><stop offset="0" stop-color="#dcff15"/><stop offset="0.3319" stop-color="#fffd0d"/><stop offset="0.8361" stop-color="#ffcd01"/><stop offset="1" stop-color="#ffc000"/></linearGradient>
<linearGradient id="i54" gradientUnits="userSpaceOnUse" x1="1611.5" x2="1849.5"><stop offset="0" stop-color="#ddff15"/><stop offset="0.3235" stop-color="#fffd0e"/><stop offset="0.8235" stop-color="#ffcd02"/><stop offset="1" stop-color="#ffbf00"/></linearGradient>
<linearGradient id="i55" gradientUnits="userSpaceOnUse" x1="1611.5" x2="1849.5"><stop offset="0" stop-color="#ddff16"/><stop offset="0.3151" stop-color="#fffd0f"/><stop offset="0.8151" stop-color="#ffcd02"/><stop offset="1" stop-color="#ffbe00"/></linearGradient>
<linearGradient id="i56" gradientUnits="userSpaceOnUse" x1="1611.5" x2="1849.5"><stop offset="0" stop-color="#deff16"/><stop offset="0.3067" stop-color="#fffd0f"/><stop offset="0.8067" stop-color="#ffcc03"/><stop offset="1" stop-color="#ffbd00"/></linearGradient>
<linearGradient id="i57" gradientUnits="userSpaceOnUse" x1="1611.5" x2="1849.5"><stop offset="0" stop-color="#dfff17"/><stop offset="0.2983" stop-color="#fffd10"/><stop offset="0.7983" stop-color="#ffcc03"/><stop offset="1" stop-color="#ffbd00"/></linearGradient>
<linearGradient id="i58" gradientUnits="userSpaceOnUse" x1="1611.5" x2="1849.5"><stop offset="0" stop-color="#e0ff17"/><stop offset="0.2899" stop-color="#fffd11"/><stop offset="0.7899" stop-color="#ffcc04"/><stop offset="1" stop-color="#ffbc00"/></linearGradient>
<linearGradient id="i59" gradientUnits="userSpaceOnUse" x1="1611.5" x2="1849.5"><stop offset="0" stop-color="#e1ff18"/><stop offset="0.2773" stop-color="#fffd12"/><stop offset="0.7731" stop-color="#ffcd05"/><stop offset="1" stop-color="#fb0"/></linearGradient>
<linearGradient id="i60" gradientUnits="userSpaceOnUse" x1="1611.5" x2="1849.5"><stop offset="0" stop-color="#e2ff18"/><stop offset="0.2689" stop-color="#fffd12"/><stop offset="0.7647" stop-color="#ffcd05"/><stop offset="1" stop-color="#ffba00"/></linearGradient>
<linearGradient id="i61" gradientUnits="userSpaceOnUse" x1="1611.5" x2="1849.5"><stop offset="0" stop-color="#e3ff19"/><stop offset="0.2605" stop-color="#fffd13"/><stop offset="0.7563" stop-color="#ffcd06"/><stop offset="1" stop-color="#ffba01"/></linearGradient>
<linearGradient id="i62" gradientUnits="userSpaceOnUse" x1="1611.5" x2="1849.5"><stop offset="0" stop-color="#e4ff19"/><stop offset="0.2521" stop-color="#fffd14"/><stop offset="0.7479" stop-color="#ffcc06"/><stop offset="1" stop-color="#ffb901"/></linearGradient>
<linearGradient id="i63" gradientUnits="userSpaceOnUse" x1="1611.5" x2="1849.5"><stop offset="0" stop-color="#e5ff1a"/><stop offset="0.2437" stop-color="#fffd14"/><stop offset="0.7395" stop-color="#ffcc07"/><stop offset="1" stop-color="#ffb801"/></linearGradient>
<linearGradient id="i64" gradientUnits="userSpaceOnUse" x1="1611.5" x2="1849.5"><stop offset="0" stop-color="#e6ff1a"/><stop offset="0.2353" stop-color="#fffd15"/><stop offset="0.7311" stop-color="#ffcc08"/><stop offset="1" stop-color="#ffb702"/></linearGradient>
<linearGradient id="i65" gradientUnits="userSpaceOnUse" x1="1611.5" x2="1849.5"><stop offset="0" stop-color="#e7ff1b"/><stop offset="0.2227" stop-color="#fffd16"/><stop offset="0.7143" stop-color="#ffcd08"/><stop offset="1" stop-color="#ffb702"/></linearGradient>
<linearGradient id="i66" gradientUnits="userSpaceOnUse" x1="1611.5" x2="1849.5"><stop offset="0" stop-color="#e8ff1b"/><stop offset="0.2185" stop-color="#fffd16"/><stop offset="0.7101" stop-color="#ffcc09"/><stop offset="1" stop-color="#ffb602"/></linearGradient>
<clipPath id="ins"><rect x="1611.5" y="145" width="238" height="199.5"/></clipPath>
<linearGradient id="bs" x1="0" y1="0" x2="0" y2="1"><stop offset="0" stop-color="#484848"/><stop offset="0.5" stop-color="#363636"/><stop offset="1" stop-color="#282828"/></linearGradient>
<linearGradient id="bt" x1="0" y1="0" x2="0" y2="1"><stop offset="0" stop-color="#a2a2a2"/><stop offset="0.12" stop-color="#8e8e8e"/><stop offset="1" stop-color="#4c4c4c"/></linearGradient>
<linearGradient id="bsel" x1="0" y1="0" x2="0" y2="1"><stop offset="0" stop-color="#1c1c1c"/><stop offset="0.6" stop-color="#262626"/><stop offset="1" stop-color="#3a3a3a"/></linearGradient>
<linearGradient id="c1" x1="0" y1="0" x2="0" y2="1"><stop offset="0" stop-color="#a0a0a0"/><stop offset="1" stop-color="#7c7c7c"/></linearGradient>
<linearGradient id="c2" x1="0" y1="0" x2="0" y2="1"><stop offset="0" stop-color="#8a8a8a"/><stop offset="1" stop-color="#555"/></linearGradient>
<linearGradient id="c3" x1="0" y1="0" x2="0" y2="1"><stop offset="0" stop-color="#929292"/><stop offset="1" stop-color="#5c5c5c"/></linearGradient>
<linearGradient id="c4" x1="0" y1="0" x2="0" y2="1"><stop offset="0" stop-color="#a6a6a6"/><stop offset="0.5" stop-color="#868686"/><stop offset="1" stop-color="#666"/></linearGradient>
<linearGradient id="cc" x1="0" y1="0" x2="0" y2="1"><stop offset="0" stop-color="#a8a8a8"/><stop offset="1" stop-color="#6c6c6c"/></linearGradient>
<linearGradient id="sqi" x1="0" y1="0" x2="0" y2="1"><stop offset="0" stop-color="#b4b4b4"/><stop offset="1" stop-color="#8a8a8a"/></linearGradient>
</defs>
<rect x="0" y="0" width="1912" height="23" fill="#fff"/>
<g transform="translate(11,11.5) rotate(45)"><rect x="-5.5" y="-5.5" width="5.3" height="5.3" fill="#f5c400"/><rect x="0.2" y="-5.5" width="5.3" height="5.3" fill="#3fbf3f"/><rect x="-5.5" y="0.2" width="5.3" height="5.3" fill="#2f9fe8"/><rect x="0.2" y="0.2" width="5.3" height="5.3" fill="#e8305a"/></g>
<text x="23.5" y="16" font-size="12" fill="#000" textLength="384" lengthAdjust="spacingAndGlyphs" xml:space="preserve" style="white-space:pre">Calman 2021 Calman Ultimate for Business 69 Days Remaining  - Untitled</text>
<line x1="1799" y1="10.5" x2="1809" y2="10.5" stroke="#000" stroke-width="1"/>
<path d="M1844.5 7.5h8v8h-8z M1846.5 7.5v-2h8v8h-2" fill="none" stroke="#000" stroke-width="1"/>
<path d="M1890 5l10.5 10.5M1900.5 5l-10.5 10.5" stroke="#000" stroke-width="1.1" fill="none"/>
<rect x="0" y="23" width="1912" height="65.5" fill="#232323"/>
<rect x="190" y="36" width="1722" height="4" fill="url(#rb)" filter="url(#bl)"/>
<path d="M0 23h182v25.5a3.5 3.5 0 0 1-3.5 3.5h-175a3.5 3.5 0 0 1-3.5-3.5z" fill="url(#cal)"/>
<path d="M1 51.5h180" stroke="#a00c0c" stroke-width="1" opacity=".6"/>
<g transform="translate(34.3,37.5) rotate(45)"><rect x="-8.3" y="-8.3" width="16.6" height="16.6" rx="2" fill="#fff"/><rect x="-5.7" y="-5.7" width="11.4" height="11.4" fill="#d81c1c"/><path d="M-4.7 -4.7h4.2v4.2h-4.2zM.5 -4.7h4.2v4.2h-4.2zM-4.700 .5h4.200v4.200h-4.200zM.5 .5h4.200v4.200h-4.200z" fill="#fff"/></g>
<text x="49.5" y="44.6" font-size="27" fill="#fff" textLength="85.5" lengthAdjust="spacingAndGlyphs">calman</text>
<circle cx="166" cy="38" r="9.5" fill="#c81414"/><path d="M161.5 36h9l-4.5 5.2z" fill="#fff"/>
<path d="M0 58h23a4 4 0 0 1 4 4v20a4 4 0 0 1-4 4h-23z" fill="url(#pb)" stroke="#aaa" stroke-width="1"/>
<circle cx="13" cy="72" r="10" fill="#5e5e5e" opacity=".8"/><path d="M10 65.5l7 6.5l-7 6.5z" fill="#fff"/>
<path d="M29.5 88.5v-26a4 4 0 0 1 4-4h83a4 4 0 0 1 4 4v26z" fill="url(#tab)" stroke="#6a6a6a" stroke-width="1"/>
<line x1="87.5" y1="59" x2="87.5" y2="88" stroke="#666" stroke-width="1"/>
<text x="35.5" y="78" font-size="12.5" fill="#e6e6e6" textLength="46" lengthAdjust="spacingAndGlyphs">History 1</text>
<circle cx="103" cy="74.5" r="8.5" fill="#333"/>
<text x="103" y="79" font-size="13" fill="#777" text-anchor="middle">+</text>
<path d="M1349.5 88v-26a4 4 0 0 1 4-4h135a4 4 0 0 1 4 4v26z" fill="url(#pn)"/>
<path d="M1349.5 88v-26a4 4 0 0 1 4-4h2v30z" fill="#22dd22"/>
<text x="1358.5" y="69.7" font-size="11.5" fill="#f2f2f2" textLength="65.5" lengthAdjust="spacingAndGlyphs">X-Rite i1Pro 2</text>
<text x="1358.5" y="83.7" font-size="11.5" fill="#f2f2f2" textLength="56" lengthAdjust="spacingAndGlyphs">Direct View</text>
<circle cx="1437" cy="72.8" r="9" fill="#4a4a4a" opacity=".75"/><path d="M1432.8 70.5h8.4l-4.2 5z" fill="#fff"/>
<line x1="1456.5" y1="60" x2="1456.5" y2="88" stroke="#444" stroke-width="1"/>
<line x1="1457.5" y1="60" x2="1457.5" y2="88" stroke="#777" stroke-width="1"/>
<circle cx="1477.3" cy="72.8" r="12.6" fill="#0000f0" stroke="#fff" stroke-width="1.2"/>
<text x="1477.3" y="76.6" font-size="10.5" fill="#fff" text-anchor="middle" textLength="18" lengthAdjust="spacingAndGlyphs" font-weight="bold">237</text>
<path d="M1498.5 88v-26a4 4 0 0 1 4-4h200a4 4 0 0 1 4 4v26z" fill="url(#pn)"/>
<path d="M1498.5 88v-26a4 4 0 0 1 4-4h2v30z" fill="#22dd22"/>
<text x="1507.5" y="69.7" font-size="11.5" fill="#f2f2f2" textLength="170" lengthAdjust="spacingAndGlyphs">CalMAN Client 3 Pattern Generator</text>
<circle cx="1690.5" cy="72.8" r="9" fill="#4a4a4a" opacity=".75"/><path d="M1686.3 70.5h8.4l-4.2 5z" fill="#fff"/>
<path d="M1713 88v-26a4 4 0 0 1 4-4h135a4 4 0 0 1 4 4v26z" fill="url(#pn)"/>
<path d="M1713 88v-26a4 4 0 0 1 4-4h2v30z" fill="#e8e81a"/>
<text x="1722" y="69.7" font-size="11.5" fill="#f2f2f2" textLength="105.5" lengthAdjust="spacingAndGlyphs">Direct Display Control</text>
<circle cx="1840" cy="72.8" r="9" fill="#4a4a4a" opacity=".75"/><path d="M1835.8 70.5h8.4l-4.2 5z" fill="#fff"/>
<rect x="1859.5" y="58.5" width="32" height="28.5" rx="4" fill="url(#gb)" stroke="#b5b5b5" stroke-width="1"/>
<circle cx="1876" cy="72.5" r="10" fill="#666" opacity=".7"/>
<g transform="translate(1876,72.5)" fill="none" stroke="#ddd"><circle r="4.2" stroke-width="2.4"/><g stroke-width="2.2"><path d="M0 -7.5v2.2M0 7.5v-2.2M-7.5 0h2.2M7.5 0h-2.2M-5.3 -5.3l1.6 1.6M5.3 5.3l-1.6 -1.6M5.3 -5.3l-1.6 1.6M-5.3 5.3l1.6 -1.6"/></g></g>
<path d="M1912 58.5h-15a4 4 0 0 0-4 4v20.500a4 4 0 0 0 4 4h15z" fill="url(#gb)" stroke="#b5b5b5" stroke-width="1"/>
<circle cx="1906" cy="72.5" r="9" fill="#666" opacity=".7"/><path d="M1908 66.500l-7 6l7 6z" fill="#fff"/>
<rect x="0" y="88.5" width="1912" height="889" fill="#333"/>
<rect x="0" y="88.5" width="1.5" height="889" fill="#222"/>
<text x="77" y="152" font-size="43.5" fill="#f2f2f2" textLength="356.5" lengthAdjust="spacingAndGlyphs">Saturation Sweeps</text>
<text x="249" y="207" font-size="16" fill="#d9d9d4" text-anchor="middle" textLength="86.5" lengthAdjust="spacingAndGlyphs">DeltaE 2000</text>
<rect x="99" y="212" width="339" height="450" fill="#252525"/>
<line x1="144.24" y1="212" x2="144.24" y2="662" stroke="#a6a6a6" stroke-width="1.6"/>
<line x1="189.48" y1="212" x2="189.48" y2="662" stroke="#a6a6a6" stroke-width="1.6"/>
<line x1="234.72" y1="212" x2="234.72" y2="662" stroke="#a6a6a6" stroke-width="1.6"/>
<line x1="279.96" y1="212" x2="279.96" y2="662" stroke="#a6a6a6" stroke-width="1.6"/>
<line x1="325.2" y1="212" x2="325.2" y2="662" stroke="#a6a6a6" stroke-width="1.6"/>
<line x1="370.44" y1="212" x2="370.44" y2="662" stroke="#a6a6a6" stroke-width="1.6"/>
<line x1="415.68" y1="212" x2="415.68" y2="662" stroke="#a6a6a6" stroke-width="1.6"/>
<line x1="92" y1="212" x2="438.8" y2="212" stroke="#a6a6a6" stroke-width="2"/>
<line x1="99" y1="211" x2="99" y2="668.5" stroke="#a6a6a6" stroke-width="2"/>
<line x1="92" y1="662" x2="438.8" y2="662" stroke="#a6a6a6" stroke-width="2"/>
<line x1="438" y1="211" x2="438" y2="663" stroke="#a6a6a6" stroke-width="2"/>
<line x1="92" y1="287.5" x2="99" y2="287.5" stroke="#e0e0e0" stroke-width="2"/>
<line x1="92" y1="363" x2="99" y2="363" stroke="#e0e0e0" stroke-width="2"/>
<line x1="92" y1="437.5" x2="99" y2="437.5" stroke="#e0e0e0" stroke-width="2"/>
<line x1="92" y1="512.5" x2="99" y2="512.5" stroke="#e0e0e0" stroke-width="2"/>
<line x1="92" y1="587" x2="99" y2="587" stroke="#e0e0e0" stroke-width="2"/>
<line x1="92" y1="212" x2="99" y2="212" stroke="#f0f0f0" stroke-width="2"/>
<line x1="92" y1="662" x2="99" y2="662" stroke="#f0f0f0" stroke-width="2"/>
<line x1="144.24" y1="662" x2="144.24" y2="668.5" stroke="#e0e0e0" stroke-width="2"/>
<line x1="189.48" y1="662" x2="189.48" y2="668.5" stroke="#e0e0e0" stroke-width="2"/>
<line x1="234.72" y1="662" x2="234.72" y2="668.5" stroke="#e0e0e0" stroke-width="2"/>
<line x1="279.96" y1="662" x2="279.96" y2="668.5" stroke="#e0e0e0" stroke-width="2"/>
<line x1="325.2" y1="662" x2="325.2" y2="668.5" stroke="#e0e0e0" stroke-width="2"/>
<line x1="370.44" y1="662" x2="370.44" y2="668.5" stroke="#e0e0e0" stroke-width="2"/>
<line x1="415.68" y1="662" x2="415.68" y2="668.5" stroke="#e0e0e0" stroke-width="2"/>
<text x="98.5" y="686.5" font-size="16" fill="#d9d9d4" text-anchor="middle" textLength="8.6" lengthAdjust="spacingAndGlyphs">0</text>
<text x="143.74" y="686.5" font-size="16" fill="#d9d9d4" text-anchor="middle" textLength="8.6" lengthAdjust="spacingAndGlyphs">2</text>
<text x="188.98" y="686.5" font-size="16" fill="#d9d9d4" text-anchor="middle" textLength="8.6" lengthAdjust="spacingAndGlyphs">4</text>
<text x="234.22" y="686.5" font-size="16" fill="#d9d9d4" text-anchor="middle" textLength="8.6" lengthAdjust="spacingAndGlyphs">6</text>
<text x="279.46" y="686.5" font-size="16" fill="#d9d9d4" text-anchor="middle" textLength="8.6" lengthAdjust="spacingAndGlyphs">8</text>
<text x="324.7" y="686.5" font-size="16" fill="#d9d9d4" text-anchor="middle" textLength="17.5" lengthAdjust="spacingAndGlyphs">10</text>
<text x="369.94" y="686.5" font-size="16" fill="#d9d9d4" text-anchor="middle" textLength="17.5" lengthAdjust="spacingAndGlyphs">12</text>
<text x="415.18" y="686.5" font-size="16" fill="#d9d9d4" text-anchor="middle" textLength="17.5" lengthAdjust="spacingAndGlyphs">14</text>
<text x="97.5" y="256.7" font-size="16" fill="#d9d9d4" text-anchor="end" textLength="39" lengthAdjust="spacingAndGlyphs">100%</text>
<text x="97.5" y="330.7" font-size="16" fill="#d9d9d4" text-anchor="end" textLength="30.5" lengthAdjust="spacingAndGlyphs">80%</text>
<text x="97.5" y="405.7" font-size="16" fill="#d9d9d4" text-anchor="end" textLength="30.5" lengthAdjust="spacingAndGlyphs">60%</text>
<text x="97.5" y="481.2" font-size="16" fill="#d9d9d4" text-anchor="end" textLength="30.5" lengthAdjust="spacingAndGlyphs">40%</text>
<text x="97.5" y="555.7" font-size="16" fill="#d9d9d4" text-anchor="end" textLength="30.5" lengthAdjust="spacingAndGlyphs">20%</text>
<text x="97.5" y="630.7" font-size="16" fill="#d9d9d4" text-anchor="end" textLength="26.5" lengthAdjust="spacingAndGlyphs">100</text>
<rect x="100" y="219.4" width="18.5" height="9.2" fill="#000"/>
<rect x="100" y="220.3" width="16.7" height="6.6" fill="url(#b0)"/>
<rect x="100" y="228.08" width="14.4" height="9.2" fill="#000"/>
<rect x="100" y="228.98" width="12.6" height="6.6" fill="url(#b1)"/>
<rect x="100" y="236.76" width="15.2" height="9.2" fill="#000"/>
<rect x="100" y="237.66" width="13.4" height="6.6" fill="url(#b2)"/>
<rect x="100" y="245.44" width="12.4" height="9.2" fill="#000"/>
<rect x="100" y="246.34" width="10.6" height="6.6" fill="url(#b3)"/>
<rect x="100" y="254.12" width="15.2" height="9.2" fill="#000"/>
<rect x="100" y="255.02" width="13.4" height="6.6" fill="url(#b4)"/>
<rect x="100" y="262.8" width="15.2" height="9.2" fill="#000"/>
<rect x="100" y="263.7" width="13.4" height="6.6" fill="url(#b5)"/>
<rect x="100" y="294.9" width="39.7" height="9.2" fill="#000"/>
<rect x="100" y="295.8" width="37.9" height="6.6" fill="url(#b6)"/>
<rect x="100" y="303.58" width="17.2" height="9.2" fill="#000"/>
<rect x="100" y="304.48" width="15.4" height="6.6" fill="url(#b7)"/>
<rect x="100" y="312.26" width="15.5" height="9.2" fill="#000"/>
<rect x="100" y="313.16" width="13.7" height="6.6" fill="url(#b8)"/>
<rect x="100" y="320.94" width="13.9" height="9.2" fill="#000"/>
<rect x="100" y="321.84" width="12.1" height="6.6" fill="url(#b9)"/>
<rect x="100" y="329.62" width="18.7" height="9.2" fill="#000"/>
<rect x="100" y="330.52" width="16.9" height="6.6" fill="url(#b10)"/>
<rect x="100" y="338.3" width="15.4" height="9.2" fill="#000"/>
<rect x="100" y="339.2" width="13.6" height="6.6" fill="url(#b11)"/>
<rect x="100" y="370.4" width="17.7" height="9.2" fill="#000"/>
<rect x="100" y="371.3" width="15.9" height="6.6" fill="url(#b12)"/>
<rect x="100" y="379.08" width="15.4" height="9.2" fill="#000"/>
<rect x="100" y="379.98" width="13.6" height="6.6" fill="url(#b13)"/>
<rect x="100" y="387.76" width="13.9" height="9.2" fill="#000"/>
<rect x="100" y="388.66" width="12.1" height="6.6" fill="url(#b14)"/>
<rect x="100" y="396.44" width="13.9" height="9.2" fill="#000"/>
<rect x="100" y="397.34" width="12.1" height="6.6" fill="url(#b15)"/>
<rect x="100" y="405.12" width="18.7" height="9.2" fill="#000"/>
<rect x="100" y="406.02" width="16.9" height="6.6" fill="url(#b16)"/>
<rect x="100" y="413.8" width="12.5" height="9.2" fill="#000"/>
<rect x="100" y="414.7" width="10.7" height="6.6" fill="url(#b17)"/>
<rect x="100" y="444.9" width="18.2" height="9.2" fill="#000"/>
<rect x="100" y="445.8" width="16.4" height="6.6" fill="url(#b18)"/>
<rect x="100" y="453.58" width="12" height="9.2" fill="#000"/>
<rect x="100" y="454.48" width="10.2" height="6.6" fill="url(#b19)"/>
<rect x="100" y="462.26" width="12" height="9.2" fill="#000"/>
<rect x="100" y="463.16" width="10.2" height="6.6" fill="url(#b20)"/>
<rect x="100" y="470.94" width="12" height="9.2" fill="#000"/>
<rect x="100" y="471.84" width="10.2" height="6.6" fill="url(#b21)"/>
<rect x="100" y="479.62" width="18.2" height="9.2" fill="#000"/>
<rect x="100" y="480.52" width="16.4" height="6.6" fill="url(#b22)"/>
<rect x="100" y="488.3" width="10.8" height="9.2" fill="#000"/>
<rect x="100" y="489.2" width="9" height="6.6" fill="url(#b23)"/>
<rect x="100" y="519.9" width="16.8" height="9.2" fill="#000"/>
<rect x="100" y="520.8" width="15" height="6.6" fill="url(#b24)"/>
<rect x="100" y="528.58" width="10.8" height="9.2" fill="#000"/>
<rect x="100" y="529.48" width="9" height="6.6" fill="url(#b25)"/>
<rect x="100" y="537.26" width="18.2" height="9.2" fill="#000"/>
<rect x="100" y="538.16" width="16.4" height="6.6" fill="url(#b26)"/>
<rect x="100" y="545.94" width="13.4" height="9.2" fill="#000"/>
<rect x="100" y="546.84" width="11.6" height="6.6" fill="url(#b27)"/>
<rect x="100" y="554.62" width="18.2" height="9.2" fill="#000"/>
<rect x="100" y="555.52" width="16.4" height="6.6" fill="url(#b28)"/>
<rect x="100" y="563.3" width="15" height="9.2" fill="#000"/>
<rect x="100" y="564.2" width="13.2" height="6.6" fill="url(#b29)"/>
<rect x="100" y="647" width="11.2" height="9" fill="#000"/>
<rect x="100" y="648.2" width="9.4" height="6.2" fill="url(#bw)"/>
<text x="68" y="775" font-size="29.2" fill="#f2f2f2" textLength="240" lengthAdjust="spacingAndGlyphs">Current Reading</text>
<text x="68" y="822" font-size="26" fill="#f2f2f2" textLength="111" lengthAdjust="spacingAndGlyphs">x: 0,4217</text>
<text x="68" y="866.3" font-size="26" fill="#f2f2f2" textLength="98" lengthAdjust="spacingAndGlyphs">y: 0,509</text>
<text x="68" y="910.7" font-size="26" fill="#f2f2f2" textLength="105.5" lengthAdjust="spacingAndGlyphs">fL: 67,84</text>
<text x="68" y="954.5" font-size="26" fill="#f2f2f2" textLength="174" lengthAdjust="spacingAndGlyphs">cd/m²: 232,45</text>
<text x="559.8" y="133" font-size="16" fill="#d9d9d4" text-anchor="middle" textLength="46.5" lengthAdjust="spacingAndGlyphs">DeltaL</text>
<rect x="495.3" y="138" width="158" height="345" fill="#252525"/>
<line x1="495.3" y1="197" x2="653.3" y2="197" stroke="#a6a6a6" stroke-width="1.6"/>
<line x1="495.3" y1="253" x2="653.3" y2="253" stroke="#a6a6a6" stroke-width="1.6"/>
<line x1="495.3" y1="311" x2="653.3" y2="311" stroke="#a6a6a6" stroke-width="1.6"/>
<line x1="495.3" y1="369" x2="653.3" y2="369" stroke="#a6a6a6" stroke-width="1.6"/>
<line x1="495.3" y1="427" x2="653.3" y2="427" stroke="#a6a6a6" stroke-width="1.6"/>
<line x1="490.8" y1="138" x2="654.3" y2="138" stroke="#a6a6a6" stroke-width="2"/>
<line x1="490.8" y1="483" x2="654.3" y2="483" stroke="#a6a6a6" stroke-width="2"/>
<line x1="495.3" y1="137" x2="495.3" y2="490" stroke="#a6a6a6" stroke-width="2"/>
<line x1="653.3" y1="137" x2="653.3" y2="490" stroke="#a6a6a6" stroke-width="2"/>
<line x1="490.3" y1="138" x2="495.3" y2="138" stroke="#e0e0e0" stroke-width="2"/>
<line x1="490.3" y1="197" x2="495.3" y2="197" stroke="#e0e0e0" stroke-width="2"/>
<line x1="490.3" y1="253" x2="495.3" y2="253" stroke="#e0e0e0" stroke-width="2"/>
<line x1="490.3" y1="311" x2="495.3" y2="311" stroke="#e0e0e0" stroke-width="2"/>
<line x1="490.3" y1="369" x2="495.3" y2="369" stroke="#e0e0e0" stroke-width="2"/>
<line x1="490.3" y1="427" x2="495.3" y2="427" stroke="#e0e0e0" stroke-width="2"/>
<line x1="490.3" y1="483" x2="495.3" y2="483" stroke="#e0e0e0" stroke-width="2"/>
<line x1="495.3" y1="483" x2="495.3" y2="490" stroke="#e8e8e8" stroke-width="2"/>
<line x1="653.3" y1="483" x2="653.3" y2="490" stroke="#e8e8e8" stroke-width="2"/>
<text x="490.3" y="145.2" font-size="16" fill="#d9d9d4" text-anchor="end" textLength="17.5" lengthAdjust="spacingAndGlyphs">15</text>
<text x="490.3" y="204.2" font-size="16" fill="#d9d9d4" text-anchor="end" textLength="17.5" lengthAdjust="spacingAndGlyphs">10</text>
<text x="490.3" y="260.2" font-size="16" fill="#d9d9d4" text-anchor="end" textLength="8.7" lengthAdjust="spacingAndGlyphs">5</text>
<text x="490.3" y="318.2" font-size="16" fill="#d9d9d4" text-anchor="end" textLength="8.7" lengthAdjust="spacingAndGlyphs">0</text>
<text x="490.3" y="376.2" font-size="16" fill="#d9d9d4" text-anchor="end" textLength="14" lengthAdjust="spacingAndGlyphs">-5</text>
<text x="490.3" y="434.2" font-size="16" fill="#d9d9d4" text-anchor="end" textLength="23" lengthAdjust="spacingAndGlyphs">-10</text>
<text x="490.3" y="490.2" font-size="16" fill="#d9d9d4" text-anchor="end" textLength="23" lengthAdjust="spacingAndGlyphs">-15</text>
<text x="574.3" y="501.5" font-size="16" fill="#d9d9d4" text-anchor="middle" textLength="39" lengthAdjust="spacingAndGlyphs">100%</text>
<rect x="512.1" y="306.5" width="126" height="5" fill="#000"/>
<rect x="513.1" y="307.5" width="124" height="3" fill="url(#ybar2)"/>
<text x="774.8" y="133" font-size="16" fill="#d9d9d4" text-anchor="middle" textLength="48" lengthAdjust="spacingAndGlyphs">DeltaC</text>
<rect x="710.3" y="138" width="158" height="345" fill="#252525"/>
<line x1="710.3" y1="197" x2="868.3" y2="197" stroke="#a6a6a6" stroke-width="1.6"/>
<line x1="710.3" y1="253" x2="868.3" y2="253" stroke="#a6a6a6" stroke-width="1.6"/>
<line x1="710.3" y1="311" x2="868.3" y2="311" stroke="#a6a6a6" stroke-width="1.6"/>
<line x1="710.3" y1="369" x2="868.3" y2="369" stroke="#a6a6a6" stroke-width="1.6"/>
<line x1="710.3" y1="427" x2="868.3" y2="427" stroke="#a6a6a6" stroke-width="1.6"/>
<line x1="705.8" y1="138" x2="869.3" y2="138" stroke="#a6a6a6" stroke-width="2"/>
<line x1="705.8" y1="483" x2="869.3" y2="483" stroke="#a6a6a6" stroke-width="2"/>
<line x1="710.3" y1="137" x2="710.3" y2="490" stroke="#a6a6a6" stroke-width="2"/>
<line x1="868.3" y1="137" x2="868.3" y2="490" stroke="#a6a6a6" stroke-width="2"/>
<line x1="705.3" y1="138" x2="710.3" y2="138" stroke="#e0e0e0" stroke-width="2"/>
<line x1="705.3" y1="197" x2="710.3" y2="197" stroke="#e0e0e0" stroke-width="2"/>
<line x1="705.3" y1="253" x2="710.3" y2="253" stroke="#e0e0e0" stroke-width="2"/>
<line x1="705.3" y1="311" x2="710.3" y2="311" stroke="#e0e0e0" stroke-width="2"/>
<line x1="705.3" y1="369" x2="710.3" y2="369" stroke="#e0e0e0" stroke-width="2"/>
<line x1="705.3" y1="427" x2="710.3" y2="427" stroke="#e0e0e0" stroke-width="2"/>
<line x1="705.3" y1="483" x2="710.3" y2="483" stroke="#e0e0e0" stroke-width="2"/>
<line x1="710.3" y1="483" x2="710.3" y2="490" stroke="#e8e8e8" stroke-width="2"/>
<line x1="868.3" y1="483" x2="868.3" y2="490" stroke="#e8e8e8" stroke-width="2"/>
<text x="705.3" y="145.2" font-size="16" fill="#d9d9d4" text-anchor="end" textLength="17.5" lengthAdjust="spacingAndGlyphs">15</text>
<text x="705.3" y="204.2" font-size="16" fill="#d9d9d4" text-anchor="end" textLength="17.5" lengthAdjust="spacingAndGlyphs">10</text>
<text x="705.3" y="260.2" font-size="16" fill="#d9d9d4" text-anchor="end" textLength="8.7" lengthAdjust="spacingAndGlyphs">5</text>
<text x="705.3" y="318.2" font-size="16" fill="#d9d9d4" text-anchor="end" textLength="8.7" lengthAdjust="spacingAndGlyphs">0</text>
<text x="705.3" y="376.2" font-size="16" fill="#d9d9d4" text-anchor="end" textLength="14" lengthAdjust="spacingAndGlyphs">-5</text>
<text x="705.3" y="434.2" font-size="16" fill="#d9d9d4" text-anchor="end" textLength="23" lengthAdjust="spacingAndGlyphs">-10</text>
<text x="705.3" y="490.2" font-size="16" fill="#d9d9d4" text-anchor="end" textLength="23" lengthAdjust="spacingAndGlyphs">-15</text>
<text x="789.3" y="501.5" font-size="16" fill="#d9d9d4" text-anchor="middle" textLength="39" lengthAdjust="spacingAndGlyphs">100%</text>
<rect x="727.1" y="283.3" width="126" height="28.2" fill="#000"/>
<rect x="728.1" y="284.3" width="124" height="26.2" fill="url(#ybar)"/>
<text x="989.8" y="133" font-size="16" fill="#d9d9d4" text-anchor="middle" textLength="49" lengthAdjust="spacingAndGlyphs">DeltaH</text>
<rect x="925.3" y="138" width="158" height="345" fill="#252525"/>
<line x1="925.3" y1="197" x2="1083.3" y2="197" stroke="#a6a6a6" stroke-width="1.6"/>
<line x1="925.3" y1="253" x2="1083.3" y2="253" stroke="#a6a6a6" stroke-width="1.6"/>
<line x1="925.3" y1="311" x2="1083.3" y2="311" stroke="#a6a6a6" stroke-width="1.6"/>
<line x1="925.3" y1="369" x2="1083.3" y2="369" stroke="#a6a6a6" stroke-width="1.6"/>
<line x1="925.3" y1="427" x2="1083.3" y2="427" stroke="#a6a6a6" stroke-width="1.6"/>
<line x1="920.8" y1="138" x2="1084.3" y2="138" stroke="#a6a6a6" stroke-width="2"/>
<line x1="920.8" y1="483" x2="1084.3" y2="483" stroke="#a6a6a6" stroke-width="2"/>
<line x1="925.3" y1="137" x2="925.3" y2="490" stroke="#a6a6a6" stroke-width="2"/>
<line x1="1083.3" y1="137" x2="1083.3" y2="490" stroke="#a6a6a6" stroke-width="2"/>
<line x1="920.3" y1="138" x2="925.3" y2="138" stroke="#e0e0e0" stroke-width="2"/>
<line x1="920.3" y1="197" x2="925.3" y2="197" stroke="#e0e0e0" stroke-width="2"/>
<line x1="920.3" y1="253" x2="925.3" y2="253" stroke="#e0e0e0" stroke-width="2"/>
<line x1="920.3" y1="311" x2="925.3" y2="311" stroke="#e0e0e0" stroke-width="2"/>
<line x1="920.3" y1="369" x2="925.3" y2="369" stroke="#e0e0e0" stroke-width="2"/>
<line x1="920.3" y1="427" x2="925.3" y2="427" stroke="#e0e0e0" stroke-width="2"/>
<line x1="920.3" y1="483" x2="925.3" y2="483" stroke="#e0e0e0" stroke-width="2"/>
<line x1="925.3" y1="483" x2="925.3" y2="490" stroke="#e8e8e8" stroke-width="2"/>
<line x1="1083.3" y1="483" x2="1083.3" y2="490" stroke="#e8e8e8" stroke-width="2"/>
<text x="920.3" y="145.2" font-size="16" fill="#d9d9d4" text-anchor="end" textLength="17.5" lengthAdjust="spacingAndGlyphs">15</text>
<text x="920.3" y="204.2" font-size="16" fill="#d9d9d4" text-anchor="end" textLength="17.5" lengthAdjust="spacingAndGlyphs">10</text>
<text x="920.3" y="260.2" font-size="16" fill="#d9d9d4" text-anchor="end" textLength="8.7" lengthAdjust="spacingAndGlyphs">5</text>
<text x="920.3" y="318.2" font-size="16" fill="#d9d9d4" text-anchor="end" textLength="8.7" lengthAdjust="spacingAndGlyphs">0</text>
<text x="920.3" y="376.2" font-size="16" fill="#d9d9d4" text-anchor="end" textLength="14" lengthAdjust="spacingAndGlyphs">-5</text>
<text x="920.3" y="434.2" font-size="16" fill="#d9d9d4" text-anchor="end" textLength="23" lengthAdjust="spacingAndGlyphs">-10</text>
<text x="920.3" y="490.2" font-size="16" fill="#d9d9d4" text-anchor="end" textLength="23" lengthAdjust="spacingAndGlyphs">-15</text>
<text x="1004.3" y="501.5" font-size="16" fill="#d9d9d4" text-anchor="middle" textLength="39" lengthAdjust="spacingAndGlyphs">100%</text>
<rect x="942.1" y="310.5" width="126" height="4" fill="#000"/>
<rect x="943.1" y="311.5" width="124" height="2" fill="url(#ybar2)"/>
<rect x="460" y="519" width="643.5" height="177" fill="#000"/>
<rect x="482" y="526" width="109" height="145" fill="#f4f4f0"/>
<rect x="483.2" y="527.2" width="106.6" height="72" fill="#c3c3a8"/>
<rect x="483.2" y="598.7" width="106.6" height="71.1" fill="#c2c2a7"/>
<text x="536.5" y="686.5" font-size="13.5" fill="#fff" text-anchor="middle" textLength="25" lengthAdjust="spacingAndGlyphs" stroke="#fff" stroke-width=".35">20%</text>
<rect x="608" y="526" width="109" height="145" fill="#f4f4f0"/>
<rect x="609.2" y="527.2" width="106.6" height="72" fill="#c3c38a"/>
<rect x="609.2" y="598.7" width="106.6" height="71.1" fill="#c2c189"/>
<text x="662.5" y="686.5" font-size="13.5" fill="#fff" text-anchor="middle" textLength="25" lengthAdjust="spacingAndGlyphs" stroke="#fff" stroke-width=".35">40%</text>
<rect x="734" y="526" width="109" height="145" fill="#f4f4f0"/>
<rect x="735.2" y="527.2" width="106.6" height="72" fill="#c3c36e"/>
<rect x="735.2" y="598.7" width="106.6" height="71.1" fill="#c1c06c"/>
<text x="788.5" y="686.5" font-size="13.5" fill="#fff" text-anchor="middle" textLength="25" lengthAdjust="spacingAndGlyphs" stroke="#fff" stroke-width=".35">60%</text>
<rect x="860" y="526" width="109" height="145" fill="#f4f4f0"/>
<rect x="861.2" y="527.2" width="106.6" height="72" fill="#c3c248"/>
<rect x="861.2" y="598.7" width="106.6" height="71.1" fill="#c2c04a"/>
<text x="914.5" y="686.5" font-size="13.5" fill="#fff" text-anchor="middle" textLength="25" lengthAdjust="spacingAndGlyphs" stroke="#fff" stroke-width=".35">80%</text>
<rect x="986" y="526" width="109" height="145" fill="#f4f4f0"/>
<rect x="987.2" y="527.2" width="106.6" height="72" fill="#c6c300"/>
<rect x="987.2" y="598.7" width="106.6" height="71.1" fill="#c5c209"/>
<text x="1040.5" y="686.5" font-size="13.5" fill="#fff" text-anchor="middle" textLength="32.5" lengthAdjust="spacingAndGlyphs" stroke="#fff" stroke-width=".35">100%</text>
<g transform="translate(474.5,558.5) rotate(-90)">
<text x="0" y="0" font-size="14" fill="#fff" text-anchor="middle" textLength="37.5" lengthAdjust="spacingAndGlyphs" stroke="#fff" stroke-width=".3">Actual</text>
</g>
<g transform="translate(474.5,639) rotate(-90)">
<text x="0" y="0" font-size="14" fill="#fff" text-anchor="middle" textLength="37.5" lengthAdjust="spacingAndGlyphs" stroke="#fff" stroke-width=".3">Target</text>
</g>
<text x="559.8" y="747" font-size="16" fill="#d9d9d4" text-anchor="middle" textLength="90.5" lengthAdjust="spacingAndGlyphs">RGB Balance</text>
<rect x="437" y="754" width="275" height="195" fill="#252525"/>
<line x1="437" y1="803.5" x2="712" y2="803.5" stroke="#a6a6a6" stroke-width="1.6"/>
<line x1="437" y1="852" x2="712" y2="852" stroke="#a6a6a6" stroke-width="1.6"/>
<line x1="437" y1="901" x2="712" y2="901" stroke="#a6a6a6" stroke-width="1.6"/>
<line x1="431.5" y1="754" x2="713" y2="754" stroke="#a6a6a6" stroke-width="2"/>
<line x1="431.5" y1="949" x2="713" y2="949" stroke="#a6a6a6" stroke-width="2"/>
<line x1="437" y1="753" x2="437" y2="955.5" stroke="#a6a6a6" stroke-width="2"/>
<line x1="712" y1="753" x2="712" y2="955.5" stroke="#a6a6a6" stroke-width="2"/>
<line x1="431.5" y1="754" x2="437" y2="754" stroke="#e0e0e0" stroke-width="2"/>
<line x1="431.5" y1="803.5" x2="437" y2="803.5" stroke="#e0e0e0" stroke-width="2"/>
<line x1="431.5" y1="852" x2="437" y2="852" stroke="#e0e0e0" stroke-width="2"/>
<line x1="431.5" y1="901" x2="437" y2="901" stroke="#e0e0e0" stroke-width="2"/>
<line x1="431.5" y1="949" x2="437" y2="949" stroke="#e0e0e0" stroke-width="2"/>
<line x1="437" y1="949" x2="437" y2="955.5" stroke="#e8e8e8" stroke-width="2"/>
<line x1="712" y1="949" x2="712" y2="955.5" stroke="#e8e8e8" stroke-width="2"/>
<text x="431.5" y="761.7" font-size="16" fill="#d9d9d4" text-anchor="end" textLength="17.5" lengthAdjust="spacingAndGlyphs">20</text>
<text x="431.5" y="811.2" font-size="16" fill="#d9d9d4" text-anchor="end" textLength="17.5" lengthAdjust="spacingAndGlyphs">10</text>
<text x="431.5" y="859.7" font-size="16" fill="#d9d9d4" text-anchor="end" textLength="8.7" lengthAdjust="spacingAndGlyphs">0</text>
<text x="431.5" y="908.7" font-size="16" fill="#d9d9d4" text-anchor="end" textLength="23" lengthAdjust="spacingAndGlyphs">-10</text>
<text x="431.5" y="956.7" font-size="16" fill="#d9d9d4" text-anchor="end" textLength="23" lengthAdjust="spacingAndGlyphs">-20</text>
<text x="574.5" y="967.5" font-size="16" fill="#d9d9d4" text-anchor="middle" textLength="39" lengthAdjust="spacingAndGlyphs">100%</text>
<rect x="464.5" y="844.5" width="74" height="8" fill="#000"/>
<rect x="465.8" y="845.8" width="71.4" height="5.6" fill="url(#rbar)"/>
<rect x="538" y="846.3" width="74" height="6.2" fill="#000"/>
<rect x="539.2" y="847.5" width="71.6" height="4" fill="url(#gbar)"/>
<rect x="612.3" y="851.5" width="74" height="91.5" fill="#000"/>
<rect x="613.5" y="852.7" width="71.6" height="89.1" fill="url(#bbar)"/>
<rect x="736.5" y="728" width="785" height="33" fill="url(#th)"/>
<rect x="736.5" y="728" width="21.5" height="33" fill="#000"/>
<text x="939" y="750" font-size="17" fill="#f4f4f4" textLength="43.5" lengthAdjust="spacingAndGlyphs">20%</text>
<text x="1056.8" y="750" font-size="17" fill="#f4f4f4" textLength="43.5" lengthAdjust="spacingAndGlyphs">40%</text>
<text x="1174.7" y="750" font-size="17" fill="#f4f4f4" textLength="43.5" lengthAdjust="spacingAndGlyphs">60%</text>
<text x="1292.8" y="750" font-size="17" fill="#f4f4f4" textLength="43.5" lengthAdjust="spacingAndGlyphs">80%</text>
<text x="1411" y="750" font-size="17" fill="#f4f4f4" textLength="56" lengthAdjust="spacingAndGlyphs">100%</text>
<rect x="757.8" y="761" width="763.5" height="31" fill="#404040"/>
<rect x="736.5" y="761" width="21.3" height="31" fill="url(#gut)"/>
<text x="764.7" y="783.5" font-size="17" fill="#f4f4f4" textLength="85" lengthAdjust="spacingAndGlyphs">x: CIE31</text>
<text x="939" y="783.5" font-size="17" fill="#f4f4f4" textLength="73.3" lengthAdjust="spacingAndGlyphs">0,3340</text>
<text x="1056.8" y="783.5" font-size="17" fill="#f4f4f4" textLength="73.3" lengthAdjust="spacingAndGlyphs">0,3568</text>
<text x="1174.7" y="783.5" font-size="17" fill="#f4f4f4" textLength="73.3" lengthAdjust="spacingAndGlyphs">0,3785</text>
<text x="1292.8" y="783.5" font-size="17" fill="#f4f4f4" textLength="73.3" lengthAdjust="spacingAndGlyphs">0,3988</text>
<text x="1411" y="783.5" font-size="17" fill="#f4f4f4" textLength="73.3" lengthAdjust="spacingAndGlyphs">0,4217</text>
<rect x="757.8" y="792" width="763.5" height="31" fill="#818181"/>
<rect x="736.5" y="792" width="21.3" height="31" fill="url(#gut)"/>
<text x="764.7" y="814.5" font-size="17" fill="#ececec" textLength="85" lengthAdjust="spacingAndGlyphs">y: CIE31</text>
<text x="939" y="814.5" font-size="17" fill="#ececec" textLength="73.3" lengthAdjust="spacingAndGlyphs">0,3633</text>
<text x="1056.8" y="814.5" font-size="17" fill="#ececec" textLength="73.3" lengthAdjust="spacingAndGlyphs">0,4012</text>
<text x="1174.7" y="814.5" font-size="17" fill="#ececec" textLength="73.3" lengthAdjust="spacingAndGlyphs">0,4373</text>
<text x="1292.8" y="814.5" font-size="17" fill="#ececec" textLength="73.3" lengthAdjust="spacingAndGlyphs">0,4711</text>
<text x="1411" y="814.5" font-size="17" fill="#ececec" textLength="73.3" lengthAdjust="spacingAndGlyphs">0,5090</text>
<rect x="757.8" y="823" width="763.5" height="31" fill="#404040"/>
<rect x="736.5" y="823" width="21.3" height="31" fill="url(#gut)"/>
<text x="764.7" y="845.5" font-size="17" fill="#f4f4f4" textLength="13" lengthAdjust="spacingAndGlyphs">Y</text>
<text x="939" y="845.5" font-size="17" fill="#f4f4f4" textLength="101" lengthAdjust="spacingAndGlyphs">247,7760</text>
<text x="1056.8" y="845.5" font-size="17" fill="#f4f4f4" textLength="101" lengthAdjust="spacingAndGlyphs">243,1900</text>
<text x="1174.7" y="845.5" font-size="17" fill="#f4f4f4" textLength="101" lengthAdjust="spacingAndGlyphs">239,5921</text>
<text x="1292.8" y="845.5" font-size="17" fill="#f4f4f4" textLength="101" lengthAdjust="spacingAndGlyphs">236,6837</text>
<text x="1411" y="845.5" font-size="17" fill="#f4f4f4" textLength="101" lengthAdjust="spacingAndGlyphs">232,4517</text>
<rect x="757.8" y="854" width="763.5" height="31" fill="#818181"/>
<rect x="736.5" y="854" width="21.3" height="31" fill="url(#gut)"/>
<text x="764.7" y="876.5" font-size="17" fill="#ececec" textLength="155.5" lengthAdjust="spacingAndGlyphs">Target x:CIE31</text>
<text x="939" y="876.5" font-size="17" fill="#ececec" textLength="73.3" lengthAdjust="spacingAndGlyphs">0,3344</text>
<text x="1056.8" y="876.5" font-size="17" fill="#ececec" textLength="73.3" lengthAdjust="spacingAndGlyphs">0,3564</text>
<text x="1174.7" y="876.5" font-size="17" fill="#ececec" textLength="73.3" lengthAdjust="spacingAndGlyphs">0,3773</text>
<text x="1292.8" y="876.5" font-size="17" fill="#ececec" textLength="73.3" lengthAdjust="spacingAndGlyphs">0,3969</text>
<text x="1411" y="876.5" font-size="17" fill="#ececec" textLength="73.3" lengthAdjust="spacingAndGlyphs">0,4193</text>
<rect x="757.8" y="885" width="763.5" height="31" fill="#404040"/>
<rect x="736.5" y="885" width="21.3" height="31" fill="url(#gut)"/>
<text x="764.7" y="907.5" font-size="17" fill="#f4f4f4" textLength="155.5" lengthAdjust="spacingAndGlyphs">Target y:CIE31</text>
<text x="939" y="907.5" font-size="17" fill="#f4f4f4" textLength="73.3" lengthAdjust="spacingAndGlyphs">0,3648</text>
<text x="1056.8" y="907.5" font-size="17" fill="#f4f4f4" textLength="73.3" lengthAdjust="spacingAndGlyphs">0,4013</text>
<text x="1174.7" y="907.5" font-size="17" fill="#f4f4f4" textLength="73.3" lengthAdjust="spacingAndGlyphs">0,4358</text>
<text x="1292.8" y="907.5" font-size="17" fill="#f4f4f4" textLength="73.3" lengthAdjust="spacingAndGlyphs">0,4682</text>
<text x="1411" y="907.5" font-size="17" fill="#f4f4f4" textLength="73.3" lengthAdjust="spacingAndGlyphs">0,5053</text>
<rect x="757.8" y="916" width="763.5" height="31" fill="#818181"/>
<rect x="736.5" y="916" width="21.3" height="31" fill="url(#gut)"/>
<text x="764.7" y="938.5" font-size="17" fill="#ececec" textLength="90.5" lengthAdjust="spacingAndGlyphs">Target Y</text>
<text x="939" y="938.5" font-size="17" fill="#ececec" textLength="101" lengthAdjust="spacingAndGlyphs">242,0931</text>
<text x="1056.8" y="938.5" font-size="17" fill="#ececec" textLength="101" lengthAdjust="spacingAndGlyphs">237,8437</text>
<text x="1174.7" y="938.5" font-size="17" fill="#ececec" textLength="101" lengthAdjust="spacingAndGlyphs">234,5786</text>
<text x="1292.8" y="938.5" font-size="17" fill="#ececec" textLength="101" lengthAdjust="spacingAndGlyphs">232,0161</text>
<text x="1411" y="938.5" font-size="17" fill="#ececec" textLength="101" lengthAdjust="spacingAndGlyphs">229,5388</text>
<path d="M735.5 977.500V728.5H1859.5V977.500H735.500" fill="none" stroke="#e8e8e8" stroke-width="1.3" stroke-dasharray="1.3 2.2"/>
<rect x="1115.75" y="107.75" width="748" height="599.5" fill="none" stroke="#c6c207" stroke-width="7.5"/>
<text x="1489.5" y="131" font-size="16" fill="#d9d9d4" text-anchor="middle" textLength="83" lengthAdjust="spacingAndGlyphs">CIE 1931 xy</text>
<rect x="1152" y="137" width="705" height="535.5" fill="#252525"/>
<g clip-path="url(#loc)">
<rect x="1202" y="140" width="36" height="2.5" fill="url(#g0)"/>
<rect x="1196" y="142" width="50" height="2.5" fill="url(#g1)"/>
<rect x="1192" y="144" width="61" height="2.5" fill="url(#g2)"/>
<rect x="1189" y="146" width="70" height="2.5" fill="url(#g3)"/>
<rect x="1186" y="148" width="78" height="2.5" fill="url(#g4)"/>
<rect x="1184" y="150" width="85" height="2.5" fill="url(#g5)"/>
<rect x="1181" y="152" width="93" height="2.5" fill="url(#g6)"/>
<rect x="1180" y="154" width="99" height="2.5" fill="url(#g7)"/>
<rect x="1178" y="156" width="106" height="2.5" fill="url(#g8)"/>
<rect x="1176" y="158" width="112" height="2.5" fill="url(#g9)"/>
<rect x="1175" y="160" width="117" height="2.5" fill="url(#g10)"/>
<rect x="1174" y="162" width="123" height="2.5" fill="url(#g11)"/>
<rect x="1172" y="164" width="129" height="2.5" fill="url(#g12)"/>
<rect x="1171" y="166" width="134" height="2.5" fill="url(#g13)"/>
<rect x="1170" y="168" width="139" height="2.5" fill="url(#g14)"/>
<rect x="1169" y="170" width="144" height="2.5" fill="url(#g15)"/>
<rect x="1168" y="172" width="149" height="2.5" fill="url(#g16)"/>
<rect x="1167" y="174" width="153" height="2.5" fill="url(#g17)"/>
<rect x="1166" y="176" width="158" height="2.5" fill="url(#g18)"/>
<rect x="1165" y="178" width="163" height="2.5" fill="url(#g19)"/>
<rect x="1164" y="180" width="167" height="2.5" fill="url(#g20)"/>
<rect x="1164" y="182" width="171" height="2.5" fill="url(#g21)"/>
<rect x="1163" y="184" width="175" height="2.5" fill="url(#g22)"/>
<rect x="1162" y="186" width="179" height="2.5" fill="url(#g23)"/>
<rect x="1162" y="188" width="183" height="2.5" fill="url(#g24)"/>
<rect x="1161" y="190" width="187" height="2.5" fill="url(#g25)"/>
<rect x="1160" y="192" width="191" height="2.5" fill="url(#g26)"/>
<rect x="1160" y="194" width="195" height="2.5" fill="url(#g27)"/>
<rect x="1159" y="196" width="199" height="2.5" fill="url(#g28)"/>
<rect x="1159" y="198" width="202" height="2.5" fill="url(#g29)"/>
<rect x="1158" y="200" width="206" height="2.5" fill="url(#g30)"/>
<rect x="1158" y="202" width="209" height="2.5" fill="url(#g31)"/>
<rect x="1157" y="204" width="213" height="2.5" fill="url(#g32)"/>
<rect x="1157" y="206" width="217" height="2.5" fill="url(#g33)"/>
<rect x="1157" y="208" width="220" height="2.5" fill="url(#g34)"/>
<rect x="1156" y="210" width="224" height="2.5" fill="url(#g35)"/>
<rect x="1156" y="212" width="227" height="2.5" fill="url(#g36)"/>
<rect x="1155" y="214" width="231" height="2.5" fill="url(#g37)"/>
<rect x="1155" y="216" width="234" height="2.5" fill="url(#g38)"/>
<rect x="1155" y="218" width="237" height="2.5" fill="url(#g39)"/>
<rect x="1155" y="220" width="239" height="2.5" fill="url(#g40)"/>
<rect x="1154" y="222" width="243" height="2.5" fill="url(#g41)"/>
<rect x="1154" y="224" width="246" height="2.5" fill="url(#g42)"/>
<rect x="1154" y="226" width="249" height="2.5" fill="url(#g43)"/>
<rect x="1154" y="228" width="252" height="2.5" fill="url(#g44)"/>
<rect x="1153" y="230" width="256" height="2.5" fill="url(#g45)"/>
<rect x="1153" y="232" width="259" height="2.5" fill="url(#g46)"/>
<rect x="1153" y="234" width="262" height="2.5" fill="url(#g47)"/>
<rect x="1153" y="236" width="264" height="2.5" fill="url(#g48)"/>
<rect x="1153" y="238" width="267" height="2.5" fill="url(#g49)"/>
<rect x="1153" y="240" width="270" height="2.5" fill="url(#g50)"/>
<rect x="1153" y="242" width="273" height="2.5" fill="url(#g51)"/>
<rect x="1152" y="244" width="277" height="2.5" fill="url(#g52)"/>
<rect x="1152" y="246" width="279" height="2.5" fill="url(#g53)"/>
<rect x="1152" y="248" width="282" height="2.5" fill="url(#g54)"/>
<rect x="1152" y="250" width="285" height="2.5" fill="url(#g55)"/>
<rect x="1152" y="252" width="288" height="2.5" fill="url(#g56)"/>
<rect x="1152" y="254" width="290" height="2.5" fill="url(#g57)"/>
<rect x="1152" y="256" width="293" height="2.5" fill="url(#g58)"/>
<rect x="1152" y="258" width="296" height="2.5" fill="url(#g59)"/>
<rect x="1152" y="260" width="299" height="2.5" fill="url(#g60)"/>
<rect x="1152" y="262" width="301" height="2.5" fill="url(#g61)"/>
<rect x="1152" y="264" width="304" height="2.5" fill="url(#g62)"/>
<rect x="1152" y="266" width="307" height="2.5" fill="url(#g63)"/>
<rect x="1152" y="268" width="310" height="2.5" fill="url(#g64)"/>
<rect x="1152" y="270" width="312" height="2.5" fill="url(#g65)"/>
<rect x="1152" y="272" width="315" height="2.5" fill="url(#g66)"/>
<rect x="1152" y="274" width="318" height="2.5" fill="url(#g67)"/>
<rect x="1152" y="276" width="320" height="2.5" fill="url(#g68)"/>
<rect x="1152" y="278" width="323" height="2.5" fill="url(#g69)"/>
<rect x="1152" y="280" width="326" height="2.5" fill="url(#g70)"/>
<rect x="1152" y="282" width="328" height="2.5" fill="url(#g71)"/>
<rect x="1152" y="284" width="331" height="2.5" fill="url(#g72)"/>
<rect x="1152" y="286" width="334" height="2.5" fill="url(#g73)"/>
<rect x="1152" y="288" width="337" height="2.5" fill="url(#g74)"/>
<rect x="1153" y="290" width="338" height="2.5" fill="url(#g75)"/>
<rect x="1153" y="292" width="341" height="2.5" fill="url(#g76)"/>
<rect x="1153" y="294" width="344" height="2.5" fill="url(#g77)"/>
<rect x="1153" y="296" width="346" height="2.5" fill="url(#g78)"/>
<rect x="1153" y="298" width="349" height="2.5" fill="url(#g79)"/>
<rect x="1153" y="300" width="352" height="2.5" fill="url(#g80)"/>
<rect x="1153" y="302" width="354" height="2.5" fill="url(#g81)"/>
<rect x="1153" y="304" width="357" height="2.5" fill="url(#g82)"/>
<rect x="1154" y="306" width="359" height="2.5" fill="url(#g83)"/>
<rect x="1154" y="308" width="361" height="2.5" fill="url(#g84)"/>
<rect x="1154" y="310" width="364" height="2.5" fill="url(#g85)"/>
<rect x="1154" y="312" width="366" height="2.5" fill="url(#g86)"/>
<rect x="1154" y="314" width="369" height="2.5" fill="url(#g87)"/>
<rect x="1154" y="316" width="372" height="2.5" fill="url(#g88)"/>
<rect x="1155" y="318" width="373" height="2.5" fill="url(#g89)"/>
<rect x="1155" y="320" width="376" height="2.5" fill="url(#g90)"/>
<rect x="1155" y="322" width="379" height="2.5" fill="url(#g91)"/>
<rect x="1155" y="324" width="381" height="2.5" fill="url(#g92)"/>
<rect x="1155" y="326" width="384" height="2.5" fill="url(#g93)"/>
<rect x="1156" y="328" width="386" height="2.5" fill="url(#g94)"/>
<rect x="1156" y="330" width="388" height="2.5" fill="url(#g95)"/>
<rect x="1156" y="332" width="391" height="2.5" fill="url(#g96)"/>
<rect x="1156" y="334" width="394" height="2.5" fill="url(#g97)"/>
<rect x="1157" y="336" width="395" height="2.5" fill="url(#g98)"/>
<rect x="1157" y="338" width="398" height="2.5" fill="url(#g99)"/>
<rect x="1157" y="340" width="401" height="2.5" fill="url(#g100)"/>
<rect x="1157" y="342" width="403" height="2.5" fill="url(#g101)"/>
<rect x="1158" y="344" width="405" height="2.5" fill="url(#g102)"/>
<rect x="1158" y="346" width="407" height="2.5" fill="url(#g103)"/>
<rect x="1158" y="348" width="410" height="2.5" fill="url(#g104)"/>
<rect x="1158" y="350" width="413" height="2.5" fill="url(#g105)"/>
<rect x="1159" y="352" width="414" height="2.5" fill="url(#g106)"/>
<rect x="1159" y="354" width="417" height="2.5" fill="url(#g107)"/>
<rect x="1159" y="356" width="420" height="2.5" fill="url(#g108)"/>
<rect x="1159" y="358" width="422" height="2.5" fill="url(#g109)"/>
<rect x="1160" y="360" width="424" height="2.5" fill="url(#g110)"/>
<rect x="1160" y="362" width="427" height="2.5" fill="url(#g111)"/>
<rect x="1160" y="364" width="429" height="2.5" fill="url(#g112)"/>
<rect x="1161" y="366" width="431" height="2.5" fill="url(#g113)"/>
<rect x="1161" y="368" width="433" height="2.5" fill="url(#g114)"/>
<rect x="1161" y="370" width="436" height="2.5" fill="url(#g115)"/>
<rect x="1162" y="372" width="438" height="2.5" fill="url(#g116)"/>
<rect x="1162" y="374" width="440" height="2.5" fill="url(#g117)"/>
<rect x="1162" y="376" width="443" height="2.5" fill="url(#g118)"/>
<rect x="1163" y="378" width="445" height="2.5" fill="url(#g119)"/>
<rect x="1163" y="380" width="447" height="2.5" fill="url(#g120)"/>
<rect x="1163" y="382" width="450" height="2.5" fill="url(#g121)"/>
<rect x="1164" y="384" width="452" height="2.5" fill="url(#g122)"/>
<rect x="1164" y="386" width="454" height="2.5" fill="url(#g123)"/>
<rect x="1164" y="388" width="457" height="2.5" fill="url(#g124)"/>
<rect x="1165" y="390" width="458" height="2.5" fill="url(#g125)"/>
<rect x="1165" y="392" width="461" height="2.5" fill="url(#g126)"/>
<rect x="1166" y="394" width="463" height="2.5" fill="url(#g127)"/>
<rect x="1166" y="396" width="465" height="2.5" fill="url(#g128)"/>
<rect x="1166" y="398" width="468" height="2.5" fill="url(#g129)"/>
<rect x="1167" y="400" width="470" height="2.5" fill="url(#g130)"/>
<rect x="1167" y="402" width="472" height="2.5" fill="url(#g131)"/>
<rect x="1167" y="404" width="475" height="2.5" fill="url(#g132)"/>
<rect x="1168" y="406" width="477" height="2.5" fill="url(#g133)"/>
<rect x="1168" y="408" width="479" height="2.5" fill="url(#g134)"/>
<rect x="1169" y="410" width="481" height="2.5" fill="url(#g135)"/>
<rect x="1169" y="412" width="483" height="2.5" fill="url(#g136)"/>
<rect x="1170" y="414" width="485" height="2.5" fill="url(#g137)"/>
<rect x="1170" y="416" width="488" height="2.5" fill="url(#g138)"/>
<rect x="1170" y="418" width="490" height="2.5" fill="url(#g139)"/>
<rect x="1171" y="420" width="492" height="2.5" fill="url(#g140)"/>
<rect x="1171" y="422" width="495" height="2.5" fill="url(#g141)"/>
<rect x="1172" y="424" width="496" height="2.5" fill="url(#g142)"/>
<rect x="1172" y="426" width="499" height="2.5" fill="url(#g143)"/>
<rect x="1173" y="428" width="501" height="2.5" fill="url(#g144)"/>
<rect x="1173" y="430" width="503" height="2.5" fill="url(#g145)"/>
<rect x="1174" y="432" width="505" height="2.5" fill="url(#g146)"/>
<rect x="1174" y="434" width="507" height="2.5" fill="url(#g147)"/>
<rect x="1174" y="436" width="510" height="2.5" fill="url(#g148)"/>
<rect x="1175" y="438" width="512" height="2.5" fill="url(#g149)"/>
<rect x="1175" y="440" width="514" height="2.5" fill="url(#g150)"/>
<rect x="1176" y="442" width="516" height="2.5" fill="url(#g151)"/>
<rect x="1176" y="444" width="519" height="2.5" fill="url(#g152)"/>
<rect x="1177" y="446" width="520" height="2.5" fill="url(#g153)"/>
<rect x="1177" y="448" width="523" height="2.5" fill="url(#g154)"/>
<rect x="1178" y="450" width="525" height="2.5" fill="url(#g155)"/>
<rect x="1178" y="452" width="527" height="2.5" fill="url(#g156)"/>
<rect x="1179" y="454" width="529" height="2.5" fill="url(#g157)"/>
<rect x="1179" y="456" width="532" height="2.5" fill="url(#g158)"/>
<rect x="1180" y="458" width="533" height="2.5" fill="url(#g159)"/>
<rect x="1180" y="460" width="536" height="2.5" fill="url(#g160)"/>
<rect x="1181" y="462" width="538" height="2.5" fill="url(#g161)"/>
<rect x="1181" y="464" width="540" height="2.5" fill="url(#g162)"/>
<rect x="1182" y="466" width="542" height="2.5" fill="url(#g163)"/>
<rect x="1182" y="468" width="544" height="2.5" fill="url(#g164)"/>
<rect x="1183" y="470" width="546" height="2.5" fill="url(#g165)"/>
<rect x="1184" y="472" width="548" height="2.5" fill="url(#g166)"/>
<rect x="1184" y="474" width="550" height="2.5" fill="url(#g167)"/>
<rect x="1185" y="476" width="552" height="2.5" fill="url(#g168)"/>
<rect x="1185" y="478" width="555" height="2.5" fill="url(#g169)"/>
<rect x="1186" y="480" width="556" height="2.5" fill="url(#g170)"/>
<rect x="1186" y="482" width="559" height="2.5" fill="url(#g171)"/>
<rect x="1187" y="484" width="561" height="2.5" fill="url(#g172)"/>
<rect x="1187" y="486" width="563" height="2.5" fill="url(#g173)"/>
<rect x="1188" y="488" width="565" height="2.5" fill="url(#g174)"/>
<rect x="1189" y="490" width="566" height="2.5" fill="url(#g175)"/>
<rect x="1189" y="492" width="569" height="2.5" fill="url(#g176)"/>
<rect x="1190" y="494" width="571" height="2.5" fill="url(#g177)"/>
<rect x="1190" y="496" width="573" height="2.5" fill="url(#g178)"/>
<rect x="1191" y="498" width="575" height="2.5" fill="url(#g179)"/>
<rect x="1192" y="500" width="577" height="2.5" fill="url(#g180)"/>
<rect x="1192" y="502" width="578" height="2.5" fill="url(#g181)"/>
<rect x="1193" y="504" width="574" height="2.5" fill="url(#g182)"/>
<rect x="1193" y="506" width="569" height="2.5" fill="url(#g183)"/>
<rect x="1194" y="508" width="562" height="2.5" fill="url(#g184)"/>
<rect x="1195" y="510" width="555" height="2.5" fill="url(#g185)"/>
<rect x="1195" y="512" width="550" height="2.5" fill="url(#g186)"/>
<rect x="1196" y="514" width="543" height="2.5" fill="url(#g187)"/>
<rect x="1197" y="516" width="536" height="2.5" fill="url(#g188)"/>
<rect x="1197" y="518" width="531" height="2.5" fill="url(#g189)"/>
<rect x="1198" y="520" width="524" height="2.5" fill="url(#g190)"/>
<rect x="1198" y="522" width="518" height="2.5" fill="url(#g191)"/>
<rect x="1199" y="524" width="512" height="2.5" fill="url(#g192)"/>
<rect x="1200" y="526" width="505" height="2.5" fill="url(#g193)"/>
<rect x="1201" y="528" width="498" height="2.5" fill="url(#g194)"/>
<rect x="1201" y="530" width="493" height="2.5" fill="url(#g195)"/>
<rect x="1202" y="532" width="486" height="2.5" fill="url(#g196)"/>
<rect x="1203" y="534" width="479" height="2.5" fill="url(#g197)"/>
<rect x="1203" y="536" width="474" height="2.5" fill="url(#g198)"/>
<rect x="1204" y="538" width="467" height="2.5" fill="url(#g199)"/>
<rect x="1205" y="540" width="460" height="2.5" fill="url(#g200)"/>
<rect x="1206" y="542" width="454" height="2.5" fill="url(#g201)"/>
<rect x="1206" y="544" width="448" height="2.5" fill="url(#g202)"/>
<rect x="1207" y="546" width="441" height="2.5" fill="url(#g203)"/>
<rect x="1208" y="548" width="435" height="2.5" fill="url(#g204)"/>
<rect x="1209" y="550" width="428" height="2.5" fill="url(#g205)"/>
<rect x="1209" y="552" width="423" height="2.5" fill="url(#g206)"/>
<rect x="1210" y="554" width="416" height="2.5" fill="url(#g207)"/>
<rect x="1211" y="556" width="409" height="2.5" fill="url(#g208)"/>
<rect x="1212" y="558" width="403" height="2.5" fill="url(#g209)"/>
<rect x="1213" y="560" width="396" height="2.5" fill="url(#g210)"/>
<rect x="1214" y="562" width="389" height="2.5" fill="url(#g211)"/>
<rect x="1214" y="564" width="384" height="2.5" fill="url(#g212)"/>
<rect x="1215" y="566" width="377" height="2.5" fill="url(#g213)"/>
<rect x="1216" y="568" width="370" height="2.5" fill="url(#g214)"/>
<rect x="1217" y="570" width="364" height="2.5" fill="url(#g215)"/>
<rect x="1218" y="572" width="357" height="2.5" fill="url(#g216)"/>
<rect x="1219" y="574" width="350" height="2.5" fill="url(#g217)"/>
<rect x="1220" y="576" width="344" height="2.5" fill="url(#g218)"/>
<rect x="1221" y="578" width="337" height="2.5" fill="url(#g219)"/>
<rect x="1222" y="580" width="330" height="2.5" fill="url(#g220)"/>
<rect x="1223" y="582" width="324" height="2.5" fill="url(#g221)"/>
<rect x="1224" y="584" width="317" height="2.5" fill="url(#g222)"/>
<rect x="1225" y="586" width="310" height="2.5" fill="url(#g223)"/>
<rect x="1226" y="588" width="304" height="2.5" fill="url(#g224)"/>
<rect x="1226" y="590" width="298" height="2.5" fill="url(#g225)"/>
<rect x="1227" y="592" width="291" height="2.5" fill="url(#g226)"/>
<rect x="1228" y="594" width="285" height="2.5" fill="url(#g227)"/>
<rect x="1229" y="596" width="278" height="2.5" fill="url(#g228)"/>
<rect x="1230" y="598" width="271" height="2.5" fill="url(#g229)"/>
<rect x="1231" y="600" width="265" height="2.5" fill="url(#g230)"/>
<rect x="1233" y="602" width="257" height="2.5" fill="url(#g231)"/>
<rect x="1234" y="604" width="250" height="2.5" fill="url(#g232)"/>
<rect x="1235" y="606" width="244" height="2.5" fill="url(#g233)"/>
<rect x="1236" y="608" width="237" height="2.5" fill="url(#g234)"/>
<rect x="1237" y="610" width="230" height="2.5" fill="url(#g235)"/>
<rect x="1238" y="612" width="224" height="2.5" fill="url(#g236)"/>
<rect x="1239" y="614" width="217" height="2.5" fill="url(#g237)"/>
<rect x="1240" y="616" width="210" height="2.5" fill="url(#g238)"/>
<rect x="1241" y="618" width="204" height="2.5" fill="url(#g239)"/>
<rect x="1243" y="620" width="196" height="2.5" fill="url(#g240)"/>
<rect x="1244" y="622" width="189" height="2.5" fill="url(#g241)"/>
<rect x="1245" y="624" width="183" height="2.5" fill="url(#g242)"/>
<rect x="1246" y="626" width="176" height="2.5" fill="url(#g243)"/>
<rect x="1248" y="628" width="168" height="2.5" fill="url(#g244)"/>
<rect x="1249" y="630" width="162" height="2.5" fill="url(#g245)"/>
<rect x="1250" y="632" width="155" height="2.5" fill="url(#g246)"/>
<rect x="1252" y="634" width="148" height="2.5" fill="url(#g247)"/>
<rect x="1253" y="636" width="141" height="2.5" fill="url(#g248)"/>
<rect x="1255" y="638" width="133" height="2.5" fill="url(#g249)"/>
<rect x="1256" y="640" width="127" height="2.5" fill="url(#g250)"/>
<rect x="1258" y="642" width="119" height="2.5" fill="url(#g251)"/>
<rect x="1260" y="644" width="111" height="2.5" fill="url(#g252)"/>
<rect x="1262" y="646" width="104" height="2.5" fill="url(#g253)"/>
<rect x="1263" y="648" width="97" height="2.5" fill="url(#g254)"/>
<rect x="1266" y="650" width="88" height="2.5" fill="url(#g255)"/>
<rect x="1268" y="652" width="81" height="2.5" fill="url(#g256)"/>
<rect x="1270" y="654" width="73" height="2.5" fill="url(#g257)"/>
<rect x="1273" y="656" width="64" height="2.5" fill="url(#g258)"/>
<rect x="1276" y="658" width="56" height="2.5" fill="url(#g259)"/>
<rect x="1279" y="660" width="47" height="2.5" fill="url(#g260)"/>
<rect x="1282" y="662" width="38" height="2.5" fill="url(#g261)"/>
<rect x="1285" y="664" width="30" height="2.5" fill="url(#g262)"/>
<rect x="1287" y="666" width="22" height="2.5" fill="url(#g263)"/>
<rect x="1290" y="668" width="13" height="2.5" fill="url(#g264)"/>
<path d="M1297.3 669.2L1295.4 669.3L1293.5 668.3L1280.0 659.3L1274.5 655.4L1270.7 652.4L1266.5 648.5L1263.3 645.1L1259.6 640.8L1255.4 635.5L1250.9 629.1L1243.2 617.0L1234.4 600.9L1224.3 580.3L1216.8 563.6L1208.9 544.3L1205.0 533.6L1201.0 522.2L1193.3 497.5L1185.5 470.1L1177.9 440.3L1174.4 424.8L1171.0 409.0L1167.8 393.0L1164.9 376.9L1162.4 360.8L1160.1 344.7L1158.2 328.7L1156.6 313.0L1155.4 297.6L1154.6 282.8L1154.3 268.3L1154.5 254.4L1155.2 241.0L1156.3 228.1L1158.0 215.8L1160.2 204.3L1162.9 193.6L1166.2 183.7L1170.0 174.8L1174.2 166.8L1178.8 159.9L1183.9 154.1L1189.3 149.4L1195.1 145.7L1201.1 143.0L1207.3 141.2L1213.6 140.2L1220.1 140.0L1226.7 140.5L1233.4 141.6L1240.2 143.1L1247.0 145.0L1253.9 147.2L1260.8 149.7L1274.4 155.1L1287.6 161.0L1300.5 167.1L1313.1 173.5L1325.5 180.2L1337.8 187.3L1350.0 194.6L1362.1 202.2L1386.2 218.1L1410.3 234.7L1440.2 256.2L1470.2 278.2L1535.5 327.2L1767.5 503.1z M1688.1 461.8L1402.9 289.4L1277.1 634.1z" fill="#000" fill-opacity=".4" fill-rule="evenodd"/>
</g>
<rect x="1610" y="143.5" width="241" height="202.5" fill="#9a9a9a"/>
<g clip-path="url(#ins)">
<rect x="1611.5" y="145" width="238" height="3.5" fill="url(#i0)"/>
<rect x="1611.5" y="148" width="238" height="3.5" fill="url(#i1)"/>
<rect x="1611.5" y="151" width="238" height="3.5" fill="url(#i2)"/>
<rect x="1611.5" y="154" width="238" height="3.5" fill="url(#i3)"/>
<rect x="1611.5" y="157" width="238" height="3.5" fill="url(#i4)"/>
<rect x="1611.5" y="160" width="238" height="3.5" fill="url(#i5)"/>
<rect x="1611.5" y="163" width="238" height="3.5" fill="url(#i6)"/>
<rect x="1611.5" y="166" width="238" height="3.5" fill="url(#i7)"/>
<rect x="1611.5" y="169" width="238" height="3.5" fill="url(#i8)"/>
<rect x="1611.5" y="172" width="238" height="3.5" fill="url(#i9)"/>
<rect x="1611.5" y="175" width="238" height="3.5" fill="url(#i10)"/>
<rect x="1611.5" y="178" width="238" height="3.5" fill="url(#i11)"/>
<rect x="1611.5" y="181" width="238" height="3.5" fill="url(#i12)"/>
<rect x="1611.5" y="184" width="238" height="3.5" fill="url(#i13)"/>
<rect x="1611.5" y="187" width="238" height="3.5" fill="url(#i14)"/>
<rect x="1611.5" y="190" width="238" height="3.5" fill="url(#i15)"/>
<rect x="1611.5" y="193" width="238" height="3.5" fill="url(#i16)"/>
<rect x="1611.5" y="196" width="238" height="3.5" fill="url(#i17)"/>
<rect x="1611.5" y="199" width="238" height="3.5" fill="url(#i18)"/>
<rect x="1611.5" y="202" width="238" height="3.5" fill="url(#i19)"/>
<rect x="1611.5" y="205" width="238" height="3.5" fill="url(#i20)"/>
<rect x="1611.5" y="208" width="238" height="3.5" fill="url(#i21)"/>
<rect x="1611.5" y="211" width="238" height="3.5" fill="url(#i22)"/>
<rect x="1611.5" y="214" width="238" height="3.5" fill="url(#i23)"/>
<rect x="1611.5" y="217" width="238" height="3.5" fill="url(#i24)"/>
<rect x="1611.5" y="220" width="238" height="3.5" fill="url(#i25)"/>
<rect x="1611.5" y="223" width="238" height="3.5" fill="url(#i26)"/>
<rect x="1611.5" y="226" width="238" height="3.5" fill="url(#i27)"/>
<rect x="1611.5" y="229" width="238" height="3.5" fill="url(#i28)"/>
<rect x="1611.5" y="232" width="238" height="3.5" fill="url(#i29)"/>
<rect x="1611.5" y="235" width="238" height="3.5" fill="url(#i30)"/>
<rect x="1611.5" y="238" width="238" height="3.5" fill="url(#i31)"/>
<rect x="1611.5" y="241" width="238" height="3.5" fill="url(#i32)"/>
<rect x="1611.5" y="244" width="238" height="3.5" fill="url(#i33)"/>
<rect x="1611.5" y="247" width="238" height="3.5" fill="url(#i34)"/>
<rect x="1611.5" y="250" width="238" height="3.5" fill="url(#i35)"/>
<rect x="1611.5" y="253" width="238" height="3.5" fill="url(#i36)"/>
<rect x="1611.5" y="256" width="238" height="3.5" fill="url(#i37)"/>
<rect x="1611.5" y="259" width="238" height="3.5" fill="url(#i38)"/>
<rect x="1611.5" y="262" width="238" height="3.5" fill="url(#i39)"/>
<rect x="1611.5" y="265" width="238" height="3.5" fill="url(#i40)"/>
<rect x="1611.5" y="268" width="238" height="3.5" fill="url(#i41)"/>
<rect x="1611.5" y="271" width="238" height="3.5" fill="url(#i42)"/>
<rect x="1611.5" y="274" width="238" height="3.5" fill="url(#i43)"/>
<rect x="1611.5" y="277" width="238" height="3.5" fill="url(#i44)"/>
<rect x="1611.5" y="280" width="238" height="3.5" fill="url(#i45)"/>
<rect x="1611.5" y="283" width="238" height="3.5" fill="url(#i46)"/>
<rect x="1611.5" y="286" width="238" height="3.5" fill="url(#i47)"/>
<rect x="1611.5" y="289" width="238" height="3.5" fill="url(#i48)"/>
<rect x="1611.5" y="292" width="238" height="3.5" fill="url(#i49)"/>
<rect x="1611.5" y="295" width="238" height="3.5" fill="url(#i50)"/>
<rect x="1611.5" y="298" width="238" height="3.5" fill="url(#i51)"/>
<rect x="1611.5" y="301" width="238" height="3.5" fill="url(#i52)"/>
<rect x="1611.5" y="304" width="238" height="3.5" fill="url(#i53)"/>
<rect x="1611.5" y="307" width="238" height="3.5" fill="url(#i54)"/>
<rect x="1611.5" y="310" width="238" height="3.5" fill="url(#i55)"/>
<rect x="1611.5" y="313" width="238" height="3.5" fill="url(#i56)"/>
<rect x="1611.5" y="316" width="238" height="3.5" fill="url(#i57)"/>
<rect x="1611.5" y="319" width="238" height="3.5" fill="url(#i58)"/>
<rect x="1611.5" y="322" width="238" height="3.5" fill="url(#i59)"/>
<rect x="1611.5" y="325" width="238" height="3.5" fill="url(#i60)"/>
<rect x="1611.5" y="328" width="238" height="3.5" fill="url(#i61)"/>
<rect x="1611.5" y="331" width="238" height="3.5" fill="url(#i62)"/>
<rect x="1611.5" y="334" width="238" height="3.5" fill="url(#i63)"/>
<rect x="1611.5" y="337" width="238" height="3.5" fill="url(#i64)"/>
<rect x="1611.5" y="340" width="238" height="3.5" fill="url(#i65)"/>
<rect x="1611.5" y="343" width="238" height="2" fill="url(#i66)"/>
<path d="M1162.6 -133.1L2781.0 944.2L7781.0 943.2L7781.0 -5133.1L1162.6 -5133.1 z" fill="#000" fill-opacity=".4"/>
</g>
<line x1="1151" y1="137" x2="1857.5" y2="137" stroke="#a6a6a6" stroke-width="2"/>
<line x1="1151" y1="672.3" x2="1857.5" y2="672.3" stroke="#a6a6a6" stroke-width="2"/>
<line x1="1151.8" y1="136" x2="1151.8" y2="679" stroke="#a6a6a6" stroke-width="2"/>
<line x1="1856.7" y1="136" x2="1856.7" y2="673" stroke="#a6a6a6" stroke-width="2"/>
<line x1="1151.3" y1="672" x2="1151.3" y2="678.5" stroke="#e2e2e2" stroke-width="1.7"/>
<line x1="1145.5" y1="672.4" x2="1151" y2="672.4" stroke="#e2e2e2" stroke-width="1.7"/>
<text x="1151.3" y="695.7" font-size="16" fill="#d9d9d4" text-anchor="middle" textLength="8.7" lengthAdjust="spacingAndGlyphs">0</text>
<text x="1144" y="679.7" font-size="16" fill="#d9d9d4" text-anchor="end" textLength="8.7" lengthAdjust="spacingAndGlyphs">0</text>
<line x1="1235.17" y1="672" x2="1235.17" y2="678.5" stroke="#e2e2e2" stroke-width="1.7"/>
<line x1="1145.5" y1="608.77" x2="1151" y2="608.77" stroke="#e2e2e2" stroke-width="1.7"/>
<text x="1235.17" y="695.7" font-size="16" fill="#d9d9d4" text-anchor="middle" textLength="21.5" lengthAdjust="spacingAndGlyphs">0,1</text>
<text x="1144" y="616.07" font-size="16" fill="#d9d9d4" text-anchor="end" textLength="21.5" lengthAdjust="spacingAndGlyphs">0,1</text>
<line x1="1319.04" y1="672" x2="1319.04" y2="678.5" stroke="#e2e2e2" stroke-width="1.7"/>
<line x1="1145.5" y1="545.14" x2="1151" y2="545.14" stroke="#e2e2e2" stroke-width="1.7"/>
<text x="1319.04" y="695.7" font-size="16" fill="#d9d9d4" text-anchor="middle" textLength="21.5" lengthAdjust="spacingAndGlyphs">0,2</text>
<text x="1144" y="552.44" font-size="16" fill="#d9d9d4" text-anchor="end" textLength="21.5" lengthAdjust="spacingAndGlyphs">0,2</text>
<line x1="1402.91" y1="672" x2="1402.91" y2="678.5" stroke="#e2e2e2" stroke-width="1.7"/>
<line x1="1145.5" y1="481.51" x2="1151" y2="481.51" stroke="#e2e2e2" stroke-width="1.7"/>
<text x="1402.91" y="695.7" font-size="16" fill="#d9d9d4" text-anchor="middle" textLength="21.5" lengthAdjust="spacingAndGlyphs">0,3</text>
<text x="1144" y="488.81" font-size="16" fill="#d9d9d4" text-anchor="end" textLength="21.5" lengthAdjust="spacingAndGlyphs">0,3</text>
<line x1="1486.78" y1="672" x2="1486.78" y2="678.5" stroke="#e2e2e2" stroke-width="1.7"/>
<line x1="1145.5" y1="417.88" x2="1151" y2="417.88" stroke="#e2e2e2" stroke-width="1.7"/>
<text x="1486.78" y="695.7" font-size="16" fill="#d9d9d4" text-anchor="middle" textLength="21.5" lengthAdjust="spacingAndGlyphs">0,4</text>
<text x="1144" y="425.18" font-size="16" fill="#d9d9d4" text-anchor="end" textLength="21.5" lengthAdjust="spacingAndGlyphs">0,4</text>
<line x1="1570.65" y1="672" x2="1570.65" y2="678.5" stroke="#e2e2e2" stroke-width="1.7"/>
<line x1="1145.5" y1="354.25" x2="1151" y2="354.25" stroke="#e2e2e2" stroke-width="1.7"/>
<text x="1570.65" y="695.7" font-size="16" fill="#d9d9d4" text-anchor="middle" textLength="21.5" lengthAdjust="spacingAndGlyphs">0,5</text>
<text x="1144" y="361.55" font-size="16" fill="#d9d9d4" text-anchor="end" textLength="21.5" lengthAdjust="spacingAndGlyphs">0,5</text>
<line x1="1654.52" y1="672" x2="1654.52" y2="678.5" stroke="#e2e2e2" stroke-width="1.7"/>
<line x1="1145.5" y1="290.62" x2="1151" y2="290.62" stroke="#e2e2e2" stroke-width="1.7"/>
<text x="1654.52" y="695.7" font-size="16" fill="#d9d9d4" text-anchor="middle" textLength="21.5" lengthAdjust="spacingAndGlyphs">0,6</text>
<text x="1144" y="297.92" font-size="16" fill="#d9d9d4" text-anchor="end" textLength="21.5" lengthAdjust="spacingAndGlyphs">0,6</text>
<line x1="1738.39" y1="672" x2="1738.39" y2="678.5" stroke="#e2e2e2" stroke-width="1.7"/>
<line x1="1145.5" y1="226.99" x2="1151" y2="226.99" stroke="#e2e2e2" stroke-width="1.7"/>
<text x="1738.39" y="695.7" font-size="16" fill="#d9d9d4" text-anchor="middle" textLength="21.5" lengthAdjust="spacingAndGlyphs">0,7</text>
<text x="1144" y="234.29" font-size="16" fill="#d9d9d4" text-anchor="end" textLength="21.5" lengthAdjust="spacingAndGlyphs">0,7</text>
<line x1="1822.26" y1="672" x2="1822.26" y2="678.5" stroke="#e2e2e2" stroke-width="1.7"/>
<line x1="1145.5" y1="163.36" x2="1151" y2="163.36" stroke="#e2e2e2" stroke-width="1.7"/>
<text x="1822.26" y="695.7" font-size="16" fill="#d9d9d4" text-anchor="middle" textLength="21.5" lengthAdjust="spacingAndGlyphs">0,8</text>
<text x="1144" y="170.66" font-size="16" fill="#d9d9d4" text-anchor="end" textLength="21.5" lengthAdjust="spacingAndGlyphs">0,8</text>
<rect x="1403.9" y="420.4" width="14" height="14" fill="#c2e1c2" fill-opacity="0.38" stroke="#fff" stroke-opacity="0.8" stroke-width="2"/>
<rect x="1402.1" y="385.8" width="14" height="14" fill="#a0e1a0" fill-opacity="0.38" stroke="#fff" stroke-opacity="0.8" stroke-width="2"/>
<rect x="1398.9" y="353.3" width="14" height="14" fill="#7fe17f" fill-opacity="0.38" stroke="#fff" stroke-opacity="0.8" stroke-width="2"/>
<rect x="1398" y="319" width="14" height="14" fill="#53e153" fill-opacity="0.38" stroke="#fff" stroke-opacity="0.8" stroke-width="2"/>
<rect x="1394.8" y="281.8" width="14" height="14" fill="#00e100" fill-opacity="0.38" stroke="#fff" stroke-opacity="0.8" stroke-width="2"/>
<rect x="1424.5" y="432.3" width="14" height="14" fill="#e1e1c2" fill-opacity="0.38" stroke="#fff" stroke-opacity="0.8" stroke-width="2"/>
<rect x="1441.9" y="408.1" width="14" height="14" fill="#e1e1a0" fill-opacity="0.38" stroke="#fff" stroke-opacity="0.8" stroke-width="2"/>
<rect x="1460.1" y="387.8" width="14" height="14" fill="#e1e17f" fill-opacity="0.38" stroke="#fff" stroke-opacity="0.8" stroke-width="2"/>
<rect x="1476" y="366.8" width="14" height="14" fill="#e1e153" fill-opacity="0.38" stroke="#fff" stroke-opacity="0.8" stroke-width="2"/>
<rect x="1495.4" y="342.8" width="14" height="14" fill="#e1e100" fill-opacity="0.38" stroke="#fff" stroke-opacity="0.8" stroke-width="2"/>
<rect x="1390.5" y="455.4" width="14" height="14" fill="#c2e1e1" fill-opacity="0.38" stroke="#fff" stroke-opacity="0.8" stroke-width="2"/>
<rect x="1375.5" y="455.4" width="14" height="14" fill="#a0e1e1" fill-opacity="0.38" stroke="#fff" stroke-opacity="0.8" stroke-width="2"/>
<rect x="1359.3" y="455.4" width="14" height="14" fill="#7fe1e1" fill-opacity="0.38" stroke="#fff" stroke-opacity="0.8" stroke-width="2"/>
<rect x="1345" y="455.4" width="14" height="14" fill="#53e1e1" fill-opacity="0.38" stroke="#fff" stroke-opacity="0.8" stroke-width="2"/>
<rect x="1332" y="455.4" width="14" height="14" fill="#00e1e1" fill-opacity="0.38" stroke="#fff" stroke-opacity="0.8" stroke-width="2"/>
<rect x="1408.2" y="478.1" width="14" height="14" fill="#e1c2e1" fill-opacity="0.38" stroke="#fff" stroke-opacity="0.8" stroke-width="2"/>
<rect x="1409.6" y="501.7" width="14" height="14" fill="#e1a0e1" fill-opacity="0.38" stroke="#fff" stroke-opacity="0.8" stroke-width="2"/>
<rect x="1409.6" y="521.3" width="14" height="14" fill="#e17fe1" fill-opacity="0.38" stroke="#fff" stroke-opacity="0.8" stroke-width="2"/>
<rect x="1411.2" y="543.1" width="14" height="14" fill="#e153e1" fill-opacity="0.38" stroke="#fff" stroke-opacity="0.8" stroke-width="2"/>
<rect x="1412.6" y="567.3" width="14" height="14" fill="#e100e1" fill-opacity="0.38" stroke="#fff" stroke-opacity="0.8" stroke-width="2"/>
<rect x="1378.3" y="490.2" width="14" height="14" fill="#c2c2e1" fill-opacity="0.38" stroke="#fff" stroke-opacity="0.8" stroke-width="2"/>
<rect x="1352" y="523.9" width="14" height="14" fill="#a0a0e1" fill-opacity="0.38" stroke="#fff" stroke-opacity="0.8" stroke-width="2"/>
<rect x="1324.9" y="556.6" width="14" height="14" fill="#7f7fe1" fill-opacity="0.38" stroke="#fff" stroke-opacity="0.8" stroke-width="2"/>
<rect x="1298.5" y="589.2" width="14" height="14" fill="#5353e1" fill-opacity="0.38" stroke="#fff" stroke-opacity="0.8" stroke-width="2"/>
<rect x="1269" y="626.1" width="14" height="14" fill="#0000e1" fill-opacity="0.38" stroke="#fff" stroke-opacity="0.8" stroke-width="2"/>
<rect x="1460.1" y="454" width="14" height="14" fill="#e1c2c2" fill-opacity="0.38" stroke="#fff" stroke-opacity="0.8" stroke-width="2"/>
<rect x="1516" y="454" width="14" height="14" fill="#e1a0a0" fill-opacity="0.38" stroke="#fff" stroke-opacity="0.8" stroke-width="2"/>
<rect x="1566.3" y="454" width="14" height="14" fill="#e17f7f" fill-opacity="0.38" stroke="#fff" stroke-opacity="0.8" stroke-width="2"/>
<rect x="1620" y="454" width="14" height="14" fill="#e15353" fill-opacity="0.38" stroke="#fff" stroke-opacity="0.8" stroke-width="2"/>
<rect x="1680.9" y="454" width="14" height="14" fill="#e10000" fill-opacity="0.38" stroke="#fff" stroke-opacity="0.8" stroke-width="2"/>
<rect x="1406.25" y="455.25" width="14.3" height="14.3" fill="#fff" fill-opacity="0" stroke="#000" stroke-opacity="1" stroke-width="1.7"/>
<circle cx="1410.5" cy="428.2" r="4.2" fill="#a4bea4" stroke="#000" stroke-opacity=".78" stroke-width="1.4"/>
<circle cx="1407.9" cy="391.4" r="4.2" fill="#87be87" stroke="#000" stroke-opacity=".78" stroke-width="1.4"/>
<circle cx="1405" cy="355.9" r="4.2" fill="#6bbe6b" stroke="#000" stroke-opacity=".78" stroke-width="1.4"/>
<circle cx="1403" cy="320.3" r="4.2" fill="#46be46" stroke="#000" stroke-opacity=".78" stroke-width="1.4"/>
<circle cx="1399" cy="283.5" r="4.2" fill="#00be00" stroke="#000" stroke-opacity=".78" stroke-width="1.4"/>
<circle cx="1431.3" cy="440.3" r="4.2" fill="#bebea4" stroke="#000" stroke-opacity=".78" stroke-width="1.4"/>
<circle cx="1450.5" cy="414.8" r="4.2" fill="#bebe87" stroke="#000" stroke-opacity=".78" stroke-width="1.4"/>
<circle cx="1468.5" cy="392.8" r="4.2" fill="#bebe6b" stroke="#000" stroke-opacity=".78" stroke-width="1.4"/>
<circle cx="1484.8" cy="370.8" r="4.2" fill="#bebe46" stroke="#000" stroke-opacity=".78" stroke-width="1.4"/>
<circle cx="1503.8" cy="347" r="4.2" fill="#bebe00" stroke="#000" stroke-opacity=".78" stroke-width="1.4"/>
<circle cx="1397.5" cy="462.3" r="4.2" fill="#a4bebe" stroke="#000" stroke-opacity=".78" stroke-width="1.4"/>
<circle cx="1382.4" cy="462.3" r="4.2" fill="#87bebe" stroke="#000" stroke-opacity=".78" stroke-width="1.4"/>
<circle cx="1366.1" cy="462.3" r="4.2" fill="#6bbebe" stroke="#000" stroke-opacity=".78" stroke-width="1.4"/>
<circle cx="1351.5" cy="462.3" r="4.2" fill="#46bebe" stroke="#000" stroke-opacity=".78" stroke-width="1.4"/>
<circle cx="1336.8" cy="462.3" r="4.2" fill="#00bebe" stroke="#000" stroke-opacity=".78" stroke-width="1.4"/>
<circle cx="1415.2" cy="485.9" r="4.2" fill="#bea4be" stroke="#000" stroke-opacity=".78" stroke-width="1.4"/>
<circle cx="1416.6" cy="508.7" r="4.2" fill="#be87be" stroke="#000" stroke-opacity=".78" stroke-width="1.4"/>
<circle cx="1417.8" cy="528.3" r="4.2" fill="#be6bbe" stroke="#000" stroke-opacity=".78" stroke-width="1.4"/>
<circle cx="1419.4" cy="551.3" r="4.2" fill="#be46be" stroke="#000" stroke-opacity=".78" stroke-width="1.4"/>
<circle cx="1421" cy="573.7" r="4.2" fill="#be00be" stroke="#000" stroke-opacity=".78" stroke-width="1.4"/>
<circle cx="1385.3" cy="498" r="4.2" fill="#a4a4be" stroke="#000" stroke-opacity=".78" stroke-width="1.4"/>
<circle cx="1359" cy="531.9" r="4.2" fill="#8787be" stroke="#000" stroke-opacity=".78" stroke-width="1.4"/>
<circle cx="1330.3" cy="566.7" r="4.2" fill="#6b6bbe" stroke="#000" stroke-opacity=".78" stroke-width="1.4"/>
<circle cx="1305.5" cy="599" r="4.2" fill="#4646be" stroke="#000" stroke-opacity=".78" stroke-width="1.4"/>
<circle cx="1276.8" cy="634.3" r="4.2" fill="#0000be" stroke="#000" stroke-opacity=".78" stroke-width="1.4"/>
<circle cx="1468.6" cy="462.5" r="4.2" fill="#bea4a4" stroke="#000" stroke-opacity=".78" stroke-width="1.4"/>
<circle cx="1527.9" cy="461" r="4.2" fill="#be8787" stroke="#000" stroke-opacity=".78" stroke-width="1.4"/>
<circle cx="1574.7" cy="461" r="4.2" fill="#be6b6b" stroke="#000" stroke-opacity=".78" stroke-width="1.4"/>
<circle cx="1640.6" cy="459.2" r="4.2" fill="#be4646" stroke="#000" stroke-opacity=".78" stroke-width="1.4"/>
<circle cx="1687.5" cy="459.2" r="4.2" fill="#be0000" stroke="#000" stroke-opacity=".78" stroke-width="1.4"/>
<circle cx="1413.4" cy="462.4" r="4.6" fill="#fff" stroke="#000" stroke-opacity=".78" stroke-width="1.4"/>
<rect x="1722" y="237" width="14" height="14" fill="#c2c200" fill-opacity="0" stroke="#fff" stroke-opacity="0.95" stroke-width="2"/>
<circle cx="1741.1" cy="229.1" r="3.9" fill="#c2c200" stroke="#000" stroke-opacity=".78" stroke-width="1.4"/>
<rect x="0" y="978" width="1912" height="62" fill="url(#bs)"/>
<path d="M1.5 1040v-58a4 4 0 0 1 4-4h36.500a4 4 0 0 1 4 4v58z" fill="url(#bt)"/>
<circle cx="23" cy="986.500" r="7" fill="#6e6e6e"/><circle cx="23" cy="986" r="6.500" fill="#8a8a8a"/><path d="M18.500 989l4.500-5.500l4.500 5.500z" fill="#2a2a2a"/>
<rect x="6" y="1004" width="35.500" height="30" rx="3" fill="#ffff00"/>
<path d="M52 1040v-58a4 4 0 0 1 4-4h142.500a4 4 0 0 1 4 4v58z" fill="url(#bt)"/>
<rect x="57.7" y="983" width="140" height="37" rx="3.500" fill="#000" fill-opacity=".18"/>
<rect x="58.3" y="983.500" width="139" height="35.800" rx="3" fill="#c3c3a8"/>
<text x="127.5" y="1034" font-size="10.5" fill="#262626" text-anchor="middle" textLength="20.5" lengthAdjust="spacingAndGlyphs" stroke="#262626" stroke-width=".25">20%</text>
<path d="M204 1040v-58a4 4 0 0 1 4-4h142.500a4 4 0 0 1 4 4v58z" fill="url(#bt)"/>
<rect x="209.7" y="983" width="140" height="37" rx="3.500" fill="#000" fill-opacity=".18"/>
<rect x="210.3" y="983.500" width="139" height="35.800" rx="3" fill="#c3c38a"/>
<text x="279.5" y="1034" font-size="10.5" fill="#262626" text-anchor="middle" textLength="20.5" lengthAdjust="spacingAndGlyphs" stroke="#262626" stroke-width=".25">40%</text>
<path d="M356 1040v-58a4 4 0 0 1 4-4h142.500a4 4 0 0 1 4 4v58z" fill="url(#bt)"/>
<rect x="361.7" y="983" width="140" height="37" rx="3.500" fill="#000" fill-opacity=".18"/>
<rect x="362.3" y="983.500" width="139" height="35.800" rx="3" fill="#c3c36e"/>
<text x="431.5" y="1034" font-size="10.5" fill="#262626" text-anchor="middle" textLength="20.5" lengthAdjust="spacingAndGlyphs" stroke="#262626" stroke-width=".25">60%</text>
<path d="M508 1040v-58a4 4 0 0 1 4-4h142.500a4 4 0 0 1 4 4v58z" fill="url(#bt)"/>
<rect x="513.7" y="983" width="140" height="37" rx="3.500" fill="#000" fill-opacity=".18"/>
<rect x="514.3" y="983.500" width="139" height="35.800" rx="3" fill="#c3c248"/>
<text x="583.5" y="1034" font-size="10.5" fill="#262626" text-anchor="middle" textLength="20.5" lengthAdjust="spacingAndGlyphs" stroke="#262626" stroke-width=".25">80%</text>
<path d="M660 1040v-58a4 4 0 0 1 4-4h142.500a4 4 0 0 1 4 4v58z" fill="url(#bsel)"/>
<rect x="666.3" y="983.500" width="139" height="35.800" rx="3" fill="#c6c300"/>
<text x="735.5" y="1034" font-size="10.5" fill="#fff" text-anchor="middle" textLength="27" lengthAdjust="spacingAndGlyphs" font-weight="bold">100%</text>
<path d="M1597 996v-14a4 4 0 0 1 4-4h40a4 4 0 0 1 4 4v14z" fill="url(#c1)"/>
<line x1="1597" y1="996.5" x2="1645" y2="996.5" stroke="#444" stroke-width="1"/>
<path d="M1597 997h48v43h-44a4 4 0 0 1-4-4z" fill="url(#c2)"/>
<circle cx="1621" cy="987" r="6.500" fill="url(#cc)"/><path d="M1616.500 989.500l4.500-5l4.500 5z" fill="#3a3a3a"/>
<rect x="1606.200" y="1003.600" width="28.600" height="28" rx="4" fill="url(#sqi)" stroke="#2c2c2c" stroke-width="2.200"/>
<rect x="1614.400" y="1011" width="13" height="13.200" fill="#000"/>
<rect x="1646" y="978" width="46.4" height="30" fill="url(#c3)"/>
<line x1="1646.5" y1="978" x2="1646.5" y2="1008" stroke="#a8a8a8" stroke-width="1" opacity=".6"/>
<line x1="1691.9" y1="978" x2="1691.9" y2="1008" stroke="#3c3c3c" stroke-width="1"/>
<circle cx="1668.8" cy="993" r="9.800" fill="url(#cc)"/>
<rect x="1692.4" y="978" width="45.5" height="30" fill="url(#c3)"/>
<line x1="1692.9" y1="978" x2="1692.9" y2="1008" stroke="#a8a8a8" stroke-width="1" opacity=".6"/>
<line x1="1737.4" y1="978" x2="1737.4" y2="1008" stroke="#3c3c3c" stroke-width="1"/>
<circle cx="1714.6" cy="993" r="9.800" fill="url(#cc)"/>
<rect x="1737.9" y="978" width="44.6" height="30" fill="url(#c3)"/>
<line x1="1738.4" y1="978" x2="1738.4" y2="1008" stroke="#a8a8a8" stroke-width="1" opacity=".6"/>
<line x1="1782" y1="978" x2="1782" y2="1008" stroke="#3c3c3c" stroke-width="1"/>
<circle cx="1760.1" cy="993" r="9.800" fill="url(#cc)"/>
<rect x="1782.5" y="978" width="45" height="30" fill="url(#c3)"/>
<line x1="1783" y1="978" x2="1783" y2="1008" stroke="#a8a8a8" stroke-width="1" opacity=".6"/>
<line x1="1827" y1="978" x2="1827" y2="1008" stroke="#3c3c3c" stroke-width="1"/>
<circle cx="1805" cy="993" r="9.800" fill="url(#cc)"/>
<rect x="1827.5" y="978" width="44.5" height="30" fill="url(#c3)"/>
<line x1="1828" y1="978" x2="1828" y2="1008" stroke="#a8a8a8" stroke-width="1" opacity=".6"/>
<line x1="1871.5" y1="978" x2="1871.5" y2="1008" stroke="#3c3c3c" stroke-width="1"/>
<circle cx="1849.7" cy="993" r="9.800" fill="url(#cc)"/>
<rect x="1664.300" y="988.500" width="9" height="9" fill="#3a3a3a"/>
<path d="M1711.500 988l8 5l-8 5z" fill="#3a3a3a"/>
<path d="M1757 988h-2.200v10h2.200M1763.200 988h2.200v10h-2.200" fill="none" stroke="#3a3a3a" stroke-width="1.600"/><circle cx="1758.600" cy="993" r=".8" fill="#3a3a3a"/><circle cx="1761.600" cy="993" r=".8" fill="#3a3a3a"/>
<path d="M1805 993c-1.200-2-2.300-2.600-3.400-2.600a2.600 2.600 0 0 0 0 5.200c1.100 0 2.200-.6 3.400-2.600c1.200 2 2.300 2.600 3.400 2.600a2.600 2.600 0 0 0 0-5.200c-1.100 0-2.200.6-3.400 2.600z" fill="none" stroke="#3a3a3a" stroke-width="1.600"/>
<g fill="none" stroke="#3a3a3a" stroke-width="2"><path d="M1845 992a5 5 0 0 1 8.600-2.500"/><path d="M1854.400 994a5 5 0 0 1-8.600 2.500"/></g><path d="M1855.500 986.500v4.500h-4.500z M1843.900 999.500v-4.500h4.500z" fill="#3a3a3a"/>
<rect x="1872" y="978" width="40" height="30" fill="#2b2b2b"/>
<circle cx="1894.800" cy="994.500" r="11.500" fill="#383838"/>
<path d="M1646 1040v-26.500a4 4 0 0 1 4-4h132.500v30.500z" fill="url(#c4)"/>
<rect x="1782.5" y="1009.5" width="129.5" height="30.5" fill="url(#c4)"/>
<line x1="1782.5" y1="1009.5" x2="1782.5" y2="1040" stroke="#4a4a4a" stroke-width="1"/>
<line x1="1783.5" y1="1009.5" x2="1783.5" y2="1040" stroke="#b0b0b0" stroke-width="1" opacity=".5"/>
<line x1="1650" y1="1010" x2="1912" y2="1010" stroke="#c8c8c8" stroke-width="1" opacity=".6"/>
<circle cx="1677" cy="1024.200" r="10" fill="url(#cc)"/><circle cx="1890.600" cy="1024.200" r="10" fill="url(#cc)"/>
<path d="M1676 1019.500l-3.800 4.700l3.800 4.700M1681 1019.500l-3.800 4.700l3.800 4.700" fill="none" stroke="#3a3a3a" stroke-width="1.500"/>
<path d="M1887 1019.500l3.800 4.700l-3.800 4.700M1892 1019.500l3.800 4.700l-3.800 4.700" fill="none" stroke="#3a3a3a" stroke-width="1.500"/>
<text x="1704.2" y="1032.6" font-size="21.2" fill="#d0d0d0" textLength="49.2" lengthAdjust="spacingAndGlyphs" opacity=".5">Back</text>
<text x="1704.2" y="1031.8" font-size="21.2" fill="#333" textLength="49.2" lengthAdjust="spacingAndGlyphs" stroke="#333" stroke-width=".5">Back</text>
<text x="1810.6" y="1032.6" font-size="21.2" fill="#d0d0d0" textLength="51.4" lengthAdjust="spacingAndGlyphs" opacity=".5">Next</text>
<text x="1810.6" y="1031.8" font-size="21.2" fill="#333" textLength="51.4" lengthAdjust="spacingAndGlyphs" stroke="#333" stroke-width=".5">Next</text>
</svg>
</body></html>
